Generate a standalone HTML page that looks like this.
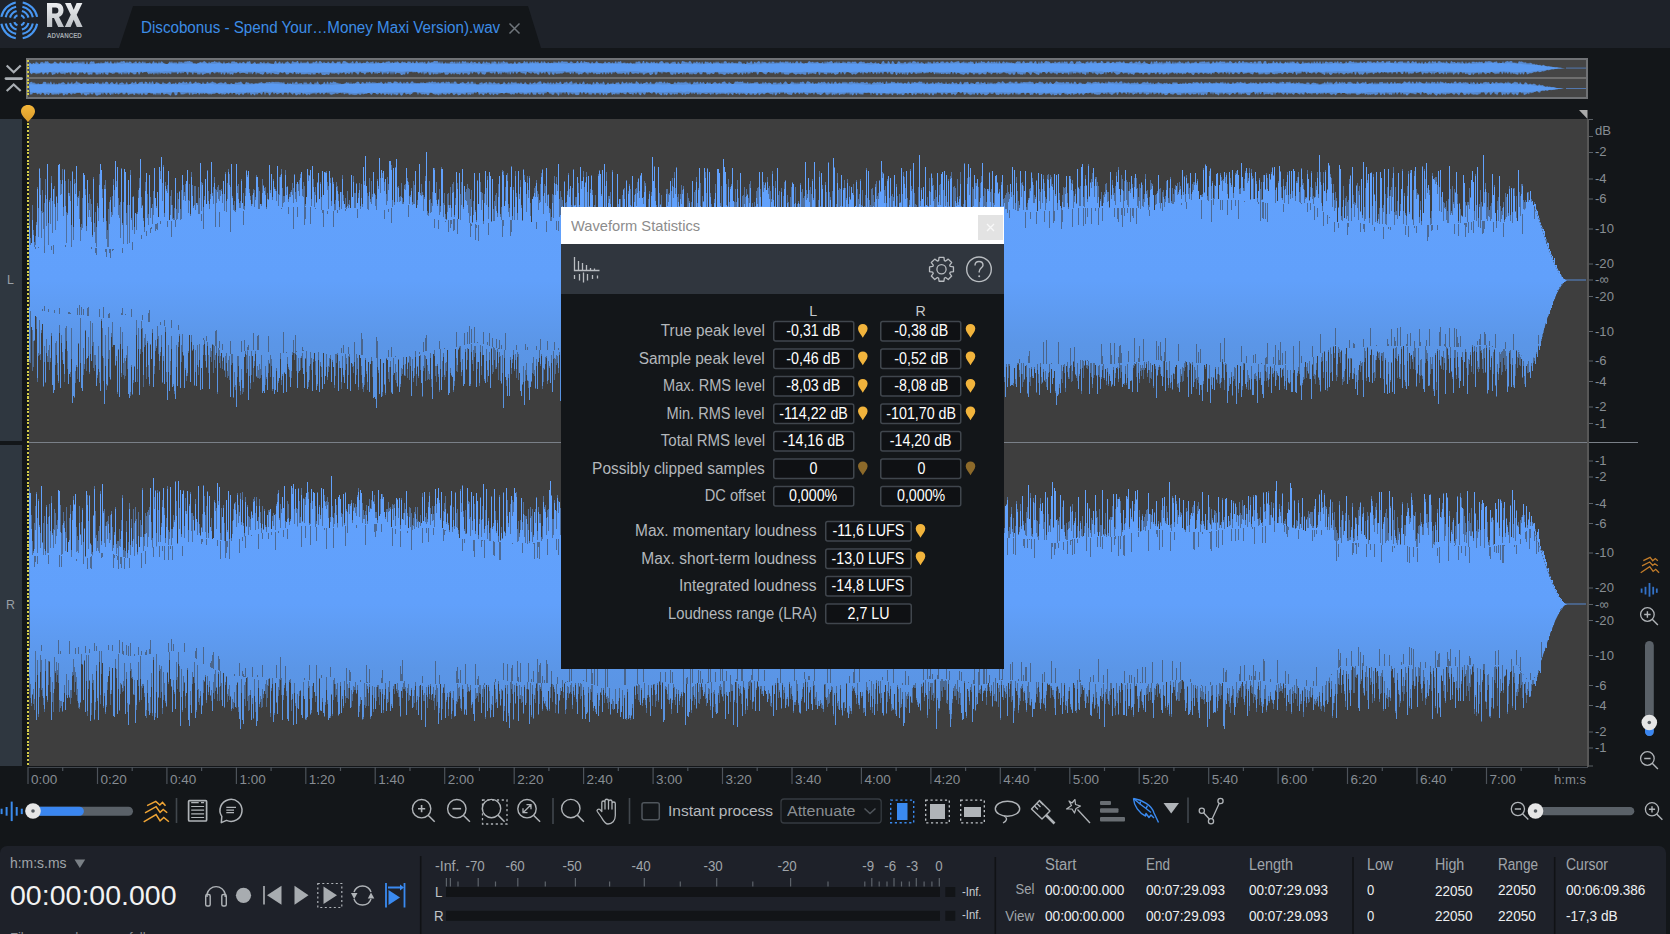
<!DOCTYPE html>
<html><head><meta charset="utf-8">
<style>
*{margin:0;padding:0;box-sizing:border-box}
html,body{width:1670px;height:934px;overflow:hidden;background:#131619;font-family:"Liberation Sans",sans-serif;position:relative}
.a{position:absolute}
.t{position:absolute;white-space:pre;line-height:1}
</style></head><body>
<!-- header -->
<div class="a" style="left:0;top:0;width:1670px;height:48px;background:#1e2229"></div>
<svg class="a" style="left:0;top:0" width="560" height="48">
<polygon points="119,48 133,6 528,6 541,48" fill="#131619"/>
<path d="M37.12 16.83A18.2 18.2 0 0 0 22.72 2.43M15.78 2.43A18.2 18.2 0 0 0 1.38 16.83M1.38 23.77A18.2 18.2 0 0 0 15.78 38.17M22.72 38.17A18.2 18.2 0 0 0 37.12 23.77M32.84 17.16A13.95 13.95 0 0 0 22.39 6.71M16.11 6.71A13.95 13.95 0 0 0 5.66 17.16M5.66 23.44A13.95 13.95 0 0 0 16.11 33.89M22.39 33.89A13.95 13.95 0 0 0 32.84 23.44M28.48 17.65A9.6 9.6 0 0 0 21.90 11.07M16.60 11.07A9.6 9.6 0 0 0 10.02 17.65M10.02 22.95A9.6 9.6 0 0 0 16.60 29.53M21.90 29.53A9.6 9.6 0 0 0 28.48 22.95M24.23 18.49A5.3 5.3 0 0 0 21.06 15.32M17.44 15.32A5.3 5.3 0 0 0 14.27 18.49M14.27 22.11A5.3 5.3 0 0 0 17.44 25.28M21.06 25.28A5.3 5.3 0 0 0 24.23 22.11" stroke="#4897f2" stroke-width="2.1" fill="none"/>
<defs><linearGradient id="rxg" x1="0" y1="0" x2="0" y2="1"><stop offset="0" stop-color="#eceef0"/><stop offset="1" stop-color="#bfc3c7"/></linearGradient></defs>
<path d="M47 3H56.5C61 3 63.5 5.8 63.5 10.2C63.5 13.6 61.8 16 59 16.9L64 27H58.2L54 18H52.2V27H47ZM52.2 7.6V13.6H55.8C57.5 13.6 58.4 12.5 58.4 10.6C58.4 8.7 57.5 7.6 55.8 7.6Z" fill="url(#rxg)"/>
<path d="M65 3H70.8L73.7 9.8L76.6 3H82.4L76.7 14.8L82.6 27H76.8L73.7 19.8L70.6 27H64.8L70.7 14.8Z" fill="url(#rxg)"/>
</svg>
<div class="t" style="left:47.3px;top:31.8px;font-size:7.5px;font-weight:700;color:#a3a9ae;transform:scaleX(0.83);transform-origin:left">ADVANCED</div>
<div class="a" style="left:508px;top:21px;width:13px;height:13px">
<svg width="13" height="13"><path d="M1.5 1.5L11.5 11.5M11.5 1.5L1.5 11.5" stroke="#6f757b" stroke-width="1.5"/></svg></div>
<!-- overview -->
<svg class="a" style="left:0;top:48px" width="26" height="56">
<path d="M6.7 17.5L13.7 24.2L20.7 17.5M6.7 43L13.7 36.5L20.7 43" stroke="#a9aeb3" stroke-width="2.2" fill="none"/>
<path d="M6 30.6H21.5" stroke="#a9aeb3" stroke-width="2.8" stroke-linecap="round"/>
</svg>
<div class="a" style="left:26px;top:58px;width:1562px;height:41px;background:#454545;border:2px solid #707275"></div>
<div style="position:absolute;left:28px;top:60px;width:1558px;height:37px;overflow:hidden">
<div class="a" style="left:-28px;top:-60px;width:1670px;height:104px"><svg class="a" style="left:0;top:0" width="1670" height="104">
<g transform="scale(1 0.1)">
<path d="M29 623l1 4 1 6 1 9 1-12 1-1 1 11 1-28 1 16 1-4 1 19 1-7 1-19 1 8 1-7 1 23 1-28 1 1 1 1 1-3 1 17 1 0 1 8 1-1 1 1 1-18 1-5 1 8 1 8 1 8 1-2 1-18 1 0 1 11 1-4 1 14 1-21 1-3 1 24 1-19 1 19 1-21 1-1 1 15 1 6 1-21 1 9 1-9 1 5 1-10 1 27 1-30 1 29 1-29 1 20 1-18 1 32 1-7 1-25 1 26 1 6 1-23 1-5 1-2 1 7 1-10 1 29 1-3 1-3 1-1 1-7 1 16 1-23 1 19 1-11 1 12 1-24 1 1 1 8 1-12 1 29 1-19 1-12 1 26 1-1 1 0 1-20 1 25 1-27 1 19 1-11 1 8 1-18 1 7 1-5 1-1 1 7 1 15 1-22 1 21 1-17 1 2 1 0 1 16 1-2 1-6 1-2 1-14 1 20 1 4 1-18 1 2 1 12 1-3 1-17 1 23 1-20 1 28 1-10 1 6 1-8 1-6 1 17 1-5 1-20 1-1 1 22 1-18 1 17 1 5 1-28 1 27 1-24 1 2 1 9 1 7 1 5 1 2 1 3 1-5 1-13 1-11 1 18 1-21 1 27 1-20 1 15 1-15 1 15 1 4 1-26 1 17 1-13 1 11 1 1 1 1 1-17 1 11 1-12 1 7 1-5 1 0 1 8 1-4 1 16 1 3 1-3 1 7 1-3 1-8 1 2 1-11 1 5 1 1 1-3 1-10 1 3 1 8 1 7 1 9 1-22 1 13 1-5 1-6 1 5 1-7 1-5 1 13 1-9 1 16 1-20 1 13 1 0 1 15 1-5 1-21 1 25 1-3 1-5 1 0 1-10 1 18 1-10 1-18 1 10 1-9 1 9 1 3 1-4 1 20 1-4 1-18 1 19 1-8 1-8 1-2 1 17 1 5 1-26 1 3 1-2 1-4 1 27 1 0 1-2 1-12 1-4 1 14 1 5 1-10 1 12 1-18 1-3 1 7 1 6 1-17 1 19 1-4 1 2 1-17 1 20 1-9 1 13 1-7 1 9 1-7 1-22 1-3 1 25 1-2 1-15 1-3 1 22 1-13 1 1 1 18 1-18 1-1 1-9 1 0 1 13 1 2 1 9 1-21 1-7 1 14 1-8 1 8 1-15 1 1 1 26 1-3 1-25 1 23 1-9 1 6 1-6 1 6 1-12 1-4 1 18 1 8 1-15 1 13 1-21 1 10 1-4 1-9 1-4 1 28 1-22 1-5 1 5 1 9 1 9 1-18 1 15 1-3 1 6 1-21 1 13 1 5 1 6 1-18 1-9 1 17 1 4 1 4 1-13 1-5 1 5 1-9 1 25 1-5 1-19 1-3 1 3 1 3 1 9 1 1 1 8 1-9 1 4 1-11 1-8 1 25 1-4 1-16 1-6 1 17 1 8 1-18 1 20 1 0 1-9 1-2 1 7 1-10 1-13 1 8 1 7 1 4 1-10 1 7 1-15 1 24 1-3 1-19 1 17 1-7 1 4 1 10 1-2 1-1 1-17 1 8 1 3 1-6 1-5 1 1 1-7 1 10 1 12 1-13 1 6 1 11 1-23 1 14 1-15 1 6 1 8 1 9 1-7 1-12 1 2 1 8 1-10 1 17 1-2 1-22 1 11 1-8 1 15 1 4 1-20 1 22 1 6 1-27 1 0 1 14 1 5 1-13 1 10 1-14 1 11 1 1 1-12 1 25 1-5 1-20 1-2 1 17 1-7 1 1 1-2 1-11 1 1 1 1 1-1 1 5 1 16 1-23 1 31 1-29 1 22 1 8 1-13 1-5 1 18 1-19 1 18 1-20 1 2 1-9 1 9 1 3 1-12 1 27 1-31 1 26 1-21 1 3 1 24 1-27 1-5 1 11 1-8 1 4 1 17 1-18 1 19 1-7 1-13 1 2 1 13 1-8 1 0 1 4 1 12 1-9 1-13 1 9 1 16 1 1 1-22 1-7 1 22 1-17 1 1 1 12 1-8 1 7 1 11 1-31 1 22 1-20 1 8 1-3 1 27 1-19 1-13 1 28 1-26 1 20 1-24 1 5 1 5 1 9 1-14 1 19 1 7 1-7 1-1 1 0 1 7 1-12 1-14 1 22 1 4 1-15 1-2 1-3 1 19 1-6 1 1 1-22 1 3 1 13 1-16 1 19 1 9 1-29 1 17 1-8 1-7 1 26 1-28 1 11 1 3 1-12 1 17 1 7 1-17 1-8 1 25 1-26 1 10 1 9 1 9 1-20 1 10 1 7 1-6 1-3 1 8 1-24 1 19 1-13 1 19 1-15 1-9 1 19 1-16 1-2 1 1 1 8 1-9 1 7 1-6 1 15 1 2 1-4 1-15 1 12 1 2 1 9 1-4 1 1 1-19 1-3 1 24 1-6 1-18 1 3 1 22 1-25 1 8 1 3 1 0 1 5 1-6 1 18 1-2 1-21 1 13 1 7 1-5 1-12 1-6 1 16 1 3 1 6 1-7 1 10 1-4 1-4 1-18 1 12 1 8 1-10 1-3 1 3 1 13 1-10 1 0 1 15 1-21 1-11 1 26 1-22 1 6 1-5 1-3 1 30 1-17 1 6 1-7 1 14 1-10 1 2 1 8 1-9 1-3 1 16 1-2 1-11 1 12 1-27 1 11 1-8 1 0 1-1 1 26 1-5 1-27 1 2 1 28 1-19 1-6 1 14 1-4 1 16 1-25 1 7 1 5 1-13 1 13 1 8 1-18 1 23 1-12 1-10 1-5 1-2 1 6 1 15 1-3 1-10 1 9 1-9 1 16 1 4 1-13 1 2 1-13 1 11 1-13 1 20 1 9 1-27 1 9 1 14 1 0 1-29 1 4 1 3 1 2 1 7 1-4 1 10 1-15 1-5 1 7 1 17 1-1 1-16 1 11 1-6 1-10 1 14 1-3 1-4 1 19 1-24 1 15 1 12 1-25 1-3 1 12 1-12 1 19 1-11 1-4 1 23 1-9 1-15 1 18 1-23 1 18 1-17 1 17 1-2 1 10 1-18 1 20 1-28 1 3 1-5 1 17 1 8 1-17 1 16 1-5 1-11 1 9 1 0 1 6 1-7 1 10 1-9 1-18 1 12 1-7 1 18 1 5 1-6 1 7 1 7 1-32 1 15 1-1 1 0 1-18 1 8 1 28 1-22 1-6 1 14 1-8 1-8 1-6 1 12 1 16 1-27 1 18 1-13 1 11 1-7 1 20 1-15 1 1 1-13 1 22 1-22 1 9 1-7 1 20 1-15 1 11 1-7 1 6 1-16 1 5 1 7 1-9 1 11 1-7 1-10 1 13 1-12 1 22 1-19 1 11 1 12 1-23 1 24 1-10 1-11 1-7 1 10 1 19 1-19 1-7 1 19 1-3 1 10 1-10 1 1 1 5 1-12 1-12 1 5 1 10 1-5 1-4 1 11 1-6 1 4 1-9 1 2 1 12 1 4 1 3 1-14 1-5 1 20 1-29 1 26 1-25 1 15 1-9 1 0 1-6 1 1 1 17 1 4 1-15 1 12 1-21 1 30 1-30 1 26 1-7 1 6 1-25 1 21 1-16 1 22 1-12 1-12 1 8 1-6 1 15 1-9 1-6 1 8 1-9 1 10 1 8 1 7 1-16 1-4 1-4 1 3 1 8 1-10 1 14 1 7 1-8 1-1 1 2 1-1 1-11 1 10 1 5 1 1 1-8 1-2 1 17 1-12 1 5 1 6 1 2 1-22 1-10 1 3 1 25 1-9 1 15 1-32 1 5 1 13 1 15 1-30 1-4 1 15 1 17 1-3 1-5 1-19 1-2 1 8 1 15 1-11 1 12 1-14 1 0 1-3 1 24 1-25 1 11 1-17 1 16 1-4 1-16 1 5 1-2 1 11 1 4 1-14 1 14 1 9 1-13 1 0 1 8 1 4 1 5 1-18 1 17 1-27 1 14 1-3 1 3 1 11 1-7 1-19 1 20 1-9 1-2 1-5 1 16 1-2 1-16 1 7 1-11 1 16 1 2 1-4 1-8 1 6 1 6 1 3 1-19 1 5 1 5 1 6 1-10 1 4 1-9 1 4 1-6 1 24 1-1 1-13 1 5 1-15 1 24 1-18 1 21 1-18 1 7 1-9 1-4 1 10 1-9 1 24 1 2 1-29 1 17 1 9 1-24 1 22 1-26 1 7 1 7 1-9 1 11 1 5 1-6 1-11 1 0 1 16 1-8 1-5 1 12 1-13 1 5 1 8 1-19 1 31 1-31 1 11 1 20 1-10 1-15 1-1 1 13 1-3 1-8 1 13 1-9 1 13 1-10 1 5 1 3 1-2 1 9 1-17 1-4 1-8 1 12 1-10 1 23 1-4 1-14 1-7 1 18 1 4 1-7 1 4 1-1 1-17 1 10 1-9 1 29 1-12 1-16 1 1 1 24 1-3 1-23 1 30 1-26 1-3 1 18 1-1 1-13 1-6 1 3 1 2 1 1 1 6 1 16 1-11 1 1 1 2 1-18 1 12 1 4 1-6 1-3 1-3 1 21 1-28 1 24 1-15 1-6 1 12 1-13 1 26 1-3 1-11 1-14 1 3 1 3 1 26 1-4 1-13 1-13 1 8 1-9 1 2 1 11 1 6 1 0 1-2 1 12 1-21 1 4 1-13 1 26 1-19 1 1 1-6 1 26 1-25 1 8 1-10 1 25 1 2 1-16 1 13 1-23 1 0 1 8 1 17 1-5 1 1 1-21 1 12 1-13 1 24 1 1 1-13 1-4 1 4 1 9 1-8 1-7 1 6 1-7 1 0 1 5 1 11 1-13 1-5 1 16 1 8 1-9 1 9 1-7 1-10 1-2 1-3 1 21 1-11 1 3 1-15 1 9 1 3 1-16 1 3 1 23 1-6 1-2 1-15 1 6 1 15 1-4 1 12 1 2 1 0 1-23 1-8 1 32 1-34 1 14 1-11 1-2 1 25 1-13 1-1 1 5 1-15 1 29 1-22 1 15 1-17 1-8 1 15 1-9 1-6 1 27 1 0 1-27 1 30 1-23 1 18 1-13 1 9 1-18 1 2 1 11 1 4 1-7 1 18 1-12 1-8 1 8 1-17 1 8 1 14 1 5 1-17 1 14 1-13 1 4 1-14 1 16 1 9 1-6 1-18 1 11 1-13 1 11 1-12 1 8 1 9 1-11 1 9 1-15 1 28 1-1 1-7 1-20 1 13 1 7 1-11 1-10 1 18 1-8 1-6 1-1 1 8 1-7 1 8 1-9 1 26 1-24 1 18 1-15 1-7 1 6 1 6 1 13 1-6 1-5 1-9 1 20 1-11 1-14 1-1 1 27 1-18 1-9 1 9 1 10 1-10 1 8 1-3 1 7 1-8 1-3 1 0 1 15 1-17 1-1 1 2 1 19 1-25 1 4 1-7 1 5 1 20 1 3 1-25 1 0 1-1 1 31 1-9 1-8 1 13 1-7 1 7 1-28 1 5 1 18 1-11 1-7 1 14 1 12 1-32 1 17 1 7 1 1 1 4 1-19 1-1 1 14 1-20 1 28 1-31 1 21 1-20 1 13 1-11 1 20 1 1 1-18 1 5 1 12 1 6 1 2 1-13 1-16 1 24 1-13 1 10 1-8 1 7 1-10 1 13 1 0 1-18 1 26 1-31 1 14 1 6 1-21 1 17 1 2 1-18 1 19 1 11 1-30 1 28 1-16 1-10 1 6 1 4 1 4 1-12 1 7 1-8 1 17 1 4 1-25 1 20 1-12 1-8 1 26 1-16 1-3 1 9 1 12 1-7 1 2 1-20 1 12 1 8 1-21 1 1 1-4 1 14 1-5 1-3 1 16 1-17 1 15 1-6 1 8 1-11 1-7 1 18 1-6 1-4 1-1 1 17 1-23 1-2 1 0 1 9 1-12 1 20 1-7 1 0 1 0 1 8 1-20 1-1 1 17 1-5 1 4 1-14 1-1 1 5 1 19 1-16 1-2 1 0 1-3 1-3 1 27 1-20 1 17 1-11 1-12 1 1 1 22 1-13 1-4 1-1 1-1 1 0 1 0 1 20 1-19 1 19 1-21 1-1 1-2 1 22 1-2 1-15 1-6 1 13 1-1 1-11 1 19 1 7 1-16 1 11 1 3 1-22 1 23 1 1 1-20 1 5 1 17 1-13 1-10 1-3 1 25 1-23 1-5 1 15 1-14 1 9 1 19 1-26 1 3 1-6 1 14 1-5 1 11 1-15 1 24 1-26 1 5 1 13 1-1 1 8 1-29 1 5 1 11 1-5 1 1 1 12 1-6 1-11 1 15 1-14 1 21 1-28 1 14 1 7 1 6 1-23 1 23 1-9 1-2 1-4 1 18 1-24 1 4 1-5 1 11 1-6 1-3 1 10 1-13 1 6 1 3 1-7 1 15 1 4 1-17 1-7 1 9 1-10 1 5 1-5 1 7 1 1 1 13 1-13 1 3 1-5 1-2 1 23 1-13 1 6 1 0 1 2 1-21 1 23 1-14 1-4 1-4 1-2 1 10 1-11 1 3 1-1 1 21 1-11 1 12 1-11 1 14 1-6 1-19 1 6 1-1 1-2 1 8 1 2 1 0 1-2 1 16 1-11 1 10 1-11 1 6 1 1 1 15 1-14 1 14 1-1 1-5 1 12 1 2 1-10 1 12 1-1 1-10 1 4 1 6 1 4 1 3 1 0 1-3 1 6 1-2 1 3 1 2 1-1 1 5 1-2 1 1 1 2 1 2 1 0 1 1 1 1 1 0 1 1 1 0 1 0 1 0 1 0 1 0 1 0 1 0 1 0 1 0 1 0 1 0 1 0 1 0 1 0 1 0 1 0 1 0 1 0 1 0 1 0 1 0 1 0 1 0-1 0-1 0-1 0-1 0-1 0-1 0-1 0-1 0-1 0-1 0-1 0-1 0-1 0-1 0-1 0-1 0-1 0-1 0-1 1-1 0-1 0-1 0-1 0-1 1-1 1-1 1-1 2-1 0-1 0-1 3-1 1-1 1-1 1-1 3-1-5-1 5-1 2-1 6-1-1-1-4-1 10-1-1-1 7-1-1-1 0-1 7-1-1-1 3-1-10-1 5-1 5-1 0-1-1-1 7-1 1-1 5-1-4-1 8-1 1-1 5-1-27-1-1-1 27-1 3-1-23-1 22-1-6-1-17-1 28-1-7-1 1-1-9-1 3-1 0-1-14-1 24-1-22-1-7-1 24-1-14-1-8-1 20-1-29-1 20-1 14-1-31-1 1-1 26-1-11-1 12-1-10-1 13-1-18-1 5-1-17-1-4-1 27-1-10-1 1-1 0-1 15-1-7-1-8-1-12-1 8-1 21-1-22-1 24-1-17-1-8-1 11-1-6-1 14-1 6-1-24-1 22-1 2-1 0-1-6-1-11-1 11-1-5-1-20-1 23-1-15-1-4-1-1-1 20-1 7-1-29-1 17-1-6-1 17-1-5-1-21-1 17-1-20-1 19-1-16-1 17-1 7-1-33-1 33-1-7-1-11-1 6-1 7-1-2-1-20-1 7-1 3-1 3-1 17-1-27-1 27-1-15-1-3-1-9-1 13-1-1-1 2-1-3-1-6-1 19-1-3-1-26-1 0-1 8-1 2-1 4-1 3-1-20-1 12-1 12-1-5-1 9-1-14-1 20-1-17-1-14-1 24-1-20-1-7-1 26-1 1-1-6-1-16-1 5-1-5-1 28-1-22-1-4-1 4-1-2-1 24-1-28-1 11-1-8-1 20-1-18-1 5-1-6-1-3-1 16-1-21-1 10-1 9-1 1-1-15-1 5-1 8-1-7-1 17-1-3-1-16-1 10-1-9-1 13-1-10-1 22-1-21-1-6-1 16-1 6-1 5-1-15-1 15-1-10-1-9-1-14-1 30-1 2-1-33-1 5-1 24-1-20-1 13-1-9-1 18-1-15-1 0-1 9-1 6-1-3-1-11-1 1-1-6-1 21-1-26-1 10-1 3-1 0-1-3-1-3-1 13-1 8-1-2-1-11-1-15-1 22-1-27-1 31-1 1-1-13-1 4-1-16-1 5-1-9-1 4-1 6-1 15-1-20-1 0-1 0-1 12-1-4-1-3-1-1-1-15-1 27-1-7-1-20-1 8-1 1-1-10-1 26-1-13-1 17-1-18-1 24-1-4-1-31-1 6-1 22-1-10-1-4-1 2-1-5-1 10-1 7-1-17-1-6-1 5-1 15-1 4-1-10-1-2-1 4-1-4-1 15-1-13-1 13-1-5-1 1-1-10-1-13-1 11-1 16-1-12-1 15-1-11-1 9-1-24-1 22-1-13-1 15-1-12-1 15-1-27-1 3-1 5-1-10-1 3-1 20-1-1-1-6-1-1-1-12-1 6-1-2-1 9-1-6-1 11-1-7-1-15-1-4-1 17-1 10-1-6-1-8-1-4-1 1-1 15-1 2-1-6-1-16-1 13-1 14-1-28-1 15-1 0-1-18-1 8-1 21-1-27-1 8-1-4-1 19-1-9-1-9-1-4-1-2-1 21-1-13-1 10-1 11-1-17-1 7-1 2-1-7-1 3-1-7-1 10-1 4-1-19-1 3-1 0-1 20-1-8-1-10-1 3-1-3-1 19-1 3-1-8-1-10-1-2-1 8-1-16-1-3-1 15-1 8-1-11-1 13-1-3-1-14-1 13-1-10-1-6-1 23-1-18-1 6-1 3-1-18-1 1-1 15-1-5-1 8-1 10-1-26-1 13-1 9-1-4-1 6-1-22-1 11-1 7-1-1-1-22-1 7-1 19-1-8-1-19-1 13-1-2-1-7-1 22-1 1-1-2-1-22-1-2-1 7-1 11-1 12-1-20-1 0-1 8-1-9-1-6-1 4-1-5-1 9-1 18-1-4-1-4-1 1-1-14-1 19-1-7-1-16-1 11-1-11-1 14-1-4-1-14-1-2-1 20-1 0-1 9-1-2-1 1-1-15-1-3-1-13-1 26-1-16-1-8-1 9-1 3-1-14-1 34-1-31-1 14-1 8-1-1-1 7-1-5-1-12-1 18-1 1-1-11-1-2-1-16-1 23-1-16-1 0-1-7-1-1-1 28-1-29-1 30-1 2-1-14-1 8-1-11-1-13-1 25-1-22-1 12-1-17-1 17-1 1-1-6-1 10-1-26-1 36-1-35-1 36-1-10-1-16-1 17-1-17-1 10-1 7-1-2-1-14-1 7-1-5-1 4-1 19-1-15-1-1-1-2-1-10-1 16-1-6-1 4-1-21-1 10-1 13-1-1-1-14-1-2-1-9-1 19-1 6-1-13-1 26-1-3-1-5-1 1-1-14-1 3-1-14-1 15-1 16-1-4-1-15-1-6-1-5-1 4-1 26-1-19-1 18-1-3-1-1-1 0-1-8-1 10-1-22-1-6-1 28-1 1-1 1-1-23-1 20-1 1-1-1-1-12-1 0-1 3-1-11-1-1-1-2-1 13-1-2-1 8-1-6-1-7-1 19-1-23-1 6-1-2-1 0-1 11-1 7-1-21-1 9-1-13-1 1-1 22-1-1-1 0-1-8-1-4-1 15-1-7-1 10-1-19-1 5-1-2-1 3-1 14-1-12-1-7-1 2-1-12-1 13-1 14-1-9-1-11-1 14-1 4-1 4-1-11-1 6-1-9-1-4-1-7-1 9-1 10-1-24-1 3-1 24-1-26-1 0-1 25-1-11-1 2-1 3-1 2-1-15-1 15-1-8-1 6-1 0-1-15-1 21-1-27-1 26-1-25-1 22-1-3-1-22-1 7-1 5-1-6-1-4-1 16-1-13-1 13-1-7-1 13-1-24-1 7-1 13-1-13-1 17-1-16-1 17-1-7-1 2-1-19-1 12-1 11-1-1-1-14-1-3-1 23-1 3-1-30-1 31-1-19-1 13-1-5-1-16-1 16-1-3-1-12-1 25-1 0-1-27-1-7-1 31-1-5-1 3-1-17-1-11-1 23-1-8-1-17-1 7-1-4-1 30-1-20-1-5-1 5-1 16-1-25-1 28-1-13-1-15-1 19-1 2-1-18-1-9-1 29-1-28-1 18-1 3-1-1-1-7-1-4-1 28-1-29-1 13-1-7-1-7-1 9-1 6-1 11-1-2-1-10-1 10-1 3-1-15-1-3-1-7-1-2-1 3-1 1-1 24-1-11-1-18-1 7-1 21-1-26-1 2-1 20-1-4-1 9-1 0-1-10-1-10-1 11-1-3-1-10-1 13-1-16-1 20-1 1-1-6-1 3-1-21-1 14-1-13-1 25-1 4-1-32-1-2-1 26-1-3-1-4-1 1-1-5-1 11-1-13-1 15-1-5-1-23-1 32-1-1-1-1-1-4-1-8-1 10-1-1-1-6-1 0-1 4-1 9-1-7-1-6-1-4-1-11-1 14-1-5-1 12-1 7-1-9-1 8-1-10-1 7-1-24-1 26-1-28-1 5-1-3-1 17-1-8-1 1-1 13-1-22-1 4-1 7-1-9-1 9-1-18-1 7-1 9-1 15-1-10-1 3-1-12-1-6-1-3-1-4-1 11-1 21-1-4-1-28-1 12-1-13-1 12-1 7-1-16-1 24-1-12-1 19-1-30-1 16-1 6-1-17-1 22-1 2-1-21-1 9-1 10-1-1-1-12-1-10-1 7-1-1-1 15-1 0-1-2-1-8-1 4-1 5-1-13-1 11-1 10-1-3-1-2-1-7-1 2-1-4-1 12-1-26-1 2-1-2-1 1-1 18-1-2-1-5-1-5-1 15-1-2-1-2-1 8-1-26-1 0-1 1-1-5-1 26-1-3-1 3-1-18-1-1-1 9-1 11-1-4-1 2-1-12-1 19-1-18-1 15-1-13-1-8-1 2-1 2-1 19-1-29-1 30-1-17-1-6-1 7-1 6-1 0-1-22-1 24-1 5-1-16-1 19-1-5-1 3-1-15-1-19-1 12-1-7-1 14-1-18-1 13-1-12-1 27-1-25-1 11-1-15-1 2-1 30-1-2-1 3-1-34-1 28-1 1-1 8-1 0-1-17-1-8-1 11-1-3-1 8-1 6-1-1-1-21-1 15-1-17-1 13-1 5-1-8-1 1-1-5-1 12-1-5-1 3-1-16-1-7-1 24-1 9-1-27-1 20-1 3-1-12-1-5-1 14-1-9-1 7-1-7-1 9-1-11-1-7-1-8-1 20-1-20-1 28-1-9-1-15-1 15-1 5-1-17-1 25-1-12-1-18-1 29-1-11-1-10-1 16-1-2-1-2-1 7-1-7-1-10-1 17-1-15-1-8-1 5-1 8-1-13-1 27-1-20-1 8-1-21-1 11-1 1-1 18-1-9-1 4-1 6-1-4-1-17-1 15-1-26-1 7-1 24-1-29-1 23-1-1-1-20-1 11-1-11-1 13-1-21-1 18-1-5-1 18-1-14-1 13-1-9-1 9-1-5-1 6-1-20-1 28-1-6-1-1-1-31-1 34-1 3-1-15-1-14-1-5-1 30-1-23-1 5-1 11-1-5-1-18-1 33-1-4-1-1-1-16-1 15-1-12-1-5-1-2-1 20-1-17-1 7-1-16-1 3-1 28-1-4-1-17-1 14-1-17-1 12-1-23-1 8-1 2-1 17-1-7-1-20-1 15-1 15-1-31-1 22-1 13-1-33-1 33-1-27-1 18-1-17-1 6-1-1-1 0-1 23-1-25-1 19-1-3-1-28-1 2-1 34-1-17-1-9-1 17-1-12-1 7-1-23-1 19-1-18-1 24-1 8-1 3-1-6-1 4-1-24-1 7-1 18-1-3-1-20-1 2-1-1-1-9-1 15-1 9-1-26-1 27-1 5-1 4-1-20-1 8-1-6-1 7-1 11-1-23-1 4-1 18-1-5-1-6-1 8-1-12-1 0-1 15-1-17-1 10-1 4-1-18-1 7-1 12-1 1-1-1-1 2-1-28-1 4-1 10-1-9-1 18-1-21-1 23-1-9-1 12-1-16-1 11-1 3-1-27-1 25-1 6-1-5-1-24-1 4-1 16-1-11-1 20-1-37-1 29-1-16-1 0-1 9-1-3-1-16-1 5-1 5-1-8-1 9-1-12-1 5-1-3-1 6-1 22-1-9-1-21-1 32-1-5-1 2-1 5-1 0-1-17-1 0-1-3-1-2-1 12-1 4-1-33-1 39-1-33-1 33-1-33-1 16-1 6-1 5-1-24-1 23-1-21-1 26-1-6-1-28-1 16-1 2-1-2-1 14-1-20-1 19-1-25-1 5-1 23-1-13-1-11-1 2-1 4-1-5-1 11-1 15-1-10-1-11-1 6-1-9-1-10-1 19-1 16-1-14-1-3-1-11-1 1-1 1-1 27-1-29-1 11-1 10-1-9-1-2-1 14-1-6-1-19-1 10-1 2-1 3-1-11-1 22-1 0-1-15-1 5-1-6-1 12-1-15-1 16-1-19-1 6-1 20-1-3-1-4-1 3-1 3-1 1-1-3-1 3-1-19-1-5-1 19-1-17-1-1-1 2-1 20-1-12-1 12-1-24-1 25-1-7-1 1-1-2-1-7-1 10-1-8-1 11-1-11-1 10-1-8-1-20-1 24-1-6-1-1-1 9-1-24-1 1-1 22-1-11-1 0-1-14-1 18-1 7-1-2-1 2-1-24-1 1-1 14-1-4-1-3-1-10-1 23-1 5-1-3-1-3-1 3-1-9-1-2-1-3-1 21-1-23-1 11-1-4-1 10-1-18-1-9-1 21-1 10-1-4-1-5-1 3-1-15-1 10-1-12-1 25-1-37-1 10-1 11-1 10-1-29-1 30-1-32-1 30-1-7-1 4-1-10-1 0-1-3-1 4-1-2-1 8-1-11-1-8-1 13-1 2-1-1-1-6-1 24-1-7-1-6-1 12-1-25-1 21-1-14-1-8-1 20-1 7-1-27-1 17-1 5-1-29-1 21-1-20-1 11-1-8-1 18-1-8-1-8-1-4-1 12-1 19-1-19-1 5-1-4-1 5-1 1-1 4-1 8-1-5-1-19-1 24-1-13-1 13-1-16-1-9-1 9-1-14-1 30-1-15-1-14-1 10-1-17-1 36-1-10-1-20-1 1-1 3-1 11-1-14-1 21-1-16-1 1-1 17-1-5-1-25-1 23-1-22-1 22-1-23-1 32-1-11-1 3-1-12-1 23-1-18-1 5-1 4-1-6-1 3-1-8-1 18-1-27-1 30-1-25-1 18-1-16-1 23-1-16-1-1-1 10-1-13-1 15-1-9-1-13-1-6-1 10-1-12-1 19-1-8-1-11-1 22-1 13-1-24-1-8-1 27-1-3-1 6-1-13-1-1-1-9-1-1-1 24-1-9-1-16-1 25-1-22-1 22-1-30-1 33-1-13-1-7-1 16-1-23-1 6-1-9-1 12-1 3-1 2-1 0-1-9-1-1-1-8-1 30-1-3-1-1-1-9-1-16-1 29-1-21-1 8-1 12-1-17-1 19-1-9-1 9-1-31-1 12-1-12-1 30-1-10-1 8-1-3-1 3-1-24-1 5-1 15-1-6-1-9-1-9-1 19-1-20-1 19-1 11-1 0-1-31-1 20-1-12-1 0-1-4-1 29-1-10-1-19-1 10-1 2-1-8-1 25-1-18-1 8-1-5-1 5-1-12-1-5-1 17-1-5-1-11-1 22-1-7-1 11-1-2-1-30-1 1-1 3-1 20-1 2-1-23-1 9-1 11-1 6-1-16-1-10-1 16-1-6-1 10-1-9-1 13-1-18-1 8-1-9-1 16-1-1-1-15Z" fill="#5a97ea" opacity="0.85"/>
<path d="M29 637l3 7 3-5 3 5 3-6 3-3 3 0 3 4 3-5 3 4 3-1 3-2 3 0 3 0 3 1 3 1 3 4 3-5 3 7 3 0 3 1 3-5 3-1 3 0 3 0 3-3 3 0 3 1 3 1 3 1 3-6 3 7 3-7 3 1 3 6 3 1 3-2 3 1 3-2 3-2 3 1 3 2 3-3 3 1 3-1 3 3 3 1 3-3 3-1 3 7 3-1 3-3 3 3 3-6 3 0 3 5 3-1 3-6 3 1 3 0 3 4 3 0 3 2 3-7 3 1 3 3 3-1 3 1 3 2 3-5 3 0 3 3 3-2 3-1 3 5 3-1 3 1 3 4 3-3 3 3 3-4 3 0 3 3 3-4 3 1 3 1 3-3 3 4 3-1 3-4 3 0 3 2 3-1 3-3 3 5 3-4 3 4 3-1 3-4 3-1 3 5 3-3 3 3 3-5 3 6 3 1 3-7 3 6 3 0 3-1 3-2 3 0 3-3 3 6 3-1 3 1 3-3 3-4 3-2 3 5 3 3 3-5 3-3 3 3 3 1 3-2 3 1 3 4 3-5 3 0 3 6 3-2 3 3 3-5 3-1 3 1 3 3 3 1 3-1 3 1 3 1 3 0 3 1 3 0 3-1 3-2 3 6 3-7 3 8 3-6 3 2 3-3 3 5 3 2 3-1 3-5 3 6 3-4 3 3 3-5 3 0 3 4 3-4 3 2 3-5 3 0 3 3 3-3 3-2 3 3 3-2 3 1 3-2 3 2 3-2 3 1 3-2 3 2 3 0 3 5 3-5 3 5 3-3 3 2 3-5 3 2 3-1 3 1 3 2 3-1 3-1 3 1 3 1 3 1 3 0 3-2 3 4 3-4 3-1 3 3 3-1 3-1 3 6 3-1 3-5 3-2 3 0 3 2 3 0 3 0 3 1 3-2 3 4 3-2 3 2 3 0 3 1 3 1 3-2 3 0 3 0 3 4 3-6 3 6 3-1 3-2 3 1 3-5 3 5 3-5 3 2 3 3 3-1 3-2 3-1 3 4 3-1 3-3 3 6 3-3 3 4 3 0 3-5 3 3 3 1 3-7 3 0 3 5 3-2 3-1 3 0 3-5 3 5 3-3 3 2 3-2 3 1 3-2 3 3 3-2 3-2 3 5 3 0 3-2 3-4 3 8 3-2 3-2 3 1 3-2 3 0 3-2 3 3 3 1 3 3 3-3 3 4 3-5 3 5 3-3 3 6 3 0 3-4 3-3 3 5 3 2 3-6 3 2 3 3 3-3 3-1 3 6 3-2 3-5 3 2 3 2 3-1 3 0 3-2 3 0 3 4 3-3 3-1 3 2 3-5 3 1 3-3 3 3 3-3 3 0 3-1 3 3 3-2 3 3 3-1 3 3 3-5 3 2 3 1 3 0 3-3 3 6 3-3 3 1 3-2 3 3 3-4 3 0 3 3 3 0 3-1 3 0 3-1 3-3 3 2 3 0 3 5 3-2 3 1 3-3 3-1 3 1 3 5 3-5 3 1 3 3 3-2 3 2 3 1 3 1 3-2 3 0 3 0 3-6 3-1 3 1 3-2 3-1 3 7 3-6 3 2 3-3 3 7 3-3 3-2 3 0 3 3 3 2 3 2 3 0 3 4 3 0 3-4 3-2 3 6 3-3 3-2 3 4 3 1 3-7 3 1 3 2 3 3 3-5 3 3 3-3 3 3 3-4 3-2 3 1 3-2 3 5 3 1 3-2 3 0 3-2 3-2 3-1 3 7 3-5 3 0 3 2 3-3 3 5 3-6 3 5 3-4 3 6 3 0 3 2 3-7 3 4 3-4 3 5 3-4 3 0 3 0 3-2 3 3 3-4 3 2 3-1 3 2 3 4 3 1 3-1 3-6 3 3 3-1 3 4 3 1 3-1 3-5 3 7 3-3 3-6 3 1 3 5 3 0 3-1 3-5 3 5 3-1 3-1 3-3 3 2 3-2 3 3 3-3 3 1 3 0 3 1 3-3 3-2 3 1 3 3 3 3 3-2 3-2 3 5 3-1 3 0 3-1 3 1 3 1 3 1 3-3 3 1 3 2 3-6 3 1 3-1 3 0 3 6 3-1 3 1 3-3 3 4 3 0 3 1 3-7 3 5 3 0 3-5 3 2 3-1 3-2 3-2 3 0 3 1 3 2 3-3 3 7 3-7 3 5 3-3 3 7 3-6 3 8 3 2 3 3 3 1 3-1 3 4 3 7 3 2 3 5 3 3 3 4 3 3 3 2 3 2 3 1 3 0 3 0 3 0 3 0 3 0 3 0 3 0 1 0-3 0-3 0-3 0-3 0-3 0-3 0-3 1-3 1-3 2-3 2-3 3-3 3-3 2-3 5-3 3-3 4-3 3-3 4-3 7-3 2-3-6-3 5-3-1-3 0-3 1-3-7-3 1-3-3-3 5-3 1-3-1-3 2-3-1-3 2-3 3-3-5-3 3-3 0-3 3-3-5-3 3-3-4-3 0-3 1-3-3-3-3-3 3-3 1-3-4-3 4-3-6-3 2-3-1-3 2-3-1-3 5-3-5-3 3-3-2-3 0-3-1-3 5-3-5-3 6-3 0-3 0-3 0-3 0-3 1-3-6-3 6-3-3-3-3-3 2-3 0-3 0-3-4-3 6-3 0-3-3-3 1-3-1-3-2-3 1-3 4-3-2-3-1-3 7-3-4-3-3-3 2-3 5-3-8-3 1-3-2-3 3-3-2-3 3-3-2-3 4-3 1-3-6-3 1-3 1-3 6-3-2-3 2-3 0-3 2-3-2-3-3-3 0-3-2-3 6-3-6-3 3-3 0-3 2-3-7-3 1-3 4-3 3-3-3-3-2-3 7-3 0-3-6-3 7-3-2-3-6-3 4-3 3-3-3-3 2-3 2-3-1-3-2-3 1-3-5-3 6-3 0-3-6-3 1-3 6-3-1-3-2-3 4-3-2-3-1-3-1-3 2-3 0-3-8-3 6-3-1-3-4-3-5-3 0-3 6-3 0-3 0-3-7-3 6-3-5-3 2-3 2-3 1-3-3-3 5-3-7-3 1-3-1-3 7-3-2-3-2-3 1-3-4-3 5-3-6-3 5-3 2-3 1-3-3-3-4-3 4-3-1-3 6-3-1-3-2-3-4-3 1-3 1-3-2-3 3-3 3-3-1-3 1-3 2-3-6-3-1-3 3-3 5-3-3-3-2-3 3-3-1-3 3-3-5-3 5-3-2-3 0-3-1-3-3-3 3-3-2-3 4-3-2-3-4-3 0-3 0-3 6-3-7-3 2-3 2-3-3-3 5-3-3-3 1-3-1-3-2-3 4-3-7-3 2-3 0-3-1-3-1-3 6-3 0-3-2-3 0-3 1-3-3-3 4-3-3-3 3-3 3-3-5-3 0-3 3-3 1-3 1-3-3-3 0-3 0-3 2-3-6-3 3-3-2-3 3-3 1-3-4-3 6-3-4-3 4-3 0-3-1-3 0-3-1-3-2-3-1-3-1-3 3-3-1-3 4-3-4-3 2-3-6-3 3-3-4-3 3-3-3-3 7-3-2-3 4-3-5-3 2-3-1-3-1-3 1-3-1-3 1-3 5-3-1-3-1-3-2-3-3-3 0-3 2-3 0-3 0-3 1-3 3-3-1-3-3-3-2-3 0-3 2-3-4-3 2-3-1-3 1-3 4-3-2-3-5-3 5-3-4-3-2-3 0-3 1-3 4-3-5-3 2-3 3-3-4-3 5-3-2-3 3-3 1-3 0-3-3-3-1-3 1-3-1-3 1-3 1-3-5-3 1-3-4-3 1-3 6-3-7-3 1-3 1-3 2-3 1-3-4-3 2-3 4-3-4-3 3-3-4-3-2-3 5-3-5-3 1-3 3-3-3-3 1-3 0-3 4-3-3-3-1-3 5-3-5-3-2-3 3-3 3-3-4-3-2-3 5-3-1-3-3-3 2-3 1-3 2-3 0-3 1-3 6-3-3-3-3-3 5-3-1-3-4-3 1-3 1-3-6-3 1-3 0-3 4-3-2-3-2-3-3-3-1-3 3-3 3-3-2-3 2-3-1-3-5-3 2-3 5-3-6-3 1-3 4-3 0-3-3-3 2-3-2-3-2-3 3-3 1-3 1-3-1-3 5-3 0-3-3-3 5-3 0-3-3-3 2-3-2-3 2-3 2-3-2-3 4-3-6-3 6-3-4-3 2-3-3-3-2-3 6-3-3-3 1-3-4-3 3-3-7-3-1-3 5-3 0-3-5-3 4-3-1-3 1-3 0-3-1-3-3-3 5-3-7-3 6-3 0-3-6-3 8-3-5-3 4-3-1-3-2-3 1-3 5-3 1-3-7-3 5-3-3-3-5-3 5-3-1-3-3-3-3-3 4-3-1-3 4-3-5-3 2-3-3-3 6-3-1-3-1-3 2-3-4-3 2-3 3-3-3-3 4-3-1-3 2-3 1-3-6-3 4-3 2-3-3-3-1-3 6-3-1-3-3-3 2-3-1-3 3-3-7-3 4-3-1-3 3-3-4-3 4-3 0-3-5-3 3-3 1-3-6-3 2-3 4-3-7-3 7-3-3-3 5-3-3-3 3-3 0-3 1-3 2Z" fill="#5b9af0"/>
</g>
<rect x="1566" y="67.75" width="20" height="0.6" fill="#5e9cf5"/>
<g transform="scale(1 0.1)">
<path d="M29 843l1-23 1 2 1-6 1 18 1-13 1 16 1-4 1 12 1-14 1 8 1 5 1-6 1 8 1-21 1-10 1 7 1-4 1 30 1-29 1 23 1-14 1-15 1 27 1 5 1-24 1 25 1-11 1 4 1 7 1-21 1 14 1-12 1 0 1-6 1 4 1 11 1 7 1 0 1-27 1 18 1 4 1-6 1-17 1 33 1-17 1 3 1-18 1-3 1 15 1-5 1 13 1 3 1 4 1-16 1-1 1 4 1-9 1 24 1-11 1 4 1-10 1 13 1-16 1 15 1 2 1-24 1 10 1 1 1-9 1 14 1 3 1-2 1 2 1-21 1 27 1-17 1-9 1 0 1 8 1 19 1-8 1-10 1-7 1 8 1 16 1-5 1-7 1-16 1 32 1-8 1-12 1 6 1-16 1 15 1 0 1 15 1-20 1-8 1 28 1 0 1-6 1-5 1-17 1 7 1 8 1-15 1-3 1 26 1-5 1-10 1-7 1 4 1-8 1 11 1 19 1-30 1 5 1-1 1 22 1-17 1-10 1 24 1-23 1 0 1 29 1-5 1-21 1 6 1 0 1 8 1 5 1 2 1-2 1-24 1 20 1-5 1 11 1-5 1-2 1-13 1-3 1 18 1 10 1-16 1 12 1-8 1-11 1 22 1-10 1-13 1 5 1 4 1-2 1-12 1 1 1 12 1-8 1-1 1 20 1-16 1-10 1 4 1 22 1-7 1-1 1-12 1-5 1 16 1-7 1 3 1 2 1 8 1 6 1-27 1 25 1-7 1 6 1-23 1 3 1 15 1-11 1 4 1-12 1 2 1 8 1 0 1 4 1 11 1-9 1-3 1-5 1 0 1 2 1 9 1-5 1-10 1 2 1 17 1-2 1 3 1 3 1-13 1 4 1 9 1 5 1-18 1-10 1 12 1-10 1 2 1-5 1-5 1 13 1 14 1 7 1-7 1-23 1 7 1 0 1 3 1 12 1-10 1 6 1-3 1 11 1-17 1 10 1-7 1 12 1-19 1 10 1-15 1 7 1 4 1 4 1 0 1-9 1-4 1 6 1-6 1 1 1 6 1-12 1 7 1-4 1 7 1-11 1 10 1-8 1 10 1-6 1 7 1-7 1 12 1-16 1 29 1 0 1-8 1-15 1 25 1-22 1 17 1-8 1-18 1 26 1-20 1 1 1-9 1 26 1-7 1 3 1-7 1 4 1 17 1-35 1 20 1-19 1 22 1-4 1 6 1-16 1-3 1 22 1-2 1 3 1-23 1 20 1-25 1 2 1 23 1 0 1 8 1-12 1 2 1-22 1 9 1 21 1-30 1 1 1 27 1-23 1-3 1 14 1-19 1 4 1 4 1-3 1 16 1-11 1 17 1-11 1 13 1-5 1 4 1-7 1 0 1-11 1-5 1 13 1-11 1 24 1-28 1 27 1-16 1 9 1-8 1-2 1-9 1 0 1 3 1 21 1-3 1-19 1 2 1 5 1 11 1-14 1-9 1 15 1-12 1-1 1 16 1-11 1 2 1 0 1 0 1 3 1 3 1-1 1-4 1 6 1-15 1 9 1 10 1 6 1-15 1-1 1 12 1-23 1 9 1-6 1 4 1 11 1 4 1-22 1 0 1 1 1 6 1 4 1 7 1-18 1 5 1 16 1 1 1-19 1 18 1-9 1-5 1-4 1 22 1-2 1-20 1-1 1-1 1 18 1-8 1 9 1-5 1 6 1-3 1 5 1-20 1 19 1-16 1 10 1-1 1 4 1-13 1 9 1-15 1 9 1 2 1-12 1 4 1 9 1-12 1 10 1 3 1-4 1 0 1 19 1-21 1 3 1-9 1 8 1 13 1-23 1 12 1-7 1 0 1 6 1 17 1-23 1 23 1-27 1 3 1-1 1 21 1-3 1 9 1-13 1-2 1-3 1-8 1 13 1 4 1-1 1-5 1-13 1 4 1 24 1-28 1 4 1-3 1 31 1-27 1 28 1-3 1-1 1-3 1-16 1 6 1-13 1 23 1-14 1 3 1-11 1 4 1 23 1-31 1 12 1-6 1 14 1-3 1-14 1 10 1 7 1 0 1-2 1-7 1 19 1 1 1-5 1-7 1-19 1 15 1 8 1 3 1-13 1-7 1 22 1-17 1-11 1 18 1-12 1 9 1-14 1 22 1-9 1 7 1-2 1-14 1 16 1 4 1-2 1-17 1 6 1 15 1 3 1 0 1-26 1 14 1 6 1-9 1 0 1-13 1 22 1-11 1-2 1-12 1 2 1-3 1 29 1-9 1-12 1 11 1-3 1 9 1-24 1 23 1-8 1-8 1 24 1-20 1 6 1 14 1-25 1 6 1 7 1-2 1-17 1 7 1 25 1 0 1-20 1-2 1-1 1-8 1 23 1-10 1-7 1-5 1-3 1 33 1-20 1 11 1-19 1 16 1 10 1-1 1-23 1 26 1-9 1-20 1-2 1 28 1-3 1-5 1-3 1 16 1-15 1 15 1 1 1-25 1-5 1 28 1-21 1-9 1 7 1 11 1 6 1-17 1 19 1-27 1 3 1 25 1 4 1-10 1-15 1 14 1 9 1-16 1 13 1-22 1 27 1 0 1-25 1 6 1-6 1 3 1 18 1-2 1-28 1 7 1 13 1-3 1-5 1-9 1 26 1-23 1 12 1-8 1-1 1 18 1-12 1 12 1-28 1 2 1 9 1 7 1 16 1-27 1 23 1-9 1-4 1 1 1-8 1-6 1 14 1 8 1-16 1-5 1 26 1-14 1 17 1-20 1-1 1-10 1 15 1-16 1 6 1-7 1 5 1 17 1-21 1 4 1 19 1-17 1 6 1 2 1-2 1 19 1-5 1 0 1-8 1-19 1 22 1-5 1-17 1 10 1-1 1 5 1-8 1 10 1-10 1 6 1-13 1 16 1-6 1 16 1-25 1 33 1-2 1-10 1-19 1 9 1-1 1-4 1-5 1 30 1-27 1 4 1 16 1-20 1 7 1 14 1 1 1-17 1-1 1 15 1-18 1 20 1 4 1-14 1-5 1-3 1 4 1 9 1 1 1-5 1-4 1 16 1-19 1-2 1-5 1-2 1 15 1 6 1 3 1-21 1 11 1 4 1 8 1-1 1-4 1-19 1 1 1-1 1 0 1 6 1-8 1 7 1-3 1-5 1 25 1-16 1 18 1-15 1-7 1 25 1-21 1 19 1-11 1 7 1-10 1-5 1 3 1-5 1 6 1 15 1-6 1-1 1 2 1-20 1 22 1-17 1 2 1 11 1-1 1-11 1 9 1 0 1 16 1-14 1-14 1 14 1-16 1 27 1-20 1 14 1-15 1-1 1 21 1-5 1-10 1-14 1 2 1 12 1 13 1-1 1-3 1-10 1-14 1 15 1-8 1 19 1-18 1 22 1-25 1 26 1-27 1 7 1-3 1-7 1 9 1 18 1-8 1-18 1-2 1 5 1 2 1 15 1-6 1-12 1 27 1-6 1-5 1 10 1-19 1-4 1 12 1-9 1-6 1 10 1-11 1 7 1 8 1 7 1-20 1 7 1 12 1 0 1-24 1 29 1-14 1-10 1-1 1 17 1 4 1-12 1 0 1 14 1-11 1-15 1 17 1-16 1 14 1-12 1 23 1-17 1-3 1 3 1-10 1 13 1 0 1-8 1 17 1-21 1 19 1-9 1 10 1-17 1 8 1-7 1 7 1 6 1-5 1-9 1 14 1 8 1-14 1 22 1-13 1-7 1-8 1 5 1 6 1-11 1 2 1 6 1-12 1 12 1 2 1-15 1 29 1 2 1-29 1 0 1 26 1-20 1 21 1-24 1-4 1 9 1-7 1 7 1 9 1-3 1-16 1 21 1-11 1 4 1-2 1 14 1-5 1-9 1 11 1-3 1-17 1 0 1 18 1 6 1-25 1 16 1-11 1 0 1 3 1 4 1-2 1-12 1 2 1 5 1-5 1 21 1-18 1 20 1-1 1-19 1 12 1 14 1-14 1 7 1-11 1-7 1 20 1-6 1-11 1 12 1-14 1 2 1 10 1-6 1-4 1 18 1-8 1 12 1-29 1 25 1-4 1-2 1-3 1 11 1-24 1 1 1 12 1 3 1-11 1 6 1 15 1-4 1-20 1-5 1 27 1 2 1-19 1-3 1-1 1-3 1-1 1 23 1 2 1-21 1 13 1-7 1 12 1 0 1-17 1-4 1-2 1 2 1 23 1-27 1 16 1-2 1-1 1-10 1 25 1 1 1-29 1 31 1-25 1 16 1-16 1 25 1-18 1 13 1-10 1 2 1-19 1 9 1-3 1 14 1-19 1-2 1 12 1 4 1 13 1-17 1 10 1-18 1 1 1-4 1 17 1-10 1 16 1-21 1 4 1-7 1 27 1-8 1 9 1-25 1 13 1-9 1 3 1-2 1 4 1-6 1 5 1-9 1 3 1 0 1 7 1-8 1 24 1-4 1-11 1 3 1 0 1-10 1-4 1 8 1-1 1 2 1 16 1-6 1-4 1-15 1 22 1-3 1-16 1 6 1 11 1 10 1-13 1-5 1-14 1 1 1 5 1 6 1-2 1 1 1 0 1-2 1-1 1 17 1-20 1 5 1-2 1 2 1 17 1-15 1 0 1 17 1-21 1-5 1 10 1 17 1 2 1-21 1 4 1-2 1 12 1 0 1-1 1 4 1-7 1-9 1-11 1 13 1-7 1 9 1 5 1-15 1 5 1-7 1 3 1 3 1 1 1-10 1 26 1-4 1-17 1 10 1 1 1 5 1-21 1 25 1-22 1-2 1 8 1 0 1 3 1-9 1 10 1-1 1-10 1 0 1 16 1-7 1-11 1 1 1-2 1 26 1-18 1 12 1-7 1 11 1-15 1 6 1 8 1-2 1-9 1 9 1-8 1 0 1 10 1-14 1 4 1 15 1-4 1 1 1-7 1-12 1 7 1-8 1 15 1-19 1 5 1 17 1-6 1-8 1 23 1-22 1 17 1-1 1-10 1 8 1-18 1 5 1 9 1 0 1 3 1 4 1-13 1 6 1 0 1-7 1 16 1-6 1-4 1 10 1-3 1-22 1 13 1-9 1 9 1-9 1 21 1-1 1-6 1-1 1 7 1-15 1 14 1-10 1-7 1 19 1-9 1-6 1 3 1 2 1 5 1-16 1 1 1 6 1-5 1 0 1-1 1 11 1 9 1-27 1 8 1 14 1 2 1-18 1 11 1-9 1 13 1-15 1-2 1 16 1 0 1 5 1-14 1 14 1-24 1 17 1-9 1 17 1-11 1-12 1 11 1-13 1 23 1-18 1 12 1 5 1-19 1 16 1 4 1 1 1-6 1-17 1 17 1 1 1-7 1-6 1-1 1 9 1-11 1-1 1 13 1-6 1 10 1-21 1 28 1-2 1 1 1-10 1 1 1-15 1 21 1-15 1 10 1-2 1-8 1 10 1 6 1-5 1-16 1 12 1 4 1-5 1-4 1 1 1 10 1-3 1-6 1-7 1 4 1 11 1-13 1-5 1 10 1-5 1 11 1 2 1-6 1 8 1-21 1 13 1-14 1 4 1 2 1 21 1-22 1 6 1-9 1 10 1-14 1 21 1-3 1 0 1-9 1 20 1-19 1 6 1 1 1-13 1 17 1-3 1 3 1-4 1 9 1-4 1 4 1-19 1 11 1-8 1 22 1-6 1-10 1-1 1-4 1 9 1-6 1 14 1-10 1 17 1-11 1 11 1-16 1 5 1-10 1-6 1 20 1-21 1-4 1 22 1-24 1 20 1-17 1 30 1-13 1-7 1-9 1-3 1 28 1-21 1-3 1 17 1-22 1 17 1-8 1-1 1 20 1-2 1-23 1 7 1-8 1 9 1-1 1 14 1-4 1 3 1 6 1-27 1 3 1 14 1 6 1-8 1-4 1-7 1 9 1-7 1-7 1 28 1-5 1-3 1-2 1 3 1-16 1 11 1 12 1-26 1 28 1-23 1 23 1-18 1-6 1 4 1-7 1 7 1 13 1-16 1 16 1-17 1 4 1 18 1-10 1-13 1 2 1 17 1-11 1-12 1 25 1-7 1-5 1 7 1-11 1 16 1-7 1-5 1-15 1 1 1 7 1 6 1-5 1-9 1 2 1 24 1-19 1-6 1 14 1 10 1-17 1-9 1 23 1-22 1 6 1 3 1 6 1 6 1 1 1 0 1-15 1-5 1 21 1-19 1 21 1-10 1-15 1 11 1-3 1-2 1 19 1-19 1-5 1 23 1-21 1-3 1 12 1-8 1 18 1-10 1-6 1 20 1-10 1 0 1 9 1-11 1-4 1 13 1-16 1-7 1 0 1 20 1-7 1-1 1-9 1 6 1 13 1-13 1 1 1 1 1-4 1 10 1-8 1 20 1 2 1-29 1 24 1-18 1-1 1 15 1 9 1-25 1 10 1 14 1-9 1-13 1 18 1-13 1-4 1-1 1-4 1 6 1-2 1 1 1 17 1 0 1-18 1-3 1 15 1-4 1-12 1 8 1 1 1 5 1-6 1 1 1-1 1 6 1 6 1-11 1-6 1 14 1-22 1 19 1-10 1 21 1-7 1-8 1-4 1-8 1 10 1-7 1 12 1 14 1-28 1 15 1 10 1 3 1-6 1-16 1 1 1 7 1 18 1-5 1-9 1 5 1 4 1-5 1-4 1 8 1 3 1 13 1 0 1-17 1 6 1 8 1-5 1 1 1 8 1 5 1 4 1-8 1 6 1 0 1-1 1 6 1 1 1-2 1 2 1 2 1 3 1 1 1 0 1 3 1-1 1 2 1 0 1 1 1 0 1 0 1 1 1 0 1 0 1 0 1 0 1 0 1 0 1 0 1 0 1 0 1 0 1 0 1 0 1 0 1 0 1 0 1 0 1 0 1 0 1 0 1 0 1 0-1 0-1 0-1 0-1 0-1 0-1 0-1 0-1 0-1 0-1 0-1 0-1 0-1 0-1 0-1 0-1 0-1 0-1 0-1 0-1 0-1 1-1 0-1 0-1 0-1 2-1 0-1 2-1 1-1 0-1 3-1-1-1 4-1 1-1 1-1 2-1 2-1-5-1 1-1 5-1 5-1-6-1 3-1 6-1-10-1 6-1-1-1 20-1-4-1 0-1-15-1 6-1 5-1 2-1 9-1-4-1 10-1-15-1 23-1-12-1 2-1 12-1-2-1 9-1-31-1 15-1-13-1-1-1 3-1 24-1 3-1-11-1-9-1 21-1-13-1 4-1-25-1 14-1 0-1 18-1-14-1-9-1 26-1-21-1 14-1 6-1-34-1 5-1-4-1 15-1 19-1-19-1 9-1-28-1 11-1 7-1 16-1-7-1-27-1 16-1 2-1 17-1-13-1-16-1 1-1 1-1-1-1 21-1-12-1 20-1-10-1 10-1-15-1 14-1-11-1 7-1-16-1 3-1 13-1-2-1-13-1 15-1 0-1 1-1-13-1-15-1-1-1 18-1 16-1-10-1-7-1-7-1 11-1 10-1-11-1-4-1-8-1 10-1-4-1 6-1-7-1 12-1 5-1-14-1 14-1-23-1 16-1 8-1-12-1-1-1 16-1 1-1-10-1-4-1-15-1 8-1 16-1-10-1 6-1 3-1-11-1-9-1 1-1 7-1-17-1 3-1 29-1-14-1-8-1 0-1-5-1 22-1-10-1 8-1-14-1 10-1-14-1 8-1-1-1 17-1 3-1-3-1-17-1 15-1-17-1-2-1 20-1-25-1 1-1 10-1 13-1-25-1 2-1 25-1-29-1 28-1-5-1 1-1 1-1-20-1 17-1-23-1 26-1 6-1-20-1 9-1 7-1-4-1-27-1 21-1 8-1 1-1 6-1-18-1 10-1-4-1 3-1 4-1-9-1 14-1-16-1 4-1 8-1-23-1 16-1-11-1 5-1 4-1 6-1-1-1 7-1-12-1-9-1 6-1-5-1 5-1-6-1 19-1-22-1 22-1-16-1 7-1-12-1-4-1 4-1 0-1 14-1-19-1 4-1 2-1 4-1 18-1-4-1-15-1 10-1 2-1 4-1-13-1-4-1-1-1-3-1 16-1-12-1-11-1 26-1-20-1 16-1-12-1 0-1 7-1 10-1-11-1-12-1 14-1-14-1 23-1-20-1 13-1-14-1 9-1 0-1-11-1-4-1 28-1-9-1 5-1-21-1 24-1-11-1 2-1-13-1-1-1 3-1 18-1-2-1-8-1-6-1 12-1-15-1 12-1 13-1-22-1-4-1 19-1 0-1-12-1-5-1-8-1 19-1-22-1 13-1-4-1 27-1-35-1 33-1-8-1 5-1-13-1 4-1 6-1-10-1 9-1-8-1 17-1-36-1 1-1 23-1-2-1-19-1 33-1-26-1 15-1 2-1-28-1 0-1 16-1-5-1 24-1-3-1 3-1-5-1-12-1-5-1 9-1-5-1 3-1 12-1-20-1 23-1-28-1 1-1 7-1 14-1-9-1-12-1 11-1 6-1 8-1 2-1-19-1 11-1-16-1 6-1 6-1 8-1-28-1 28-1-22-1 26-1 1-1-13-1 4-1-6-1-16-1 29-1-30-1 25-1-24-1 0-1-2-1 31-1-3-1-16-1 20-1-5-1 1-1 4-1-25-1 28-1-15-1-13-1 17-1-4-1 4-1-1-1-11-1 15-1 1-1-4-1-10-1-3-1 8-1 11-1-27-1 27-1-23-1 27-1-8-1 4-1-2-1-1-1-16-1 4-1 2-1 13-1-11-1 5-1-9-1-8-1 12-1 11-1-1-1 4-1-14-1-5-1 18-1-27-1 0-1 24-1-18-1-6-1 14-1-5-1 13-1-23-1 1-1 22-1-24-1 22-1-5-1 10-1-5-1-14-1 13-1-26-1 20-1-4-1 12-1-10-1-21-1 27-1-11-1 10-1 0-1 11-1-22-1 4-1-8-1 24-1-34-1 22-1 5-1-17-1-1-1-3-1 24-1-22-1-2-1 0-1 22-1 5-1-32-1 19-1-3-1 11-1 3-1 0-1-11-1 1-1-16-1 26-1-17-1 8-1 3-1-6-1-9-1 9-1 11-1 2-1-4-1 7-1-9-1 2-1-4-1-12-1 20-1-26-1 8-1-2-1 13-1-17-1 6-1 4-1 12-1 7-1-16-1-5-1 10-1 8-1-23-1 9-1 6-1-1-1 6-1-2-1-21-1 30-1-13-1-2-1 5-1 5-1-14-1 13-1-23-1 7-1-3-1 21-1 2-1-5-1-15-1 17-1 0-1 2-1 4-1-19-1 18-1-6-1-9-1-9-1 13-1-10-1 20-1-18-1-5-1 12-1 3-1 6-1-4-1 6-1-27-1 14-1 4-1-18-1 0-1 22-1-4-1 3-1 3-1-24-1 2-1-6-1 20-1 9-1-20-1-7-1 8-1-1-1 18-1-12-1 15-1-22-1 20-1-25-1-1-1 28-1-17-1-4-1 17-1-8-1 14-1-20-1 5-1 9-1-4-1-16-1 20-1-5-1-7-1 14-1-3-1 0-1 1-1-21-1-5-1 20-1-7-1 8-1-21-1 16-1 3-1 12-1-5-1 6-1-12-1-6-1 15-1-7-1-9-1-11-1 27-1-3-1-24-1 14-1 15-1-21-1 19-1-9-1 12-1-17-1 7-1-21-1 18-1 6-1 0-1-26-1 5-1 8-1-4-1-10-1 1-1 15-1 10-1 9-1-14-1-4-1 15-1-14-1-15-1 11-1-9-1 25-1-9-1-3-1-12-1 17-1 6-1-9-1-15-1 9-1-12-1 4-1 21-1-16-1 13-1 10-1-10-1-19-1 23-1 5-1-21-1 7-1-11-1 9-1 12-1-21-1 6-1 10-1-12-1 6-1-7-1 3-1 17-1-5-1-16-1 21-1 2-1-22-1-6-1 4-1 21-1-18-1 1-1-4-1 21-1-3-1 6-1-20-1 16-1-14-1 12-1 4-1-24-1 13-1-13-1 21-1 5-1-21-1 7-1-5-1 19-1-21-1 20-1-26-1 13-1-12-1 22-1 1-1-6-1-18-1 21-1 8-1-10-1-21-1 15-1-2-1-15-1 32-1-30-1-1-1-1-1 10-1-5-1 3-1-7-1 29-1-15-1 12-1-15-1 12-1-24-1 26-1 5-1-26-1 12-1 13-1 1-1-20-1 21-1-33-1 24-1-23-1 18-1-7-1 20-1-18-1 13-1-11-1 13-1 0-1-29-1 29-1-17-1 19-1-10-1 3-1 9-1-31-1 23-1-14-1 22-1-11-1 6-1-25-1 2-1 8-1 8-1 7-1 1-1-9-1 3-1-3-1-15-1-1-1 26-1-20-1 2-1-2-1 9-1-16-1 24-1 2-1-9-1 1-1-20-1 9-1 10-1-16-1 12-1 8-1-25-1 6-1 12-1 6-1-22-1 3-1 23-1 1-1-4-1 2-1-4-1-4-1-17-1 22-1-15-1-10-1 16-1-16-1 22-1 0-1-18-1 16-1 14-1-1-1-33-1 36-1-21-1 10-1-10-1 0-1-12-1 6-1 1-1 10-1 5-1-6-1-6-1 7-1 5-1 10-1-29-1 16-1 3-1 7-1-5-1-16-1 21-1-8-1 8-1-22-1 7-1 15-1-2-1-10-1-5-1 0-1 5-1-9-1 15-1 2-1-17-1 9-1 2-1-12-1-4-1 27-1-7-1-7-1-7-1 12-1 11-1-27-1 18-1-7-1 0-1-4-1 3-1-1-1 10-1-15-1 15-1-7-1 13-1-27-1 5-1 18-1-19-1 21-1-7-1-13-1 6-1 4-1 2-1-4-1-2-1-3-1-1-1 8-1 11-1-21-1 21-1-14-1-14-1 12-1 4-1-17-1 22-1-19-1 2-1 16-1-4-1-2-1 5-1 12-1-27-1 21-1 2-1-20-1 8-1-14-1 8-1 17-1-15-1 11-1-1-1-14-1 17-1-2-1 3-1-20-1 7-1 18-1-3-1-9-1 13-1-34-1 31-1 1-1-7-1-6-1-17-1 18-1 7-1-22-1-7-1 4-1 19-1-12-1 2-1-14-1 13-1-8-1 6-1 19-1-3-1-10-1-10-1 29-1-2-1-8-1-20-1 7-1 17-1-15-1-3-1 26-1-21-1 6-1-1-1-4-1-13-1 1-1 25-1-10-1 5-1-16-1 9-1-7-1-4-1 26-1-19-1 18-1-22-1 20-1-8-1 2-1 11-1-31-1 1-1 14-1-9-1 21-1 4-1-21-1 17-1 0-1-24-1 12-1 18-1-26-1 8-1-13-1 16-1 13-1-20-1 2-1-3-1 22-1-20-1 19-1-33-1 10-1 13-1-5-1-18-1 3-1 26-1-26-1-2-1 30-1-3-1 5-1-5-1 0-1-20-1 23-1-15-1 5-1-19-1 30-1-7-1-20-1-4-1 24-1-24-1 15-1-13-1 28-1-32-1 35-1 1-1-23-1 5-1-17-1 27-1-3-1 6-1-18-1 8-1-11-1-12-1 3-1 17-1-12-1 18-1 11-1-23-1 12-1 2-1-3-1-5-1-18-1 30-1-3-1 1-1-2-1-20-1 0-1 28-1-12-1-11-1 13-1 3-1-7-1 10-1-23-1 18-1-9-1 8-1-17-1 1-1 17-1-17-1 9-1 14-1-12-1 7-1-1-1-4-1-11-1 9-1-13-1 3-1-1-1 18-1-14-1 2-1-10-1 16-1-8-1 16-1 1-1-6-1-7-1 13-1 4-1-23-1 18-1 0-1-10-1-14-1 13-1 4-1-11-1 21-1 3-1-14-1-3-1 4-1 12-1-32-1 0-1 16-1-10-1 1-1 20-1-16-1 17-1-1-1-8-1 16-1-31-1 11-1 17-1-11-1 3-1-11-1 11-1 7-1-1-1 4-1-19-1 3-1 8-1 6-1-8-1-16-1 2-1 8-1 10-1-13-1-1-1 15-1-3-1-4-1 0-1-18-1 31-1-19-1 18-1-4-1-7-1 1-1 3-1-7-1 2-1-17-1 1-1-2-1 23-1 5-1-2-1-15-1 10-1-1-1-6-1 12-1-14-1-1-1-9-1 26-1-27-1 1-1-6-1 5-1-2-1 17-1-1-1 14-1-16-1 4-1-2-1 8-1-17-1-6-1 18-1 13-1-1-1-11-1-18-1 22-1 1-1 7-1-18-1 16-1-22-1 20-1 3-1-21-1 17-1-7-1-9-1 8-1 10-1-10-1-13-1 10-1 9-1-19-1 3-1 12-1-1-1-3-1-16-1 2-1 3-1 17-1 2-1-13-1-7-1-4-1 15-1-4-1 5-1-1-1 7-1-14-1 15-1 0-1-3-1-8-1 15-1-6-1 8-1-9-1 5-1-6-1 1-1 0-1 7-1-20-1 7-1-6-1 8-1 5-1-21-1 13-1-10-1 3-1-1-1 8-1 1-1-4-1-2-1 14-1-8-1 14-1-10-1 6-1-22-1 14-1-15-1 5-1 3-1 15-1-11-1-12-1 12-1 7-1-22-1 10-1-1-1 18-1-21-1 11-1-11-1 14-1-9-1 16-1-5-1-3-1 13-1-9-1-8-1-1-1 16-1-28-1 8-1 21-1-14-1 7-1 4-1 5-1-14-1-16-1 24-1-9-1-5-1-12-1-2-1 33-1-29-1 3-1-8-1 12-1 20-1-11-1-10-1-2-1 8-1 0-1 11-1-17-1-2-1 16-1-19-1-3-1 12-1 20-1-4-1-24-1 3-1-4-1 28-1-33-1 2-1 24-1-5-1-11-1-2-1 5-1 15-1-19-1 24-1-4-1-12-1 5-1 11-1-19-1-9-1 22-1-28-1 14-1-5-1 12-1 12-1-15-1-3-1 8-1 11-1-11-1-6-1 16-1-23-1-3-1 0-1 20-1-27-1 6-1 16-1 0-1-17-1 14-1 4-1 5-1-14-1 18-1-23-1 14-1-3-1-4-1-10-1 4-1 8-1 0-1-1-1 2-1 9-1-13-1 15-1-16-1 5-1-13-1 17-1-6-1-7-1 14-1-14-1 9-1 11-1-24-1 10-1 9-1-11-1 8-1 1-1 6-1-29-1 31-1-5-1-23-1 18-1-14-1 18-1-9-1 13-1-11-1 12-1-28-1 3-1-7-1 34-1-3-1 5-1-30-1-2-1 2-1 30-1 0-1-8-1 0-1-11-1 6-1-2-1 12-1-16-1-12-1 13-1 18-1-26-1 26-1-31-1 31-1-16-1 11-1-8-1-10-1 8-1-13-1 2-1 3-1 20-1-5-1 5-1-22-1 12-1 14-1-16-1-6-1 19-1-19-1 13-1-21-1 22-1 2-1-8-1-5-1 8-1-7-1 12-1-1-1-23-1 0-1 23-1-7-1 7-1-25-1 10-1 0-1 10-1 1-1-14-1 10-1 1-1-17-1 26-1-18-1 18-1-2-1-15-1-11-1 27-1-3-1-14-1-9-1 27-1-23-1 16-1 8-1-6-1 10-1-1-1 0-1-13-1-21-1 25-1-3-1 0-1-17-1 28-1-16-1 15-1 2-1-5-1-5-1-16-1 24-1-11-1-16-1 1-1 3-1-3-1 8-1 4-1 1-1-8-1 15-1-2-1-10-1-6-1 10-1 15-1-12-1 4-1 9-1-3-1-25-1 15-1-10-1 15-1 2-1-12-1 17-1-17-1 16-1-11-1 12-1-23-1-1-1 20-1 1-1-15-1 10-1 10-1-17-1-11-1 4-1 17-1-2-1-14-1 11-1-1-1-16-1 5-1-2-1-5-1 23-1-6-1 9Z" fill="#5a97ea" opacity="0.85"/>
<path d="M29 842l3 1 3 4 3-2 3-3 3-1 3 4 3 3 3-3 3 4 3-6 3 3 3 3 3-7 3 1 3 0 3 4 3-9 3 4 3-3 3 3 3-3 3 2 3-1 3 7 3-7 3 6 3-1 3-2 3 3 3 3 3 0 3-1 3-2 3-5 3 6 3-5 3-1 3-1 3 0 3 2 3 4 3-6 3-1 3 7 3 0 3-5 3 5 3-5 3 5 3-3 3-1 3 5 3-3 3-4 3 0 3 0 3 4 3-7 3 2 3 1 3-2 3 6 3-1 3 2 3-3 3 5 3 1 3-7 3 6 3 0 3-5 3 4 3 0 3-1 3-2 3-6 3 1 3 3 3-3 3 2 3-6 3 7 3-1 3 2 3-2 3 6 3-5 3 4 3 4 3-4 3-1 3 4 3-1 3-3 3 3 3-1 3 4 3-7 3 1 3 4 3 2 3-4 3-2 3-1 3-2 3-2 3 2 3 0 3-1 3-2 3 1 3 2 3-2 3 2 3-2 3-1 3-2 3 3 3 1 3-2 3-2 3-1 3 4 3-1 3 2 3 0 3-5 3 7 3-4 3-3 3 0 3 1 3 2 3-2 3 6 3-1 3-5 3 0 3 4 3-3 3 3 3 3 3-2 3 0 3-3 3 9 3-5 3 0 3 1 3 6 3-3 3-5 3 7 3-3 3 3 3 0 3-2 3-5 3 8 3-1 3-4 3-1 3-1 3 0 3 1 3 3 3 1 3 1 3-3 3-1 3-3 3 0 3 4 3 2 3-3 3 1 3 0 3-4 3 7 3-7 3 8 3-6 3 3 3-5 3 8 3-3 3 0 3 1 3-4 3 5 3-3 3 4 3-5 3-1 3-2 3 4 3 0 3-2 3-1 3 0 3-2 3 1 3 2 3-1 3-2 3 7 3-1 3-1 3-3 3 1 3 1 3 0 3-1 3-1 3 5 3-1 3 0 3 2 3-4 3-1 3 2 3 2 3-3 3-2 3 1 3-6 3 3 3-1 3 3 3-1 3-2 3 4 3-4 3 2 3-2 3 3 3 0 3-4 3 0 3 1 3-3 3 1 3 4 3 2 3 0 3 3 3-5 3 6 3 2 3-5 3 4 3-2 3-4 3-1 3 3 3 2 3-6 3-1 3 3 3-3 3 2 3-3 3 0 3 6 3-3 3 3 3-7 3 6 3-3 3-2 3 0 3 3 3 1 3 3 3-5 3 3 3-1 3 0 3 8 3-2 3 0 3-3 3 1 3-1 3-5 3-1 3-3 3 0 3 3 3-4 3 4 3-4 3 6 3 0 3-4 3-1 3 2 3 2 3 5 3-2 3-4 3 4 3-1 3 2 3-5 3 1 3 5 3-2 3 2 3-2 3 1 3-2 3 0 3 4 3-7 3 6 3 2 3-5 3 0 3 0 3-2 3 6 3-5 3 1 3-5 3 0 3 5 3-5 3 5 3-7 3 5 3-5 3 7 3-2 3 2 3-1 3 2 3 0 3-1 3-3 3 0 3 4 3 0 3 2 3-3 3 1 3 0 3 0 3 3 3-7 3 4 3-1 3-3 3 6 3-4 3-1 3-4 3 5 3-2 3-5 3 4 3 4 3 0 3 0 3-1 3-2 3 6 3 1 3-2 3 2 3-4 3 2 3 4 3-4 3 2 3-1 3-2 3 1 3-1 3-3 3 4 3-3 3-2 3 2 3-1 3 1 3-3 3 1 3-3 3-2 3 3 3-2 3 4 3-5 3 1 3 1 3-1 3 2 3 5 3-5 3 4 3-4 3 3 3-5 3 0 3 2 3 3 3-5 3 8 3-2 3 1 3-7 3 2 3 4 3-3 3 4 3-5 3 2 3 2 3-5 3 4 3 0 3 3 3-1 3 0 3 5 3 0 3-1 3 0 3 3 3-5 3 1 3 3 3-5 3 2 3-2 3-5 3 6 3-6 3 3 3-2 3-1 3 1 3-2 3 2 3 3 3-4 3 6 3 1 3-2 3-2 3-1 3 2 3-2 3 1 3-5 3 5 3-3 3-3 3 0 3 5 3-3 3 0 3-2 3 3 3 2 3-2 3 0 3 2 3 1 3-8 3 4 3-1 3 2 3 3 3-2 3-1 3 3 3 3 3-5 3 6 3 1 3-3 3-5 3 6 3-4 3-1 3-1 3 5 3-4 3-2 3 1 3 0 3-1 3 5 3 2 3-4 3 7 3-1 3 0 3 7 3 4 3-1 3 5 3 6 3 2 3 4 3 3 3 4 3 2 3 1 3 2 3 0 3 0 3 0 3 0 3 0 3 0 3 0 1 0-3 0-3 0-3 0-3 0-3 0-3 0-3 0-3 1-3 2-3 1-3 4-3 2-3 4-3 2-3 4-3 2-3 5-3 2-3 5-3 1-3-2-3 2-3-1-3-2-3 3-3-1-3 0-3-1-3 0-3-1-3-1-3 1-3 2-3-1-3 3-3-1-3 1-3 5-3-3-3 3-3 1-3-3-3-2-3 1-3 3-3-3-3 0-3 3-3 1-3 3-3-6-3 2-3 0-3-1-3-4-3 1-3-1-3 4-3 0-3-6-3 3-3-2-3 1-3 2-3 0-3-2-3 1-3 3-3 0-3-4-3 3-3-5-3 2-3 7-3-4-3 6-3-4-3 1-3 1-3-1-3 3-3-2-3-3-3 1-3-3-3-1-3 2-3 0-3 0-3 0-3 4-3 0-3 0-3-7-3 5-3-1-3 2-3-5-3 3-3-4-3-2-3 5-3-1-3-1-3-2-3 4-3-6-3 3-3-3-3 1-3-1-3 2-3 2-3-1-3 6-3-7-3 1-3 6-3-5-3-1-3 6-3-5-3 3-3-2-3-5-3 2-3 0-3-2-3 2-3 2-3-1-3 3-3-2-3 4-3 2-3-5-3 5-3-2-3-2-3 7-3-1-3-6-3 2-3-5-3 2-3-2-3-4-3 0-3 5-3 0-3-6-3 6-3-1-3 2-3 1-3-6-3 5-3 1-3-3-3-2-3 3-3 1-3-2-3 5-3-1-3 0-3 5-3-2-3 3-3-7-3 7-3-2-3 1-3-5-3 2-3-2-3 6-3-6-3-1-3 7-3-5-3 2-3 0-3-1-3-3-3 3-3 0-3-3-3 4-3-2-3 0-3-4-3 4-3-3-3-3-3 5-3-3-3 0-3-2-3 4-3-1-3 1-3 0-3 1-3-3-3 2-3-4-3 1-3-1-3 0-3 1-3 3-3 1-3-4-3 1-3 1-3 2-3-1-3 1-3-5-3 4-3 0-3-2-3 0-3 7-3-1-3 2-3-4-3 6-3-1-3-6-3 1-3 4-3 0-3-3-3 2-3-5-3 3-3 1-3-2-3-2-3 3-3-2-3-3-3 4-3-4-3 1-3 2-3-1-3 3-3-3-3-4-3 6-3-3-3 3-3-4-3 1-3-1-3 3-3-2-3-2-3 2-3 2-3-3-3 2-3-1-3 1-3-6-3 0-3 4-3 1-3-2-3 5-3-2-3 2-3-4-3 7-3 1-3-2-3-1-3-2-3-2-3-1-3 2-3-1-3-2-3 6-3-4-3 2-3-2-3 0-3-2-3-2-3 0-3 5-3-7-3 4-3 2-3-5-3-3-3 8-3-7-3 5-3-2-3 0-3-2-3 4-3 3-3-1-3 1-3-1-3-1-3-3-3 0-3-1-3-1-3 0-3 4-3-1-3 3-3-2-3 2-3 0-3 1-3-5-3 9-3-5-3 3-3-5-3 4-3 1-3-3-3 3-3-7-3 5-3-3-3 4-3-6-3 0-3 1-3 1-3 0-3-4-3 6-3 0-3-4-3-3-3 4-3-2-3 4-3 0-3-2-3 2-3 5-3-6-3 1-3 2-3 1-3 1-3 0-3 5-3-1-3-7-3 0-3-1-3-3-3 6-3-5-3 4-3-6-3 1-3 1-3 1-3 3-3 4-3-3-3-2-3 1-3 1-3 0-3-1-3 3-3 1-3 0-3-1-3-2-3-1-3-5-3 1-3-1-3 0-3 5-3 0-3-2-3 4-3-4-3 1-3 2-3 1-3-3-3 2-3 2-3-4-3 6-3-6-3 7-3 0-3-5-3 1-3 3-3 0-3-1-3-2-3-6-3 1-3 2-3-2-3-4-3 1-3 2-3 2-3 3-3-2-3-2-3 4-3-2-3 1-3 4-3-6-3 2-3 3-3-4-3 2-3 1-3-3-3 0-3-6-3 0-3 4-3-5-3 0-3 1-3 5-3-3-3 5-3-5-3 5-3 1-3-3-3 4-3 2-3-1-3 0-3-4-3 6-3-1-3-2-3-1-3 5-3-3-3-3-3 0-3 3-3-6-3 3-3-1-3-2-3-1-3 0-3-1-3 1-3 3-3-1-3 4-3-2-3 4-3 0-3 2-3-3-3-2-3 1-3 2-3-1-3 1-3 0-3-4-3 1-3-1-3-2-3 3-3-2-3 2-3 0-3 0-3-6-3 3-3 4-3-4-3-2-3 0-3 2-3 5-3-1-3-1-3-1-3 3-3-3-3 5-3-7-3 6-3-4-3 4-3-8-3 8-3-5-3 4-3-2-3 1-3-6Z" fill="#5b9af0"/>
</g>
<rect x="1566" y="88.2" width="20" height="0.6" fill="#5e9cf5"/>
</svg></div>
</div>
<div class="a" style="left:28px;top:77px;width:1558px;height:2px;background:#6e6e6e"></div>
<div class="a" style="left:27px;top:60px;width:2px;height:37px;background:repeating-linear-gradient(#d4cc46 0 2px,transparent 2px 3.7px)"></div>
<!-- left strips -->
<div class="a" style="left:0;top:119px;width:22px;height:322px;background:#2f3740"></div>
<div class="a" style="left:0;top:445px;width:22px;height:321px;background:#2f3740"></div>
<!-- waveform bg -->
<div class="a" style="left:29px;top:119px;width:1559px;height:647px;background:#3e3e3e"></div>
<svg class="a" style="left:0;top:0" width="1670" height="934">
<defs>
<linearGradient id="gL" gradientUnits="userSpaceOnUse" x1="0" y1="120" x2="0" y2="440"><stop offset="0" stop-color="#62a2fd"/><stop offset="0.5" stop-color="#61a0fb"/><stop offset="0.7" stop-color="#5b96e7"/><stop offset="1" stop-color="#5790dc"/></linearGradient>
<linearGradient id="gR" gradientUnits="userSpaceOnUse" x1="0" y1="444" x2="0" y2="764"><stop offset="0" stop-color="#62a2fd"/><stop offset="0.5" stop-color="#61a0fb"/><stop offset="0.7" stop-color="#5b96e7"/><stop offset="1" stop-color="#5790dc"/></linearGradient>
</defs>
<g id="wgL">
<path d="M29 247 30 247 31 247 32 247 33 247 34 247 35 247 36 247 37 247 38 247 39 247 40 246 41 246 42 246 43 246 44 246 45 246 46 246 47 246 48 246 49 246 50 246 51 246 52 246 53 245 54 245 55 245 56 245 57 245 58 245 59 245 60 245 61 245 62 245 63 245 64 245 65 245 66 245 67 245 68 245 69 245 70 245 71 245 72 245 73 245 74 245 75 245 76 245 77 245 78 245 79 245 80 245 81 245 82 245 83 245 84 245 85 246 86 246 87 246 88 246 89 246 90 247 91 247 92 247 93 247 94 248 95 248 96 248 97 248 98 248 99 249 100 249 101 249 102 249 103 249 104 249 105 249 106 249 107 249 108 249 109 249 110 249 111 249 112 249 113 249 114 249 115 249 116 249 117 249 118 250 119 250 120 250 121 249 122 248 123 248 124 247 125 247 126 246 127 245 128 245 129 244 130 243 131 243 132 242 133 241 134 241 135 240 136 239 137 238 138 237 139 237 140 236 141 235 142 234 143 233 144 232 145 232 146 231 147 230 148 229 149 228 150 228 151 227 152 226 153 226 154 225 155 224 156 224 157 223 158 222 159 222 160 221 161 221 162 221 163 221 164 221 165 221 166 221 167 221 168 221 169 221 170 221 171 221 172 220 173 220 174 220 175 220 176 220 177 220 178 220 179 220 180 220 181 220 182 219 183 219 184 219 185 219 186 218 187 218 188 218 189 217 190 217 191 217 192 216 193 216 194 216 195 215 196 215 197 215 198 214 199 214 200 214 201 214 202 213 203 213 204 213 205 213 206 213 207 213 208 213 209 213 210 213 211 213 212 213 213 213 214 212 215 212 216 212 217 212 218 212 219 212 220 212 221 212 222 212 223 212 224 212 225 212 226 212 227 212 228 212 229 212 230 211 231 211 232 211 233 211 234 211 235 211 236 211 237 211 238 211 239 211 240 211 241 211 242 211 243 211 244 211 245 210 246 210 247 210 248 210 249 210 250 210 251 210 252 210 253 210 254 210 255 210 256 210 257 210 258 209 259 209 260 209 261 209 262 209 263 209 264 209 265 209 266 209 267 209 268 209 269 209 270 208 271 208 272 208 273 208 274 208 275 208 276 208 277 208 278 208 279 208 280 208 281 208 282 208 283 207 284 207 285 207 286 207 287 207 288 207 289 207 290 207 291 207 292 207 293 207 294 207 295 207 296 207 297 207 298 207 299 207 300 207 301 207 302 207 303 207 304 207 305 207 306 207 307 207 308 207 309 207 310 207 311 207 312 208 313 208 314 208 315 208 316 209 317 209 318 209 319 209 320 210 321 210 322 210 323 210 324 210 325 211 326 211 327 211 328 211 329 211 330 211 331 211 332 211 333 211 334 211 335 210 336 210 337 210 338 210 339 210 340 210 341 210 342 210 343 209 344 209 345 209 346 209 347 209 348 209 349 209 350 209 351 209 352 209 353 208 354 208 355 208 356 209 357 209 358 209 359 209 360 209 361 209 362 209 363 209 364 209 365 209 366 210 367 210 368 210 369 210 370 210 371 210 372 210 373 210 374 210 375 211 376 211 377 211 378 211 379 211 380 211 381 211 382 210 383 210 384 210 385 210 386 210 387 209 388 209 389 209 390 208 391 208 392 208 393 207 394 207 395 207 396 206 397 206 398 206 399 205 400 205 401 205 402 205 403 205 404 205 405 205 406 205 407 205 408 205 409 205 410 206 411 206 412 206 413 207 414 207 415 208 416 208 417 208 418 209 419 209 420 210 421 210 422 211 423 212 424 213 425 214 426 215 427 215 428 216 429 217 430 217 431 218 432 218 433 218 434 219 435 219 436 219 437 220 438 220 439 220 440 220 441 220 442 221 443 221 444 221 445 221 446 221 447 221 448 220 449 220 450 220 451 220 452 219 453 219 454 219 455 219 456 219 457 219 458 220 459 220 460 220 461 220 462 221 463 221 464 221 465 222 466 222 467 222 468 223 469 223 470 223 471 224 472 224 473 224 474 224 475 224 476 225 477 225 478 225 479 225 480 225 481 225 482 225 483 224 484 224 485 224 486 224 487 223 488 223 489 223 490 223 491 222 492 222 493 222 494 221 495 221 496 221 497 221 498 220 499 220 500 220 501 220 502 220 503 220 504 219 505 219 506 219 507 220 508 220 509 220 510 220 511 220 512 220 513 220 514 220 515 220 516 221 517 221 518 221 519 221 520 221 521 221 522 221 523 222 524 222 525 222 526 222 527 222 528 222 529 222 530 222 531 222 532 222 533 222 534 222 535 222 536 222 537 222 538 222 539 221 540 221 541 221 542 221 543 221 544 221 545 221 546 221 547 221 548 221 549 221 550 221 551 221 552 221 553 221 554 221 555 221 556 221 557 221 558 221 559 220 560 220 561 220 562 220 563 220 564 219 565 219 566 219 567 219 568 219 569 218 570 218 571 218 572 218 573 218 574 217 575 217 576 217 577 217 578 217 579 217 580 217 581 217 582 217 583 217 584 218 585 218 586 218 587 218 588 219 589 219 590 219 591 220 592 220 593 221 594 221 595 221 596 222 597 222 598 222 599 222 600 223 601 223 602 223 603 223 604 223 605 223 606 223 607 223 608 223 609 223 610 223 611 223 612 223 613 223 614 223 615 223 616 223 617 223 618 223 619 223 620 223 621 222 622 222 623 222 624 222 625 222 626 222 627 222 628 222 629 222 630 222 631 222 632 222 633 222 634 221 635 221 636 221 637 220 638 220 639 220 640 219 641 219 642 218 643 218 644 218 645 217 646 217 647 216 648 216 649 216 650 216 651 215 652 215 653 215 654 215 655 215 656 215 657 215 658 215 659 215 660 215 661 215 662 216 663 216 664 216 665 216 666 216 667 216 668 217 669 217 670 217 671 217 672 217 673 217 674 218 675 218 676 218 677 218 678 218 679 218 680 218 681 218 682 218 683 218 684 218 685 218 686 218 687 218 688 219 689 219 690 219 691 219 692 219 693 220 694 220 695 220 696 220 697 220 698 220 699 220 700 221 701 221 702 221 703 221 704 221 705 221 706 221 707 220 708 220 709 220 710 220 711 219 712 219 713 218 714 218 715 218 716 217 717 217 718 216 719 216 720 215 721 215 722 215 723 214 724 214 725 214 726 213 727 213 728 213 729 213 730 213 731 213 732 213 733 213 734 213 735 213 736 213 737 213 738 213 739 213 740 213 741 213 742 213 743 213 744 213 745 213 746 213 747 213 748 213 749 213 750 213 751 213 752 213 753 213 754 213 755 213 756 213 757 213 758 213 759 214 760 214 761 214 762 214 763 215 764 215 765 215 766 216 767 216 768 217 769 217 770 217 771 218 772 218 773 218 774 219 775 219 776 219 777 219 778 219 779 219 780 219 781 219 782 219 783 219 784 219 785 219 786 219 787 218 788 218 789 218 790 218 791 218 792 218 793 217 794 217 795 217 796 217 797 217 798 217 799 217 800 216 801 216 802 216 803 216 804 216 805 216 806 216 807 216 808 216 809 216 810 216 811 217 812 217 813 217 814 217 815 217 816 217 817 217 818 217 819 217 820 218 821 218 822 218 823 218 824 218 825 218 826 218 827 218 828 218 829 218 830 218 831 218 832 218 833 218 834 218 835 218 836 218 837 218 838 217 839 217 840 217 841 217 842 217 843 217 844 217 845 217 846 217 847 217 848 217 849 216 850 216 851 216 852 216 853 216 854 216 855 216 856 216 857 216 858 216 859 216 860 216 861 216 862 215 863 215 864 215 865 215 866 215 867 215 868 214 869 214 870 214 871 214 872 214 873 214 874 214 875 214 876 213 877 213 878 213 879 213 880 213 881 213 882 213 883 213 884 214 885 214 886 214 887 214 888 214 889 214 890 215 891 215 892 215 893 215 894 215 895 216 896 216 897 216 898 216 899 216 900 216 901 216 902 216 903 216 904 216 905 216 906 216 907 216 908 216 909 216 910 216 911 216 912 215 913 215 914 215 915 215 916 214 917 214 918 214 919 213 920 213 921 213 922 213 923 213 924 212 925 212 926 212 927 212 928 212 929 212 930 212 931 212 932 212 933 212 934 212 935 212 936 213 937 213 938 213 939 213 940 214 941 214 942 214 943 215 944 215 945 215 946 215 947 216 948 216 949 216 950 216 951 216 952 216 953 216 954 216 955 216 956 216 957 216 958 216 959 216 960 216 961 216 962 216 963 216 964 216 965 216 966 216 967 216 968 216 969 216 970 216 971 215 972 215 973 215 974 215 975 215 976 215 977 215 978 215 979 215 980 215 981 215 982 215 983 215 984 214 985 214 986 214 987 214 988 213 989 213 990 213 991 212 992 212 993 212 994 211 995 211 996 211 997 211 998 210 999 210 1000 210 1001 210 1002 210 1003 210 1004 209 1005 209 1006 209 1007 209 1008 210 1009 210 1010 210 1011 210 1012 210 1013 210 1014 210 1015 210 1016 211 1017 211 1018 211 1019 211 1020 211 1021 211 1022 211 1023 212 1024 212 1025 212 1026 212 1027 212 1028 212 1029 212 1030 212 1031 212 1032 212 1033 212 1034 212 1035 212 1036 212 1037 212 1038 211 1039 211 1040 211 1041 211 1042 211 1043 211 1044 211 1045 211 1046 211 1047 211 1048 211 1049 211 1050 211 1051 211 1052 211 1053 211 1054 211 1055 211 1056 211 1057 211 1058 210 1059 210 1060 210 1061 210 1062 210 1063 210 1064 210 1065 210 1066 210 1067 209 1068 209 1069 209 1070 209 1071 209 1072 209 1073 209 1074 209 1075 209 1076 209 1077 208 1078 208 1079 208 1080 208 1081 208 1082 208 1083 208 1084 208 1085 208 1086 208 1087 208 1088 208 1089 208 1090 208 1091 208 1092 208 1093 208 1094 208 1095 208 1096 208 1097 208 1098 208 1099 208 1100 208 1101 208 1102 208 1103 208 1104 208 1105 208 1106 208 1107 208 1108 208 1109 208 1110 208 1111 208 1112 208 1113 208 1114 208 1115 208 1116 208 1117 208 1118 208 1119 208 1120 208 1121 208 1122 208 1123 208 1124 208 1125 208 1126 208 1127 208 1128 208 1129 208 1130 208 1131 208 1132 208 1133 208 1134 208 1135 208 1136 208 1137 208 1138 208 1139 209 1140 209 1141 209 1142 209 1143 209 1144 209 1145 209 1146 209 1147 210 1148 210 1149 210 1150 210 1151 210 1152 210 1153 210 1154 210 1155 210 1156 210 1157 209 1158 209 1159 209 1160 209 1161 208 1162 208 1163 208 1164 207 1165 207 1166 207 1167 206 1168 206 1169 206 1170 205 1171 205 1172 204 1173 204 1174 204 1175 204 1176 203 1177 203 1178 203 1179 203 1180 203 1181 203 1182 203 1183 203 1184 203 1185 203 1186 202 1187 202 1188 202 1189 202 1190 202 1191 202 1192 202 1193 201 1194 201 1195 201 1196 201 1197 201 1198 201 1199 201 1200 200 1201 200 1202 200 1203 200 1204 200 1205 200 1206 200 1207 200 1208 200 1209 200 1210 200 1211 200 1212 200 1213 200 1214 200 1215 200 1216 200 1217 200 1218 200 1219 200 1220 200 1221 200 1222 200 1223 200 1224 200 1225 200 1226 200 1227 200 1228 200 1229 200 1230 200 1231 200 1232 200 1233 200 1234 200 1235 200 1236 200 1237 200 1238 200 1239 200 1240 200 1241 201 1242 201 1243 201 1244 201 1245 201 1246 201 1247 201 1248 201 1249 202 1250 202 1251 202 1252 202 1253 202 1254 202 1255 202 1256 202 1257 202 1258 202 1259 202 1260 202 1261 202 1262 202 1263 202 1264 202 1265 203 1266 203 1267 203 1268 203 1269 203 1270 203 1271 203 1272 203 1273 203 1274 204 1275 204 1276 204 1277 204 1278 204 1279 204 1280 204 1281 204 1282 204 1283 204 1284 204 1285 204 1286 204 1287 204 1288 204 1289 204 1290 203 1291 203 1292 203 1293 203 1294 203 1295 203 1296 203 1297 203 1298 203 1299 203 1300 203 1301 203 1302 203 1303 203 1304 203 1305 203 1306 203 1307 203 1308 203 1309 203 1310 203 1311 203 1312 204 1313 205 1314 206 1315 206 1316 207 1317 208 1318 209 1319 209 1320 210 1321 211 1322 212 1323 212 1324 213 1325 214 1326 215 1327 215 1328 216 1329 217 1330 218 1331 219 1332 220 1333 221 1334 222 1335 222 1336 223 1337 223 1338 223 1339 223 1340 223 1341 223 1342 223 1343 223 1344 223 1345 223 1346 223 1347 223 1348 223 1349 223 1350 223 1351 223 1352 223 1353 223 1354 223 1355 223 1356 223 1357 223 1358 223 1359 223 1360 223 1361 223 1362 224 1363 224 1364 224 1365 224 1366 225 1367 225 1368 225 1369 226 1370 226 1371 226 1372 226 1373 226 1374 227 1375 227 1376 227 1377 227 1378 227 1379 227 1380 227 1381 227 1382 227 1383 227 1384 227 1385 227 1386 227 1387 227 1388 227 1389 227 1390 227 1391 227 1392 227 1393 227 1394 226 1395 226 1396 226 1397 226 1398 226 1399 226 1400 226 1401 226 1402 226 1403 226 1404 226 1405 226 1406 226 1407 226 1408 226 1409 226 1410 226 1411 226 1412 226 1413 226 1414 226 1415 226 1416 226 1417 226 1418 226 1419 225 1420 225 1421 225 1422 225 1423 225 1424 225 1425 225 1426 225 1427 225 1428 225 1429 225 1430 225 1431 225 1432 225 1433 225 1434 225 1435 225 1436 225 1437 225 1438 225 1439 225 1440 225 1441 225 1442 224 1443 224 1444 224 1445 224 1446 224 1447 224 1448 224 1449 224 1450 224 1451 224 1452 224 1453 224 1454 224 1455 224 1456 224 1457 224 1458 224 1459 224 1460 224 1461 223 1462 223 1463 223 1464 223 1465 223 1466 223 1467 222 1468 222 1469 222 1470 222 1471 222 1472 222 1473 221 1474 221 1475 221 1476 221 1477 221 1478 221 1479 221 1480 221 1481 221 1482 221 1483 221 1484 221 1485 221 1486 221 1487 221 1488 221 1489 221 1490 222 1491 222 1492 222 1493 222 1494 222 1495 222 1496 222 1497 222 1498 222 1499 222 1500 223 1501 223 1502 223 1503 223 1504 223 1505 223 1506 223 1507 223 1508 223 1509 223 1510 223 1511 223 1512 223 1513 223 1514 224 1515 224 1516 224 1517 224 1518 222 1519 220 1520 218 1521 216 1522 214 1523 212 1524 211 1525 209 1526 208 1527 207 1528 206 1529 206 1530 205 1531 205 1532 205 1533 206 1534 206 1535 209 1536 212 1537 214 1538 217 1539 220 1540 223 1541 226 1542 229 1543 232 1544 235 1545 238 1546 241 1547 244 1548 247 1549 250 1550 253 1551 255 1552 258 1553 260 1554 263 1555 265 1556 267 1557 269 1558 271 1559 273 1560 274 1561 275 1562 277 1563 278 1564 279 1565 279 1566 280 1567 280 1568 280 1569 280 1570 280 1571 280 1572 280 1573 280 1574 280 1575 280 1576 280 1577 280 1578 280 1579 280 1580 280 1581 280 1582 280 1583 280 1584 280 1585 280 1586 280 1587 280 1586 280 1585 280 1584 280 1583 280 1582 280 1581 280 1580 280 1579 280 1578 280 1577 280 1576 280 1575 280 1574 280 1573 280 1572 280 1571 280 1570 280 1569 280 1568 280 1567 280 1566 281 1565 282 1564 282 1563 283 1562 285 1561 286 1560 288 1559 289 1558 291 1557 293 1556 295 1555 298 1554 300 1553 302 1552 305 1551 308 1550 311 1549 313 1548 316 1547 319 1546 322 1545 326 1544 329 1543 332 1542 335 1541 338 1540 341 1539 344 1538 347 1537 350 1536 353 1535 355 1534 357 1533 358 1532 359 1531 359 1530 360 1529 360 1528 360 1527 360 1526 360 1525 359 1524 359 1523 358 1522 357 1521 355 1520 354 1519 352 1518 350 1517 350 1516 350 1515 350 1514 350 1513 350 1512 350 1511 350 1510 349 1509 349 1508 349 1507 349 1506 349 1505 349 1504 349 1503 349 1502 349 1501 349 1500 349 1499 349 1498 348 1497 348 1496 348 1495 348 1494 347 1493 347 1492 347 1491 346 1490 346 1489 346 1488 346 1487 345 1486 345 1485 345 1484 345 1483 345 1482 345 1481 345 1480 345 1479 345 1478 345 1477 345 1476 345 1475 345 1474 345 1473 345 1472 345 1471 345 1470 345 1469 346 1468 346 1467 346 1466 346 1465 346 1464 346 1463 346 1462 346 1461 347 1460 347 1459 347 1458 347 1457 347 1456 347 1455 347 1454 347 1453 347 1452 347 1451 347 1450 347 1449 347 1448 347 1447 347 1446 347 1445 346 1444 346 1443 346 1442 346 1441 346 1440 346 1439 346 1438 346 1437 346 1436 346 1435 346 1434 346 1433 346 1432 346 1431 346 1430 346 1429 346 1428 346 1427 346 1426 346 1425 346 1424 346 1423 346 1422 346 1421 346 1420 346 1419 346 1418 346 1417 346 1416 346 1415 346 1414 346 1413 346 1412 346 1411 346 1410 346 1409 346 1408 346 1407 346 1406 346 1405 346 1404 346 1403 346 1402 346 1401 346 1400 346 1399 346 1398 346 1397 346 1396 346 1395 346 1394 346 1393 346 1392 346 1391 346 1390 346 1389 346 1388 346 1387 346 1386 346 1385 346 1384 346 1383 346 1382 346 1381 346 1380 346 1379 346 1378 346 1377 346 1376 346 1375 346 1374 346 1373 346 1372 346 1371 346 1370 347 1369 347 1368 347 1367 347 1366 347 1365 347 1364 347 1363 347 1362 348 1361 348 1360 348 1359 348 1358 348 1357 348 1356 348 1355 348 1354 348 1353 348 1352 348 1351 348 1350 348 1349 348 1348 347 1347 347 1346 347 1345 347 1344 347 1343 347 1342 346 1341 346 1340 346 1339 346 1338 346 1337 346 1336 345 1335 346 1334 346 1333 347 1332 347 1331 347 1330 348 1329 348 1328 349 1327 349 1326 350 1325 350 1324 351 1323 351 1322 352 1321 353 1320 353 1319 354 1318 354 1317 355 1316 355 1315 356 1314 357 1313 357 1312 358 1311 358 1310 359 1309 359 1308 360 1307 360 1306 361 1305 361 1304 362 1303 362 1302 363 1301 363 1300 363 1299 363 1298 363 1297 364 1296 364 1295 364 1294 364 1293 364 1292 364 1291 364 1290 364 1289 364 1288 364 1287 364 1286 364 1285 365 1284 365 1283 365 1282 365 1281 365 1280 365 1279 365 1278 365 1277 365 1276 365 1275 365 1274 364 1273 364 1272 364 1271 364 1270 364 1269 364 1268 364 1267 364 1266 364 1265 364 1264 364 1263 364 1262 364 1261 364 1260 364 1259 363 1258 363 1257 363 1256 363 1255 363 1254 363 1253 363 1252 363 1251 363 1250 363 1249 363 1248 363 1247 363 1246 363 1245 363 1244 363 1243 363 1242 362 1241 362 1240 362 1239 362 1238 362 1237 362 1236 362 1235 362 1234 362 1233 362 1232 362 1231 362 1230 362 1229 362 1228 362 1227 362 1226 362 1225 362 1224 362 1223 362 1222 362 1221 362 1220 362 1219 362 1218 362 1217 363 1216 363 1215 363 1214 363 1213 363 1212 363 1211 363 1210 363 1209 363 1208 363 1207 364 1206 364 1205 364 1204 364 1203 363 1202 363 1201 363 1200 363 1199 363 1198 363 1197 363 1196 363 1195 363 1194 362 1193 362 1192 362 1191 362 1190 362 1189 362 1188 361 1187 361 1186 361 1185 361 1184 361 1183 361 1182 361 1181 361 1180 361 1179 361 1178 361 1177 361 1176 361 1175 361 1174 361 1173 361 1172 361 1171 361 1170 361 1169 361 1168 361 1167 361 1166 361 1165 361 1164 361 1163 361 1162 361 1161 360 1160 360 1159 360 1158 360 1157 360 1156 360 1155 360 1154 360 1153 360 1152 360 1151 361 1150 361 1149 361 1148 361 1147 361 1146 361 1145 361 1144 361 1143 361 1142 361 1141 362 1140 362 1139 362 1138 362 1137 362 1136 362 1135 362 1134 362 1133 362 1132 362 1131 362 1130 362 1129 362 1128 362 1127 362 1126 362 1125 363 1124 363 1123 363 1122 363 1121 363 1120 363 1119 363 1118 363 1117 363 1116 363 1115 364 1114 364 1113 364 1112 364 1111 364 1110 364 1109 364 1108 364 1107 364 1106 364 1105 364 1104 364 1103 364 1102 364 1101 364 1100 364 1099 363 1098 363 1097 363 1096 363 1095 362 1094 362 1093 362 1092 362 1091 361 1090 361 1089 361 1088 361 1087 360 1086 360 1085 360 1084 360 1083 360 1082 360 1081 360 1080 360 1079 360 1078 360 1077 360 1076 360 1075 360 1074 360 1073 360 1072 361 1071 361 1070 361 1069 362 1068 362 1067 362 1066 362 1065 363 1064 363 1063 363 1062 363 1061 364 1060 364 1059 364 1058 364 1057 364 1056 364 1055 364 1054 364 1053 364 1052 364 1051 364 1050 364 1049 364 1048 364 1047 364 1046 364 1045 364 1044 364 1043 364 1042 363 1041 363 1040 363 1039 363 1038 363 1037 363 1036 363 1035 363 1034 363 1033 363 1032 363 1031 363 1030 363 1029 363 1028 363 1027 363 1026 363 1025 363 1024 363 1023 363 1022 363 1021 363 1020 363 1019 363 1018 363 1017 363 1016 363 1015 363 1014 363 1013 363 1012 363 1011 363 1010 363 1009 363 1008 364 1007 364 1006 364 1005 364 1004 364 1003 364 1002 364 1001 364 1000 364 999 364 998 364 997 364 996 364 995 364 994 364 993 364 992 364 991 364 990 365 989 365 988 365 987 365 986 365 985 365 984 365 983 365 982 365 981 365 980 365 979 365 978 365 977 365 976 365 975 365 974 365 973 365 972 364 971 364 970 364 969 364 968 364 967 364 966 364 965 364 964 364 963 363 962 363 961 363 960 363 959 363 958 363 957 363 956 363 955 363 954 363 953 363 952 363 951 363 950 363 949 363 948 363 947 363 946 363 945 363 944 363 943 363 942 362 941 362 940 362 939 362 938 362 937 362 936 362 935 362 934 362 933 362 932 362 931 362 930 362 929 362 928 362 927 362 926 362 925 361 924 361 923 361 922 361 921 360 920 360 919 360 918 359 917 359 916 358 915 358 914 358 913 357 912 357 911 357 910 357 909 356 908 356 907 356 906 356 905 356 904 356 903 356 902 356 901 356 900 356 899 356 898 356 897 356 896 356 895 356 894 356 893 356 892 356 891 356 890 356 889 356 888 356 887 356 886 357 885 357 884 357 883 357 882 357 881 357 880 357 879 357 878 357 877 357 876 357 875 357 874 357 873 357 872 357 871 357 870 357 869 357 868 357 867 357 866 357 865 357 864 357 863 357 862 357 861 357 860 357 859 357 858 357 857 357 856 357 855 357 854 357 853 357 852 357 851 357 850 356 849 356 848 356 847 356 846 356 845 356 844 356 843 356 842 356 841 356 840 356 839 356 838 356 837 356 836 356 835 356 834 356 833 356 832 355 831 355 830 355 829 355 828 355 827 355 826 355 825 355 824 355 823 355 822 355 821 355 820 355 819 355 818 355 817 355 816 355 815 355 814 355 813 355 812 355 811 355 810 355 809 355 808 355 807 355 806 355 805 355 804 355 803 355 802 355 801 355 800 355 799 355 798 355 797 355 796 355 795 355 794 355 793 355 792 355 791 355 790 355 789 355 788 355 787 355 786 355 785 355 784 355 783 355 782 355 781 355 780 355 779 355 778 355 777 355 776 355 775 355 774 355 773 355 772 356 771 356 770 356 769 356 768 356 767 356 766 356 765 356 764 356 763 356 762 356 761 356 760 356 759 356 758 356 757 356 756 356 755 356 754 356 753 356 752 356 751 356 750 356 749 356 748 356 747 355 746 355 745 355 744 355 743 355 742 355 741 354 740 354 739 354 738 354 737 354 736 354 735 354 734 353 733 353 732 353 731 353 730 353 729 353 728 353 727 353 726 353 725 353 724 353 723 354 722 354 721 354 720 354 719 354 718 354 717 354 716 354 715 355 714 355 713 355 712 355 711 355 710 355 709 355 708 355 707 355 706 355 705 355 704 355 703 355 702 355 701 355 700 355 699 354 698 354 697 354 696 354 695 353 694 353 693 353 692 352 691 352 690 352 689 351 688 351 687 351 686 351 685 350 684 350 683 350 682 350 681 350 680 350 679 350 678 350 677 350 676 350 675 350 674 350 673 350 672 351 671 351 670 351 669 351 668 351 667 352 666 352 665 352 664 352 663 353 662 353 661 353 660 353 659 353 658 353 657 353 656 353 655 353 654 353 653 353 652 353 651 353 650 353 649 353 648 353 647 353 646 353 645 353 644 353 643 354 642 354 641 354 640 354 639 354 638 354 637 354 636 354 635 354 634 354 633 354 632 354 631 354 630 354 629 354 628 354 627 354 626 354 625 353 624 353 623 353 622 353 621 353 620 353 619 353 618 353 617 352 616 352 615 352 614 352 613 352 612 352 611 352 610 352 609 352 608 352 607 351 606 351 605 351 604 351 603 351 602 351 601 351 600 351 599 351 598 351 597 351 596 351 595 351 594 351 593 351 592 351 591 351 590 351 589 351 588 351 587 351 586 351 585 351 584 351 583 351 582 351 581 351 580 351 579 351 578 351 577 351 576 351 575 351 574 351 573 351 572 351 571 351 570 351 569 351 568 351 567 351 566 351 565 351 564 351 563 351 562 351 561 350 560 350 559 350 558 350 557 350 556 350 555 350 554 350 553 350 552 350 551 350 550 350 549 350 548 350 547 350 546 350 545 350 544 350 543 350 542 350 541 350 540 350 539 350 538 350 537 350 536 350 535 350 534 350 533 350 532 350 531 350 530 350 529 350 528 350 527 350 526 350 525 350 524 350 523 350 522 350 521 350 520 350 519 350 518 350 517 350 516 350 515 350 514 350 513 350 512 350 511 350 510 350 509 350 508 350 507 350 506 350 505 350 504 350 503 350 502 349 501 349 500 349 499 349 498 348 497 348 496 348 495 347 494 347 493 347 492 346 491 346 490 346 489 345 488 345 487 345 486 344 485 344 484 344 483 344 482 344 481 343 480 343 479 343 478 343 477 343 476 343 475 343 474 343 473 343 472 343 471 343 470 344 469 344 468 344 467 345 466 345 465 345 464 345 463 346 462 346 461 346 460 346 459 347 458 347 457 347 456 347 455 347 454 348 453 348 452 348 451 348 450 348 449 348 448 348 447 349 446 349 445 349 444 349 443 349 442 349 441 349 440 349 439 349 438 349 437 349 436 349 435 350 434 350 433 350 432 350 431 350 430 350 429 351 428 351 427 351 426 351 425 352 424 352 423 353 422 353 421 354 420 354 419 354 418 354 417 355 416 355 415 355 414 355 413 356 412 356 411 356 410 356 409 356 408 356 407 356 406 357 405 357 404 357 403 357 402 357 401 357 400 357 399 357 398 357 397 357 396 357 395 357 394 357 393 357 392 357 391 357 390 357 389 357 388 358 387 358 386 358 385 358 384 358 383 358 382 358 381 358 380 358 379 358 378 358 377 358 376 358 375 357 374 357 373 357 372 357 371 357 370 356 369 356 368 356 367 356 366 356 365 355 364 355 363 355 362 355 361 355 360 355 359 354 358 354 357 354 356 354 355 354 354 354 353 354 352 354 351 354 350 354 349 354 348 354 347 354 346 354 345 353 344 353 343 353 342 353 341 353 340 353 339 353 338 353 337 353 336 353 335 353 334 353 333 353 332 353 331 352 330 352 329 352 328 352 327 352 326 352 325 352 324 352 323 352 322 352 321 352 320 352 319 352 318 352 317 352 316 352 315 352 314 352 313 352 312 352 311 351 310 351 309 351 308 351 307 351 306 351 305 351 304 351 303 351 302 351 301 351 300 351 299 352 298 352 297 352 296 352 295 352 294 352 293 352 292 352 291 352 290 353 289 353 288 353 287 353 286 353 285 353 284 353 283 353 282 353 281 353 280 353 279 353 278 353 277 353 276 353 275 353 274 353 273 353 272 352 271 352 270 352 269 352 268 352 267 351 266 351 265 351 264 351 263 350 262 350 261 350 260 350 259 350 258 350 257 350 256 350 255 350 254 350 253 350 252 350 251 350 250 350 249 350 248 350 247 351 246 351 245 351 244 351 243 352 242 352 241 352 240 352 239 353 238 353 237 353 236 353 235 353 234 354 233 354 232 354 231 354 230 354 229 353 228 353 227 352 226 352 225 351 224 351 223 350 222 350 221 349 220 348 219 348 218 347 217 347 216 346 215 345 214 345 213 344 212 344 211 343 210 343 209 342 208 342 207 341 206 341 205 340 204 340 203 340 202 339 201 339 200 338 199 338 198 338 197 337 196 337 195 336 194 336 193 336 192 335 191 335 190 334 189 334 188 334 187 333 186 333 185 332 184 332 183 332 182 331 181 331 180 330 179 330 178 330 177 329 176 329 175 329 174 328 173 328 172 328 171 327 170 327 169 327 168 327 167 326 166 326 165 326 164 326 163 325 162 325 161 325 160 325 159 324 158 324 157 324 156 324 155 323 154 323 153 323 152 323 151 322 150 322 149 322 148 321 147 321 146 321 145 320 144 320 143 320 142 320 141 319 140 319 139 319 138 318 137 318 136 318 135 317 134 317 133 317 132 317 131 316 130 316 129 316 128 316 127 315 126 315 125 315 124 315 123 315 122 315 121 315 120 315 119 316 118 316 117 316 116 316 115 317 114 317 113 317 112 317 111 317 110 318 109 318 108 318 107 318 106 318 105 318 104 318 103 318 102 318 101 317 100 317 99 317 98 317 97 317 96 317 95 317 94 316 93 316 92 316 91 316 90 316 89 316 88 316 87 316 86 315 85 315 84 315 83 315 82 315 81 315 80 315 79 315 78 315 77 315 76 315 75 314 74 314 73 314 72 314 71 314 70 314 69 314 68 314 67 314 66 314 65 314 64 314 63 314 62 314 61 314 60 314 59 313 58 313 57 313 56 313 55 313 54 313 53 313 52 313 51 313 50 312 49 312 48 312 47 312 46 312 45 311 44 311 43 311 42 311 41 310 40 310 39 310 38 309 37 309 36 309 35 309 34 309 33 308 32 308 31 308 30 308Z" fill="url(#gL)"/>
<path d="M29.5 226v22m0 59v53m1-115v3m0 59v4m1-68v5m0 59v20m1-107v28m0 59v23m1-95v13m0 60v33m1-94v1m0 60v32m1-95v3m0 60v8m1-91v23m0 60v9m1-128v59m0 60v70m1-141v11m0 61v44m1-184v79m0 61v11m1-125v52m0 62v45m1-116v9m0 63v20m1-117v34m0 63v14m1-95v18m0 63v76m1-140v1m0 63v36m1-151v52m0 64v71m1-156v21m0 64v28m1-175v83m0 64v45m1-111v2m0 64v39m1-148v45m0 64v34m1-121v23m0 65v46m1-175v64m0 65v21m1-100v14m0 65v73m1-196v57m0 66v81m1-189v42m0 66v78m1-160v16m0 66v31m1-146v49m0 66v29m1-120v25m0 66v51m1-198v81m0 66v69m1-217v82m0 67v12m1-130v51m0 67v75m1-194v52m0 67v22m1-155v66m0 67v39m1-136v30m0 67v51m1-194v76m0 67v61m1-168v40m0 67v15m1-85v3m0 67v13m1-111v31m0 67v38m1-158v53m0 67v71m1-188v50m0 67v61m1-173v45m0 67v59m1-127v1m0 67v15m1-156v74m0 67v90m1-163v6m0 67v83m1-212v62m0 67v84m1-203v52m0 68v57m1-205v80m0 68v51m1-159v40m0 68v53m1-169v48m0 68v29m1-124v27m0 68v68m1-141v5m0 68v4m1-88v16m0 68v74m1-160v18m0 68v77m1-218v73m0 68v34m1-173v71m0 68v50m1-169v52m0 67v16m1-99v16m0 68v44m1-179v67m0 68v43m1-141v30m0 68v22m1-127v37m0 68v57m1-155v31m0 67v6m1-99v26m0 67v46m1-124v11m0 67v8m1-144v69m0 67v27m1-110v17m0 67v39m1-112v6m0 67v39m1-108v2m0 67v70m1-180v43m0 67v59m1-154v28m0 67v30m1-161v65m0 66v56m1-208v86m0 66v75m1-221v80m0 67v2m1-121v52m0 67v11m1-106v28m0 67v41m1-169v61m0 67v87m1-215v61m0 67v18m1-96v11m0 67v67m1-137v3m0 67v68m1-138v3m0 67v10m1-103v26m0 67v33m1-150v50m0 66v63m1-162v33m0 66v17m1-118v35m0 66v6m1-137v65m0 66v29m1-138v43m0 66v29m1-184v89m0 65v50m1-178v63m0 65v41m1-189v83m0 65v77m1-177v36m0 64v34m1-131v33m0 63v83m1-159v13m0 63v13m1-158v81m0 64v59m1-148v24m0 65v18m1-88v5m0 65v49m1-194v79m0 66v44m1-186v76m0 66v47m1-136v22m0 67v41m1-111v2m0 69v31m1-166v66m0 69v79m1-151v2m0 70v83m1-223v69m0 71v77m1-172v24m0 72v49m1-135v13m0 73v78m1-197v45m0 74v64m1-146v8m0 74v50m1-153v28m0 76v65m1-152v10m0 77v3m1-106v25m0 78v52m1-171v40m0 80v10m1-140v50m0 80v77m1-236v78m0 81v31m1-141v28m0 83v2m1-115v29m0 84v9m1-107v13m0 85v56m1-143v1m0 86v19m1-147v42m0 87v14m1-161v59m0 88v47m1-149v13m0 89v21m1-116v5m0 91v44m1-190v54m0 92v63m1-166v11m0 92v23m1-136v20m0 94v37m1-135v3m0 95v7m1-114v12m0 95v65m1-219v58m0 96v44m1-168v27m0 98v17m1-132v17m0 98v23m1-154v32m0 99v3m1-109v6m0 100v13m1-169v56m0 101v37m1-182v43m0 102v28m1-195v65m0 102v11m1-134v21m0 102v58m1-215v55m0 103v31m1-139v5m0 103v59m1-198v36m0 103v2m1-136v31m0 103v47m1-179v29m0 104v74m1-229v51m0 104v19m1-125v2m0 104v65m1-176v7m0 104v35m1-156v17m0 105v9m1-117v2m0 106v60m1-167v1m0 106v57m1-164v1m0 107v63m1-213v43m0 107v71m1-179v1m0 107v17m1-126v2m0 108v57m1-173v8m0 108v13m1-150v29m0 108v5m1-114v1m0 109v58m1-169v2m0 109v15m1-170v45m0 111v3m1-134v20m0 111v24m1-159v24m0 111v57m1-187v19m0 112v36m1-187v38m0 113v44m1-206v49m0 114v40m1-160v6m0 114v18m1-150v17m0 115v2m1-119v2m0 116v48m1-205v41m0 116v1m1-139v21m0 118v15m1-142v9m0 118v10m1-140v12m0 118v50m1-175v6m0 120v14m1-147v13m0 120v50m1-181v11m0 121v8m1-131v1m0 122v30m1-153v1m0 122v7m1-181v52m0 123v52m1-179v4m0 123v30m1-183v29m0 125v50m1-176v1m0 125v6m1-145v14m0 125v1m1-161v35m0 126v15m1-151v10m0 126v27m1-196v43m0 127v1m1-141v13m0 127v14m1-146v5m0 128v47m1-190v15m0 128v6m1-186v52m0 129v8m1-155v18m0 129v1m1-140v10m0 130v1m1-162v30m0 131v2m1-134v1m0 132v10m1-152v10m0 133v1m1-155v21m0 133v46m1-193v14m0 134v1m1-147v12m0 134v3m1-154v17m0 135v8m1-165v22m0 136v4m1-150v10m0 136v12m1-180v32m0 137v7m1-146v2m0 137v20m1-196v39m0 138v5m1-144v1m0 138v2m1-154v14m0 139v19m1-199v41m0 139v8m1-175v28m0 140v3m1-145v1m0 141v44m1-233v48m0 141v1m1-156v14m0 141v1m1-144v2m0 141v44m1-186v1m0 140v20m1-161v1m0 140v33m1-221v48m0 140v55m1-214v19m0 140v4m1-157v13m0 140v4m1-148v4m0 139v31m1-174v4m0 139v40m1-210v31m0 139v18m1-166v9m0 139v37m1-179v3m0 138v38m1-178v2m0 138v7m1-161v15m0 139v1m1-180v40m0 139v5m1-178v34m0 138v1m1-179v40m0 138v51m1-207v18m0 138v7m1-156v11m0 138v34m1-177v5m0 138v2m1-147v7m0 138v7m1-163v18m0 138v19m1-161v4m0 138v12m1-161v11m0 138v2m1-174v34m0 138v27m1-199v34m0 138v17m1-157v1m0 139v21m1-161v1m0 139v15m1-160v6m0 139v20m1-163v4m0 139v6m1-162v17m0 139v44m1-207v24m0 140v41m1-200v19m0 140v43m1-198v15m0 140v16m1-157v1m0 140v27m1-178v11m0 141v39m1-190v10m0 141v9m1-195v45m0 141v12m1-170v16m0 142v4m1-181v35m0 142v8m1-159v9m0 143v37m1-208v28m0 143v25m1-188v20m0 143v42m1-203v18m0 143v38m1-189v8m0 143v16m1-202v43m0 143v40m1-186v3m0 143v29m1-186v14m0 143v26m1-201v32m0 143v1m1-179v35m0 143v28m1-173v2m0 143v22m1-171v5m0 144v41m1-191v6m0 144v20m1-197v33m0 144v22m1-179v13m0 144v40m1-205v21m0 144v5m1-155v6m0 144v15m1-170v11m0 144v18m1-173v11m0 143v36m1-195v16m0 143v20m1-176v13m0 143v1m1-149v5m0 143v1m1-177v33m0 143v2m1-154v9m0 143v1m1-150v6m0 143v4m1-173v26m0 143v37m1-197v17m0 143v7m1-162v12m0 142v21m1-193v30m0 142v8m1-186v36m0 142v6m1-160v12m0 142v3m1-156v11m0 142v24m1-167v1m0 142v38m1-182v2m0 142v8m1-161v11m0 142v1m1-182v39m0 142v39m1-208v27m0 142v32m1-206v32m0 142v16m1-196v38m0 142v2m1-146v2m0 143v7m1-192v43m0 142v40m1-204v22m0 142v8m1-152v2m0 142v2m1-158v14m0 142v10m1-158v7m0 141v39m1-207v27m0 141v33m1-211v37m0 141v1m1-153v11m0 141v41m1-208v27m0 140v11m1-152v1m0 140v16m1-196v40m0 140v38m1-194v16m0 140v2m1-181v39m0 140v33m1-211v39m0 139v25m1-203v39m0 139v3m1-164v22m0 139v26m1-168v3m0 139v15m1-195v41m0 139v7m1-175v29m0 139v4m1-149v6m0 140v30m1-204v34m0 140v8m1-176v28m0 140v15m1-156v1m0 140v33m1-175v1m0 141v2m1-167v24m0 141v2m1-163v20m0 141v1m1-152v10m0 141v39m1-181v1m0 141v9m1-169v19m0 141v16m1-159v2m0 141v30m1-203v32m0 141v4m1-155v9m0 142v23m1-171v6m0 142v31m1-175v2m0 143v1m1-145v1m0 143v5m1-152v4m0 143v36m1-181v2m0 143v3m1-151v5m0 143v1m1-146v2m0 143v38m1-216v35m0 143v10m1-166v13m0 143v11m1-182v27m0 144v13m1-158v1m0 144v1m1-146v1m0 144v31m1-200v26m0 143v1m1-151v7m0 143v5m1-160v12m0 143v34m1-197v20m0 144v1m1-146v1m0 144v4m1-160v12m0 144v12m1-159v3m0 144v29m1-216v43m0 144v33m1-202v25m0 144v23m1-221v54m0 145v3m1-172v25m0 144v16m1-162v2m0 144v27m1-172v1m0 144v7m1-170v19m0 144v37m1-190v9m0 145v8m1-160v7m0 145v1m1-160v14m0 145v5m1-189v39m0 145v42m1-204v17m0 145v41m1-191v6m0 145v42m1-189v2m0 145v51m1-227v31m0 145v1m1-169v23m0 145v13m1-212v54m0 145v37m1-201v19m0 145v2m1-189v42m0 145v40m1-219v33m0 146v35m1-221v40m0 146v6m1-172v20m0 146v27m1-205v32m0 146v36m1-188v6m0 146v1m1-157v9m0 147v3m1-170v20m0 146v16m1-211v49m0 146v11m1-206v48m0 147v5m1-191v39m0 147v36m1-185v2m0 147v38m1-226v40m0 148v2m1-153v3m0 148v17m1-205v40m0 148v8m1-205v48m0 149v16m1-170v5m0 149v30m1-198v19m0 149v3m1-157v4m0 150v36m1-191v5m0 150v28m1-187v9m0 150v12m1-164v2m0 150v13m1-165v2m0 150v1m1-168v17m0 150v19m1-185v16m0 150v8m1-196v38m0 149v2m1-176v25m0 149v14m1-184v21m0 149v7m1-158v2m0 149v1m1-159v10m0 148v2m1-166v16m0 148v41m1-191v2m0 148v4m1-155v4m0 146v24m1-174v4m0 146v14m1-197v38m0 145v1m1-147v1m0 145v20m1-169v4m0 144v13m1-174v18m0 143v23m1-212v46m0 143v3m1-161v16m0 142v2m1-159v15m0 141v31m1-188v17m0 140v44m1-185v2m0 138v15m1-167v15m0 137v4m1-174v34m0 135v6m1-204v64m0 134v9m1-144v1m0 134v15m1-149v1m0 133v21m1-171v18m0 131v25m1-161v5m0 131v4m1-141v7m0 130v30m1-173v13m0 130v50m1-231v51m0 130v5m1-184v50m0 129v1m1-157v27m0 128v18m1-166v20m0 128v18m1-160v15m0 127v16m1-164v21m0 127v26m1-159v6m0 127v42m1-178v9m0 127v1m1-180v52m0 127v42m1-221v53m0 126v13m1-144v5m0 126v5m1-148v17m0 126v27m1-156v3m0 126v15m1-143v2m0 126v14m1-150v10m0 125v3m1-145v16m0 126v48m1-187v13m0 126v46m1-188v16m0 126v21m1-151v4m0 126v28m1-182v27m0 127v30m1-185v28m0 127v43m1-173v3m0 126v35m1-176v15m0 126v3m1-177v48m0 126v12m1-169v31m0 126v19m1-146v2m0 125v3m1-176v48m0 124v1m1-126v1m0 124v1m1-141v16m0 124v27m1-203v53m0 123v14m1-150v13m0 122v42m1-200v36m0 122v40m1-184v23m0 121v5m1-148v22m0 121v25m1-164v18m0 120v5m1-135v11m0 119v6m1-126v1m0 119v43m1-170v8m0 118v42m1-177v18m0 117v2m1-121v2m0 117v18m1-145v10m0 117v8m1-177v52m0 117v4m1-134v13m0 117v4m1-124v4m0 116v45m1-206v45m0 116v20m1-158v22m0 116v20m1-189v53m0 116v41m1-191v34m0 116v3m1-135v16m0 117v23m1-166v26m0 117v3m1-122v1m0 118v12m1-152v22m0 118v36m1-208v54m0 118v40m1-178v20m0 119v5m1-169v44m0 120v26m1-151v5m0 120v32m1-204v52m0 121v7m1-176v48m0 121v43m1-166v1m0 122v3m1-169v44m0 123v19m1-144v2m0 123v1m1-126v1m0 124v2m1-142v16m0 125v3m1-139v11m0 125v20m1-150v5m0 125v2m1-152v24m0 127v15m1-187v45m0 127v4m1-135v4m0 127v8m1-136v1m0 127v35m1-211v49m0 128v6m1-180v46m0 128v59m1-202v14m0 129v1m1-149v19m0 129v28m1-202v45m0 129v31m1-199v40m0 128v47m1-184v9m0 128v25m1-157v4m0 128v47m1-209v34m0 128v8m1-190v54m0 128v19m1-148v1m0 128v10m1-169v31m0 128v1m1-130v1m0 128v20m1-193v45m0 128v5m1-157v25m0 127v20m1-149v2m0 127v3m1-181v51m0 127v5m1-155v23m0 127v24m1-186v35m0 127v42m1-183v14m0 127v47m1-175v1m0 127v35m1-214v53m0 126v17m1-186v43m0 126v56m1-223v41m0 126v21m1-158v11m0 126v14m1-180v40m0 126v31m1-182v25m0 126v32m1-203v45m0 126v51m1-184v7m0 126v38m1-165v1m0 126v32m1-182v24m0 126v14m1-166v26m0 126v8m1-164v30m0 126v21m1-173v26m0 126v39m1-205v40m0 126v10m1-162v26m0 126v40m1-179v13m0 126v13m1-159v19m0 127v1m1-148v20m0 127v15m1-187v45m0 127v5m1-184v52m0 127v37m1-172v8m0 127v19m1-175v29m0 127v20m1-166v19m0 127v8m1-189v54m0 127v7m1-150v16m0 127v32m1-186v27m0 127v12m1-148v9m0 127v17m1-145v1m0 127v34m1-162v1m0 127v6m1-152v19m0 127v43m1-174v4m0 127v2m1-168v39m0 127v9m1-163v27m0 127v10m1-175v38m0 127v6m1-164v31m0 127v7m1-192v58m0 127v19m1-151v4m0 128v3m1-137v6m0 128v52m1-185v5m0 129v44m1-188v15m0 129v26m1-162v7m0 129v9m1-177v38m0 130v9m1-152v13m0 130v1m1-137v6m0 130v39m1-194v25m0 130v18m1-193v45m0 130v8m1-161v22m0 131v1m1-165v33m0 131v25m1-157v1m0 131v38m1-170v1m0 131v13m1-193v49m0 131v25m1-169v12m0 132v1m1-146v13m0 132v15m1-153v6m0 132v43m1-216v41m0 132v6m1-163v25m0 132v6m1-143v5m0 132v13m1-196v51m0 132v37m1-198v29m0 132v2m1-171v37m0 132v20m1-193v41m0 132v33m1-174v10m0 131v13m1-180v36m0 131v30m1-203v42m0 131v3m1-138v4m0 131v1m1-175v44m0 130v35m1-171v6m0 130v37m1-194v27m0 130v22m1-196v45m0 129v13m1-168v26m0 129v37m1-172v7m0 128v1m1-141v12m0 128v33m1-176v15m0 128v37m1-167v3m0 127v33m1-166v6m0 127v25m1-199v47m0 127v12m1-191v52m0 127v48m1-224v50m0 126v8m1-162v28m0 126v2m1-182v54m0 126v2m1-135v7m0 126v2m1-188v60m0 126v49m1-179v4m0 126v1m1-170v43m0 126v39m1-182v17m0 127v6m1-154v21m0 127v11m1-163v25m0 127v24m1-171v20m0 127v14m1-144v3m0 127v11m1-190v52m0 127v5m1-138v6m0 127v4m1-132v1m0 127v7m1-135v1m0 127v47m1-177v3m0 127v2m1-179v50m0 128v33m1-164v3m0 128v3m1-156v25m0 128v30m1-161v3m0 128v44m1-174v1m0 129v3m1-137v5m0 129v23m1-185v33m0 129v2m1-155v24m0 129v2m1-136v5m0 130v27m1-199v42m0 130v12m1-150v8m0 130v19m1-178v29m0 130v40m1-207v37m0 130v36m1-184v18m0 130v10m1-146v6m0 130v35m1-212v47m0 130v22m1-158v6m0 130v1m1-152v20m0 131v5m1-164v28m0 131v37m1-184v16m0 131v5m1-165v28m0 132v13m1-187v42m0 132v30m1-185v23m0 132v20m1-197v44m0 133v3m1-183v47m0 133v39m1-194v21m0 134v20m1-169v15m0 133v6m1-166v27m0 133v2m1-168v32m0 134v35m1-174v5m0 134v27m1-163v1m0 135v3m1-147v9m0 135v15m1-173v23m0 135v20m1-157v2m0 135v2m1-158v20m0 136v26m1-221v59m0 136v21m1-192v35m0 136v36m1-221v49m0 136v17m1-168v15m0 136v4m1-141v1m0 136v7m1-145v2m0 136v3m1-188v49m0 136v1m1-143v6m0 136v6m1-153v11m0 136v18m1-156v2m0 136v37m1-174v2m0 135v12m1-149v2m0 134v14m1-151v3m0 134v11m1-150v5m0 134v16m1-173v23m0 134v1m1-146v11m0 133v9m1-157v16m0 132v40m1-195v23m0 132v19m1-188v37m0 132v30m1-165v3m0 132v1m1-165v32m0 131v47m1-198v20m0 131v54m1-225v41m0 130v10m1-165v25m0 130v2m1-183v51m0 130v19m1-151v2m0 130v50m1-197v17m0 130v31m1-163v2m0 130v3m1-153v20m0 130v41m1-186v15m0 130v2m1-157v25m0 130v43m1-203v30m0 130v2m1-133v1m0 130v38m1-175v7m0 131v6m1-140v3m0 131v1m1-133v1m0 131v3m1-145v12m0 130v4m1-151v17m0 131v26m1-160v3m0 131v17m1-156v8m0 131v5m1-175v39m0 132v20m1-157v6m0 131v37m1-174v6m0 131v15m1-148v2m0 132v37m1-208v39m0 132v1m1-134v1m0 132v30m1-193v31m0 132v34m1-219v53m0 133v30m1-178v16m0 132v4m1-150v14m0 132v33m1-173v8m0 132v27m1-179v20m0 132v22m1-208v54m0 132v9m1-185v44m0 132v1m1-136v3m0 132v30m1-215v52m0 133v1m1-138v4m0 133v2m1-184v49m0 133v9m1-166v24m0 133v24m1-163v5m0 134v24m1-163v5m0 134v33m1-176v8m0 135v3m1-154v16m0 135v25m1-186v26m0 134v2m1-138v1m0 135v37m1-221v49m0 135v16m1-200v48m0 136v34m1-214v44m0 136v16m1-163v10m0 137v5m1-143v1m0 137v4m1-148v7m0 137v43m1-237v56m0 137v2m1-187v48m0 137v7m1-187v43m0 137v44m1-191v9m0 138v43m1-182v1m0 138v9m1-174v27m0 138v11m1-151v2m0 138v11m1-174v25m0 138v12m1-178v28m0 138v7m1-191v46m0 138v33m1-184v13m0 138v3m1-148v7m0 139v13m1-154v2m0 139v2m1-143v2m0 139v8m1-172v25m0 139v48m1-191v4m0 139v29m1-170v2m0 139v3m1-183v41m0 139v2m1-144v3m0 140v6m1-147v1m0 140v39m1-180v1m0 140v9m1-159v10m0 140v39m1-181v2m0 140v43m1-201v18m0 140v3m1-162v19m0 141v26m1-168v1m0 141v3m1-155v11m0 141v43m1-210v26m0 141v4m1-147v2m0 141v1m1-144v2m0 141v38m1-184v5m0 141v10m1-156v5m0 141v10m1-158v7m0 141v29m1-186v16m0 141v4m1-155v10m0 141v2m1-145v2m0 141v29m1-212v43m0 140v33m1-191v18m0 140v10m1-151v1m0 140v3m1-186v43m0 140v43m1-206v24m0 139v2m1-169v28m0 139v10m1-182v33m0 139v22m1-187v27m0 138v17m1-190v35m0 138v13m1-174v24m0 137v18m1-174v19m0 137v6m1-144v1m0 137v6m1-159v17m0 136v30m1-211v45m0 135v10m1-164v19m0 135v44m1-189v11m0 134v12m1-178v32m0 134v20m1-159v5m0 134v10m1-196v52m0 134v5m1-147v8m0 134v15m1-154v5m0 134v17m1-159v8m0 134v44m1-206v28m0 134v10m1-155v11m0 134v38m1-179v7m0 134v8m1-173v31m0 134v32m1-205v39m0 134v5m1-149v10m0 134v4m1-155v16m0 135v10m1-147v2m0 135v1m1-137v1m0 135v33m1-170v2m0 135v4m1-148v9m0 135v5m1-176v36m0 135v16m1-186v34m0 136v8m1-146v2m0 136v6m1-157v15m0 136v7m1-145v2m0 136v5m1-149v8m0 136v42m1-193v15m0 136v35m1-175v4m0 136v8m1-177v32m0 137v40m1-181v4m0 137v51m1-193v5m0 137v25m1-164v2m0 137v15m1-154v2m0 137v7m1-199v55m0 137v4m1-158v17m0 137v27m1-183v19m0 137v1m1-177v39m0 137v24m1-176v15m0 137v18m1-164v9m0 137v23m1-162v3m0 136v14m1-187v37m0 136v17m1-171v18m0 136v11m1-203v56m0 136v2m1-139v1m0 136v26m1-163v1m0 136v23m1-162v3m0 136v1m1-142v5m0 136v32m1-209v41m0 136v1m1-138v2m0 135v39m1-220v46m0 135v2m1-167v30m0 135v45m1-184v4m0 135v21m1-157v1m0 135v8m1-177v34m0 135v22m1-158v1m0 135v15m1-157v7m0 135v11m1-202v56m0 135v21m1-157v1m0 135v4m1-158v19m0 135v3m1-141v3m0 135v31m1-177v11m0 136v24m1-221v61m0 136v32m1-219v51m0 136v7m1-145v2m0 136v1m1-146v9m0 136v34m1-206v36m0 136v17m1-158v4m0 137v3m1-141v1m0 137v23m1-172v12m0 137v3m1-183v43m0 137v35m1-176v4m0 137v1m1-166v28m0 137v31m1-198v30m0 137v34m1-182v11m0 137v18m1-173v18m0 137v36m1-208v35m0 137v47m1-186v2m0 137v10m1-168v20m0 138v15m1-170v17m0 139v9m1-178v30m0 139v1m1-164v24m0 139v7m1-168v22m0 139v30m1-170v1m0 139v1m1-151v11m0 139v3m1-177v35m0 139v1m1-143v3m0 139v10m1-156v7m0 139v2m1-154v13m0 139v20m1-195v36m0 139v1m1-142v2m0 139v4m1-154v10m0 140v35m1-178v3m0 140v29m1-172v3m0 140v39m1-186v7m0 140v14m1-200v46m0 140v3m1-147v4m0 140v35m1-220v44m0 141v36m1-183v6m0 141v1m1-150v8m0 141v47m1-189v1m0 141v40m1-188v7m0 141v11m1-161v9m0 141v20m1-168v7m0 141v17m1-186v28m0 141v3m1-160v15m0 142v22m1-165v1m0 142v1m1-158v15m0 142v12m1-187v33m0 142v17m1-181v22m0 142v4m1-199v53m0 142v20m1-198v36m0 142v12m1-194v40m0 142v12m1-165v12m0 141v43m1-203v19m0 141v39m1-181v1m0 140v17m1-191v34m0 140v52m1-231v39m0 140v41m1-182v1m0 140v45m1-222v38m0 139v9m1-149v1m0 139v32m1-174v3m0 139v38m1-192v15m0 139v12m1-192v41m0 139v12m1-151v1m0 138v31m1-199v30m0 138v36m1-182v8m0 138v28m1-168v2m0 138v13m1-165v14m0 138v24m1-176v14m0 138v41m1-228v49m0 138v29m1-168v1m0 138v5m1-184v41m0 138v1m1-172v33m0 138v24m1-180v18m0 138v15m1-199v46m0 138v1m1-143v4m0 138v42m1-184v4m0 138v23m1-173v12m0 139v24m1-209v46m0 139v4m1-169v26m0 139v31m1-172v1m0 140v29m1-222v53m0 141v10m1-153v2m0 141v29m1-179v9m0 141v7m1-155v6m0 143v25m1-175v7m0 143v6m1-152v3m0 144v26m1-230v59m0 145v12m1-165v8m0 145v1m1-170v24m0 146v26m1-187v15m0 146v31m1-204v27m0 146v5m1-157v5m0 147v2m1-195v46m0 148v32m1-188v8m0 148v6m1-161v7m0 148v2m1-154v4m0 148v2m1-172v22m0 148v13m1-169v8m0 148v10m1-197v39m0 148v29m1-204v27m0 148v10m1-170v12m0 148v2m1-154v4m0 148v21m1-170v1m0 148v2m1-151v2m0 147v8m1-196v41m0 147v4m1-160v9m0 147v26m1-192v19m0 147v17m1-173v10m0 146v38m1-225v41m0 146v3m1-192v43m0 147v32m1-180v2m0 146v1m1-192v45m0 146v27m1-183v10m0 146v2m1-189v41m0 146v2m1-157v10m0 145v17m1-198v36m0 145v5m1-153v3m0 145v11m1-194v38m0 145v23m1-207v39m0 145v1m1-149v3m0 145v19m1-171v7m0 145v18m1-164v1m0 145v27m1-188v16m0 145v2m1-158v11m0 145v24m1-189v20m0 145v26m1-183v12m0 145v22m1-185v18m0 145v28m1-206v33m0 145v6m1-160v9m0 145v2m1-148v1m0 145v10m1-165v10m0 146v18m1-217v53m0 146v4m1-156v6m0 146v2m1-149v1m0 146v5m1-184v33m0 146v29m1-228v53m0 146v14m1-182v22m0 146v31m1-226v49m0 146v32m1-180v1m0 147v3m1-154v4m0 148v3m1-161v10m0 148v27m1-216v41m0 148v2m1-167v17m0 148v4m1-182v30m0 148v12m1-197v37m0 148v15m1-170v7m0 148v1m1-150v1m0 148v23m1-189v18m0 148v4m1-186v34m0 148v30m1-231v53m0 148v5m1-159v6m0 148v3m1-161v9m0 149v32m1-182v1m0 149v9m1-160v2m0 149v16m1-191v26m0 149v34m1-207v23m0 150v26m1-217v41m0 150v11m1-173v12m0 149v2m1-155v3m0 150v2m1-194v42m0 150v30m1-182v2m0 150v25m1-183v7m0 151v4m1-191v36m0 151v8m1-196v37m0 151v25m1-205v29m0 151v3m1-172v17m0 152v3m1-174v19m0 152v2m1-155v1m0 152v1m1-179v26m0 152v22m1-210v36m0 152v3m1-160v5m0 152v1m1-161v7m0 153v14m1-168v1m0 153v34m1-188v1m0 153v1m1-155v1m0 153v24m1-185v9m0 151v2m1-165v12m0 151v2m1-180v27m0 151v24m1-189v14m0 151v23m1-218v44m0 151v23m1-176v2m0 151v21m1-213v41m0 151v6m1-158v1m0 151v17m1-196v29m0 150v25m1-176v1m0 150v1m1-152v1m0 150v1m1-155v4m0 150v8m1-199v41m0 150v31m1-196v15m0 150v1m1-178v27m0 150v12m1-164v3m0 149v1m1-172v22m0 149v17m1-208v42m0 149v4m1-156v3m0 149v3m1-155v3m0 149v31m1-193v13m0 149v35m1-199v15m0 149v6m1-177v22m0 149v15m1-204v40m0 149v5m1-185v31m0 149v14m1-173v10m0 149v16m1-175v10m0 149v5m1-168v14m0 149v11m1-192v32m0 149v30m1-181v2m0 149v2m1-191v39m0 150v12m1-173v11m0 150v33m1-186v3m0 150v1m1-189v38m0 150v15m1-174v9m0 151v19m1-203v33m0 151v6m1-178v21m0 151v17m1-170v2m0 151v8m1-168v9m0 151v16m1-200v33m0 151v27m1-210v32m0 151v10m1-172v11m0 151v1m1-185v33m0 151v30m1-207v26m0 151v6m1-182v25m0 151v21m1-173v1m0 151v15m1-204v38m0 151v8m1-175v16m0 151v28m1-216v37m0 151v42m1-195v2m0 151v33m1-222v37m0 152v31m1-194v11m0 152v21m1-178v5m0 152v30m1-183v1m0 151v3m1-163v9m0 151v9m1-164v4m0 151v3m1-158v4m0 151v2m1-170v17m0 150v27m1-212v35m0 150v5m1-163v7m0 151v1m1-153v1m0 151v16m1-201v34m0 150v8m1-189v31m0 150v1m1-171v20m0 150v5m1-181v26m0 149v12m1-163v2m0 149v2m1-159v8m0 149v1m1-166v16m0 149v15m1-170v6m0 149v17m1-207v40m0 150v4m1-175v21m0 150v30m1-183v3m0 150v15m1-168v3m0 150v1m1-193v42m0 150v32m1-227v45m0 150v1m1-154v3m0 150v2m1-154v2m0 150v6m1-186v30m0 150v1m1-174v23m0 150v6m1-163v7m0 151v5m1-199v43m0 151v1m1-164v12m0 151v34m1-211v26m0 151v3m1-175v21m0 152v2m1-181v27m0 152v23m1-216v41m0 152v2m1-166v12m0 152v2m1-184v30m0 153v3m1-179v23m0 153v13m1-172v6m0 153v32m1-197v12m0 153v4m1-158v1m0 154v2m1-164v8m0 154v26m1-183v3m0 154v14m1-171v3m0 154v3m1-163v6m0 154v1m1-167v12m0 154v15m1-184v15m0 154v6m1-179v19m0 154v18m1-179v7m0 154v5m1-167v8m0 154v21m1-176v1m0 154v11m1-202v37m0 154v18m1-182v10m0 154v23m1-201v24m0 154v21m1-189v14m0 154v4m1-166v8m0 154v23m1-181v4m0 153v11m1-197v33m0 153v6m1-186v27m0 153v5m1-197v39m0 153v17m1-190v20m0 153v1m1-161v7m0 153v3m1-176v20m0 153v3m1-175v19m0 153v25m1-179v1m0 153v22m1-183v8m0 153v21m1-213v39m0 152v5m1-166v9m0 152v22m1-178v4m0 152v3m1-157v2m0 152v28m1-198v18m0 152v28m1-196v16m0 152v20m1-205v33m0 152v19m1-192v21m0 152v31m1-193v10m0 152v4m1-178v22m0 152v2m1-189v35m0 152v3m1-175v20m0 152v1m1-156v3m0 152v31m1-184v1m0 152v2m1-162v9m0 151v18m1-170v1m0 151v4m1-182v27m0 150v8m1-162v4m0 150v5m1-158v3m0 150v8m1-166v8m0 150v2m1-183v31m0 150v8m1-174v16m0 150v2m1-164v13m0 149v13m1-163v1m0 149v1m1-154v4m0 149v10m1-180v21m0 149v3m1-174v22m0 148v13m1-186v25m0 148v6m1-170v16m0 148v27m1-176v1m0 148v5m1-159v6m0 148v7m1-162v7m0 148v39m1-205v17m0 149v16m1-200v35m0 149v8m1-164v7m0 149v6m1-156v1m0 149v8m1-164v6m0 151v16m1-168v1m0 151v26m1-189v12m0 151v1m1-154v1m0 152v1m1-159v6m0 152v31m1-201v18m0 152v2m1-182v27m0 153v10m1-167v4m0 153v25m1-182v4m0 153v1m1-182v27m0 154v23m1-180v3m0 154v15m1-171v1m0 155v29m1-185v1m0 155v13m1-171v3m0 155v14m1-184v15m0 155v7m1-181v18m0 156v5m1-170v9m0 156v24m1-190v10m0 156v23m1-193v14m0 156v32m1-203v15m0 156v9m1-170v5m0 156v14m1-204v34m0 156v7m1-172v9m0 156v8m1-191v27m0 156v3m1-161v2m0 156v1m1-183v25m0 157v2m1-178v19m0 157v5m1-171v9m0 158v36m1-198v4m0 158v1m1-189v30m0 158v2m1-163v3m0 158v33m1-202v11m0 158v1m1-172v12m0 159v26m1-202v17m0 160v5m1-194v29m0 160v8m1-185v17m0 160v16m1-197v21m0 160v3m1-174v11m0 160v15m1-178v3m0 160v33m1-200v6m0 161v23m1-188v4m0 161v23m1-188v4m0 161v39m1-231v31m0 162v18m1-188v8m0 162v2m1-200v36m0 162v4m1-201v35m0 162v1m1-164v1m0 161v30m1-192v1m0 161v16m1-202v25m0 161v3m1-196v32m0 161v41m1-204v2m0 161v15m1-194v18m0 161v27m1-189v1m0 161v15m1-178v2m0 161v28m1-204v15m0 161v5m1-193v27m0 161v17m1-206v28m0 160v13m1-175v2m0 160v6m1-182v16m0 160v14m1-200v26m0 160v22m1-202v20m0 160v17m1-187v10m0 160v1m1-181v20m0 160v3m1-192v29m0 160v19m1-197v18m0 160v2m1-188v26m0 160v3m1-170v7m0 160v42m1-204v2m0 160v30m1-219v29m0 160v17m1-195v18m0 160v23m1-197v14m0 160v11m1-202v31m0 160v34m1-197v3m0 160v15m1-189v14m0 160v6m1-192v26m0 160v7m1-194v27m0 160v43m1-234v31m0 160v4m1-190v26m0 160v28m1-195v7m0 160v22m1-189v7m0 160v5m1-203v39m0 159v36m1-220v25m0 160v24m1-195v11m0 160v1m1-172v11m0 160v1m1-190v29m0 160v22m1-216v34m0 160v25m1-204v19m0 160v8m1-189v21m0 160v13m1-202v30m0 159v16m1-178v3m0 159v27m1-216v30m0 159v4m1-187v24m0 159v33m1-196v4m0 159v33m1-196v4m0 159v12m1-202v31m0 159v11m1-189v19m0 159v14m1-174v1m0 159v41m1-212v12m0 159v2m1-184v23m0 160v15m1-176v1m0 160v9m1-172v3m0 160v22m1-185v3m0 160v31m1-212v21m0 160v35m1-223v28m0 160v2m1-175v14m0 159v1m1-189v29m0 159v9m1-183v15m0 159v4m1-176v13m0 159v17m1-206v30m0 159v11m1-194v24m0 159v3m1-192v30m0 159v30m1-225v36m0 159v5m1-192v28m0 159v10m1-206v38m0 159v1m1-162v2m0 159v22m1-198v17m0 159v7m1-170v4m0 159v9m1-190v22m0 159v12m1-210v39m0 159v26m1-218v33m0 159v4m1-170v7m0 159v13m1-177v5m0 159v5m1-183v19m0 159v4m1-165v2m0 159v22m1-197v16m0 158v2m1-170v10m0 158v27m1-215v30m0 158v7m1-166v1m0 158v19m1-211v34m0 158v20m1-184v5m0 159v7m1-199v33m0 159v29m1-194v6m0 159v29m1-223v35m0 159v1m1-193v33m0 159v7m1-169v3m0 159v29m1-209v21m0 159v30m1-210v21m0 158v11m1-196v27m0 158v5m1-165v2m0 158v1m1-160v1m0 158v23m1-216v35m0 158v38m1-215v19m0 157v22m1-194v15m0 157v16m1-174v1m0 156v7m1-168v5m0 156v2m1-164v6m0 155v8m1-193v30m0 155v4m1-184v25m0 154v15m1-172v3m0 154v3m1-164v7m0 153v22m1-206v31m0 153v42m1-200v6m0 151v8m1-160v2m0 150v1m1-159v9m0 148v19m1-177v10m0 147v21m1-185v18m0 146v9m1-185v31m0 144v3m1-158v12m0 143v24m1-222v55m0 142v28m1-198v29m0 141v39m1-188v9m0 139v6m1-146v2m0 137v3m1-170v30m0 137v22m1-181v23m0 135v2m1-179v43m0 134v41m1-189v15m0 132v13m1-171v26m0 132v40m1-225v54m0 130v3m1-184v52m0 129v40m1-210v42m0 127v1m1-163v36m0 126v8m1-147v14m0 125v35m1-188v29m0 123v1m1-135v12m0 122v8m1-145v15m0 121v2m1-145v23m0 121v30m1-153v2m0 121v19m1-156v16m0 121v2m1-182v59m0 121v4m1-180v55m0 121v7m1-132v4m0 121v5m1-129v3m0 122v33m1-179v24m0 122v31m1-159v6m0 122v25m1-165v18m0 122v8m1-135v5m0 122v2m1-132v8m0 122v38m1-163v3m0 123v11m1-174v40m0 123v30m1-201v48m0 123v11m1-137v3m0 123v11m1-191v57m0 123v32m1-175v20m0 123v26m1-156v7m0 123v21m1-163v19m0 123v42m1-203v38m0 123v28m1-167v16m0 123v48m1-175v4m0 123v23m1-175v29m0 123v18m1-153v12m0 123v14m1-182v45m0 123v16m1-145v7m0 121v16m1-200v63m0 121v51m1-176v4m0 121v2m1-129v6m0 121v5m1-184v59m0 120v32m1-195v43m0 120v1m1-173v52m0 120v31m1-154v4m0 119v36m1-209v54m0 118v10m1-182v54m0 118v4m1-124v2m0 118v38m1-206v50m0 118v10m1-160v33m0 117v27m1-150v6m0 117v15m1-188v56m0 117v11m1-133v5m0 117v6m1-132v9m0 117v8m1-129v4m0 117v7m1-180v56m0 117v33m1-200v50m0 117v8m1-129v4m0 117v8m1-141v16m0 117v7m1-183v59m0 117v48m1-169v4m0 117v13m1-133v3m0 117v39m1-186v30m0 117v49m1-225v59m0 117v17m1-148v14m0 117v48m1-197v32m0 117v35m1-169v17m0 117v17m1-165v31m0 117v47m1-219v55m0 117v3m1-123v2m0 118v49m1-179v12m0 118v3m1-133v12m0 118v2m1-128v8m0 118v16m1-188v54m0 118v9m1-138v11m0 118v32m1-166v16m0 118v19m1-175v38m0 118v2m1-176v56m0 118v43m1-164v3m0 118v1m1-150v31m0 118v20m1-150v12m0 118v37m1-157v2m0 118v44m1-193v31m0 118v2m1-173v53m0 118v41m1-172v13m0 118v8m1-180v54m0 118v11m1-186v57m0 118v10m1-135v7m0 118v14m1-134v2m0 118v6m1-175v51m0 118v1m1-179v60m0 118v3m1-149v28m0 118v41m1-191v32m0 118v28m1-178v32m0 118v3m1-125v3m0 119v30m1-165v16m0 119v15m1-135v1m0 119v14m1-192v59m0 119v31m1-163v13m0 119v44m1-218v55m0 119v47m1-193v27m0 119v1m1-183v63m0 119v5m1-157v33m0 119v8m1-168v41m0 119v41m1-191v31m0 119v40m1-160v1m0 119v12m1-133v2m0 119v19m1-188v50m0 119v12m1-178v47m0 119v44m1-209v46m0 119v51m1-212v42m0 119v8m1-171v44m0 119v37m1-188v32m0 119v4m1-178v55m0 119v59m1-193v15m0 119v5m1-180v56m0 119v20m1-153v14m0 119v11m1-164v33m0 120v12m1-136v4m0 120v6m1-143v17m0 120v13m1-149v16m0 121v48m1-174v5m0 121v1m1-124v2m0 121v2m1-125v2m0 121v9m1-189v59m0 121v27m1-158v10m0 121v1m1-134v12m0 121v25m1-156v10m0 121v31m1-173v21m0 121v47m1-185v17m0 121v4m1-157v32m0 121v4m1-178v53m0 121v29m1-171v21m0 121v6m1-129v2m0 121v21m1-163v21m0 121v42m1-165v2m0 121v35m1-165v8m0 121v12m1-140v7m0 121v7m1-177v49m0 121v41m1-203v41m0 121v17m1-145v7m0 121v4m1-143v18m0 121v7m1-130v1m0 122v49m1-189v18m0 122v14m1-150v14m0 121v16m1-162v25m0 121v8m1-172v43m0 121v22m1-195v52m0 121v1m1-163v40m0 122v8m1-132v2m0 122v2m1-170v46m0 122v43m1-166v1m0 122v3m1-180v55m0 122v17m1-140v1m0 122v23m1-160v15m0 122v2m1-125v1m0 122v2m1-126v2m0 122v6m1-143v15m0 122v15m1-204v67m0 122v5m1-146v19m0 122v4m1-159v33m0 122v28m1-153v3m0 122v1m1-124v1m0 123v48m1-177v6m0 123v45m1-173v5m0 123v2m1-126v2m0 122v22m1-148v4m0 123v10m1-182v49m0 123v45m1-196v28m0 123v6m1-165v36m0 124v2m1-136v10m0 124v38m1-163v1m0 124v49m1-186v13m0 124v17m1-143v2m0 125v26m1-198v47m0 125v4m1-130v2m0 124v6m1-135v5m0 124v4m1-137v9m0 124v3m1-144v17m0 124v1m1-127v2m0 124v1m1-130v5m0 124v3m1-134v7m0 124v8m1-162v30m0 124v44m1-176v8m0 124v38m1-197v35m0 124v3m1-130v3m0 125v1m1-162v36m0 125v38m1-164v1m0 125v9m1-169v35m0 125v36m1-189v29m0 124v39m1-176v13m0 124v15m1-146v7m0 124v1m1-129v4m0 124v8m1-187v53m0 128v1m1-145v14m0 132v1m1-138v3m0 135v3m1-163v23m0 139v3m1-173v29m0 142v20m1-168v4m0 145v3m1-151v2m0 146v18m1-167v1m0 149v28m1-185v7m0 150v7m1-173v15m0 151v5m1-162v5m0 152v2m1-161v7m0 152v13m1-181v15m0 152v20m1-176v4m0 152v5m1-162v5m0 151v14m1-166v2m0 149v1m1-153v3m0 147v4m1-154v6m0 142v12m1-154v3m0 136v3m1-141v4m0 131v11m1-141v2m0 125v2m1-125v1m0 119v10m1-127v1m0 113v9m1-120v1m0 107v5m1-110v1m0 101v3m1-105v4m0 95v2m1-99v5m0 89v1m1-89v2m0 82v2m1-82v1m0 76v6m1-81v2m0 70v2m1-74v5m0 64v2m1-65v2m0 59v4m1-63v3m0 53v3m1-55v1m0 48v4m1-52v3m0 42v4m1-45v1m0 38v2m1-43v6m0 33v2m1-34v1m0 28v2m1-31v3m0 24v1m1-24v1m0 20v2m1-21v1m0 16v1m1-18v3m0 13v1m1-14v1m0 10v1m1-11v1m0 8v1m1-8v1m0 4v1m1-2v2" stroke="url(#gL)" stroke-width="1" fill="none"/>
<path d="M29.5 212v14m0 134v2m1-124v7m0 66v52m2-158v15m0 110v41m1-141v5m0 106v26m1-125v5m0 93v1m1-105v9m1-23v3m0 92v12m1-142v2m0 189v4m1-174v29m0 116v3m1-188v1m0 151v35m1-177v17m0 159v6m1-149v27m0 92v3m1-143v23m1-1v17m0 157v1m1-184v43m0 100v16m1-183v16m0 187v1m1-184v27m0 113v14m1 3v6m1-139v22m0 105v12m1-162v2m0 143v25m1-172v26m0 134v4m1-186v7m0 150v3m1-135v32m2-47v18m1 3v23m0 113v22m1-169v1m0 144v14m1-152v18m0 142v12m1 6v2m1-58v8m1-153v15m1-11v10m0 141v8m1-174v11m0 172v8m1-153v9m1-47v1m0 204v8m1-201v25m0 122v21m1-137v31m0 83v15m1-128v2m0 136v18m1-190v14m1 0v3m1-15v20m0 171v5m1-152v20m0 83v31m1-188v1m1 55v13m1-61v5m0 213v1m1-215v11m0 177v12m1-18v2m1-170v9m0 161v12m1-183v2m0 145v1m1-153v28m1 8v14m0 77v45m1-139v6m1-32v30m1 120v27m1-11v5m1-180v6m0 135v1m1-105v5m0 128v12m2-168v14m0 120v19m1-162v16m0 162v2m1-175v18m0 104v33m1-150v18m1 13v2m0 86v23m1-169v2m0 163v26m1-145v9m0 123v16m1-159v31m0 112v10m1-138v20m1-44v3m0 169v3m1-170v13m0 125v23m1-195v11m0 187v11m2-64v2m1-132v9m0 130v28m1-138v4m0 136v23m1-196v4m1-9v9m0 146v31m1-145v18m0 145v6m1-160v17m0 138v1m1-177v38m0 80v32m1-157v22m0 126v27m1-180v3m0 179v1m1-168v5m0 116v4m1-141v19m0 107v25m1-168v6m1 5v17m1 158v1m1-185v6m0 169v5m1 31v2m1-196v17m0 134v1m1-145v13m1-16v36m0 89v17m1-176v1m0 204v4m1-154v2m0 107v17m1-147v42m0 119v12m1-17v21m1-18v15m1-163v12m0 130v3m1-153v39m0 102v23m2-164v38m1-73v5m0 217v4m1-178v2m0 145v2m1-170v33m0 164v1m1-199v1m0 183v3m1-156v7m0 132v1m2-153v16m0 90v15m1-123v2m0 155v13m1-192v8m0 130v21m1-171v10m1 161v5m1-157v11m0 113v8m1-124v1m0 122v24m1-134v3m0 154v12m1-160v5m0 106v9m1-165v9m0 143v11m1 22v12m1-185v24m0 123v2m1-129v11m0 140v12m1 7v2m1-189v21m0 126v1m2-141v20m0 105v4m1-142v24m1 151v8m1-34v11m1-145v2m0 138v2m1-22v13m1-3v18m1 7v9m1-199v8m0 173v4m1-21v12m1-164v18m0 181v1m1-218v2m0 189v5m1-148v4m1-35v4m0 141v5m1-143v2m0 181v10m1-197v8m1 152v27m2-176v19m0 146v14m1-185v15m0 131v13m1-144v14m1-1v2m0 164v2m1-178v12m0 171v3m2-185v11m0 125v22m1-174v26m1-20v14m0 129v5m1-156v1m0 142v2m1-127v11m1-30v29m0 126v17m1-28v18m1-167v15m0 155v1m1-164v4m1-12v17m0 167v2m1 6v5m1-8v3m1-176v13m0 138v2m1-169v17m1 13v2m1-44v5m0 158v7m1-157v11m0 154v1m1-145v2m0 137v4m1-163v19m0 180v1m1-200v24m0 140v22m2-169v2m0 140v20m1-178v27m0 153v8m1-177v16m0 130v16m2-178v29m1-28v2m1 22v6m0 132v10m1-159v4m0 140v4m1 11v6m1 6v1m1-198v1m0 171v4m1-155v10m0 154v18m1-169v5m1-15v5m0 149v9m1-6v11m1-169v3m0 148v1m1-158v17m0 141v28m1-196v6m0 163v14m1-171v23m0 143v13m1-178v13m0 144v6m1-166v5m0 200v2m1-209v14m0 149v8m1-166v11m0 149v13m1-173v6m0 160v12m1-179v2m1 3v9m0 158v8m1-12v1m1-164v17m0 159v1m1-199v2m0 182v21m1-176v11m0 141v10m1-180v16m0 172v7m1-209v3m0 188v16m1-202v11m0 171v24m1-193v24m1 143v11m1-169v2m0 156v9m1-158v5m0 187v1m1-197v10m0 161v15m1-177v1m0 174v5m2-204v7m0 163v21m1-193v15m0 157v10m1-163v5m0 174v4m1-185v7m0 183v4m1-216v2m0 188v11m1 8v6m1-201v16m0 179v4m1-186v4m1-22v8m0 155v3m1-184v1m0 184v18m1-198v2m0 173v19m2-180v4m0 163v20m1-180v4m0 183v6m1-185v2m0 145v24m1-180v9m1-15v4m0 175v14m1-192v17m0 154v5m1-169v3m0 151v3m1-179v2m0 199v1m1-11v12m1-191v22m0 161v8m1-187v18m0 155v15m1-10v9m1-174v2m0 149v20m1-196v14m1-8v1m1 2v3m1-4v8m0 171v19m1-178v2m0 168v2m1-186v6m1 0v1m0 160v13m1-10v1m1-174v3m0 162v22m1-18v7m1-169v3m0 189v2m1-212v2m0 196v12m1-202v2m1 0v2m1 0v10m0 167v3m2-177v12m0 175v2m1-206v18m1-20v2m0 176v6m1-190v5m0 206v5m1-197v19m0 167v2m1-180v7m1-7v6m0 170v1m1-203v5m1 12v8m1-9v1m0 170v7m1-165v3m0 165v2m1-175v3m0 173v7m1-185v5m1-7v2m0 179v7m1-195v12m0 157v3m1-167v15m0 149v1m1-179v1m0 178v7m1-168v7m0 153v2m1-170v18m0 153v16m2-187v7m0 167v15m1-193v16m1-22v4m0 180v12m1-14v2m1-169v7m0 157v15m1-186v15m1-11v21m1-3v2m0 152v1m1-8v21m2-197v6m0 201v5m1-212v1m0 190v14m1-28v12m1-165v7m0 152v12m2-191v8m0 172v3m1-170v15m1-20v8m0 166v14m1-173v1m1-21v1m0 201v2m1-34v8m2-178v2m0 178v4m1-169v13m0 157v10m4-205v1m1-2v2m0 181v13m1-185v8m0 187v3m1-194v23m0 157v6m1-14v9m1-189v5m0 172v4m1-158v5m1-29v1m0 182v2m1-180v2m1 20v7m0 174v3m1-188v10m0 144v22m1-194v5m0 167v9m1-177v5m0 162v2m1-161v7m1 6v3m0 151v7m2-176v17m0 173v7m1-214v4m0 177v12m1-173v6m0 174v2m2-179v10m0 146v16m1-163v2m0 149v6m1-173v15m1-2v4m0 148v19m1-175v5m0 149v3m3 7v3m1-191v6m0 184v7m1-180v15m0 146v8m1-169v15m1-25v1m0 170v21m1-17v11m1-176v5m0 189v3m1-207v7m1 16v3m1-25v14m0 168v9m1-171v3m0 176v6m1-2v5m1-211v4m0 192v8m1-27v2m1 11v3m1-181v16m0 173v8m1-194v14m1-32v14m1 7v3m1-21v23m0 153v4m1-167v3m0 164v16m2-184v1m1 1v11m1-7v11m1-31v2m0 177v9m1-181v3m0 181v3m2-195v15m2-20v5m0 214v4m2-214v9m0 193v1m1 8v2m1-201v11m0 153v1m1-182v24m1-17v6m0 182v7m1-12v15m1-21v6m1-202v5m0 222v1m1-193v7m1 151v17m1-173v3m1-38v1m0 196v16m1-8v11m1-196v15m0 184v1m1-201v2m0 171v1m1-163v5m1-6v5m0 183v3m1-204v14m0 171v8m1-178v6m0 165v5m1-172v2m0 153v8m1-180v4m0 186v1m1-192v6m0 174v12m2-198v3m0 188v9m1-196v3m0 177v1m1-167v8m0 152v24m1-185v2m0 160v9m1-178v3m1 11v3m0 154v12m1-190v23m0 174v4m1-197v19m0 164v8m1-21v2m1 17v12m1-186v5m0 161v1m1 9v2m2-185v2m0 160v15m1-186v12m1-4v3m0 201v1m1-202v16m0 155v5m1-174v2m0 156v13m1-192v5m0 175v25m2-170v4m0 150v15m1-167v3m0 155v8m1-198v19m0 174v6m1-181v14m0 140v5m1-155v9m0 167v8m1-195v14m2-38v2m0 180v6m1 10v10m1-194v18m0 166v16m1-178v2m0 158v2m1-167v1m0 174v3m1-188v26m0 175v2m1-186v6m0 137v20m1-202v2m1 192v16m1-174v14m0 136v4m1-164v12m0 170v5m1-166v5m0 144v14m1-158v1m0 142v9m1-177v18m1-19v12m1 0v3m1-21v18m0 163v5m1-165v9m0 158v1m1-192v9m1-11v10m0 198v2m1-177v2m0 164v5m1-188v7m1 153v13m1-188v6m0 176v7m1-23v1m1-4v2m1-154v26m0 126v16m1-180v23m0 167v4m1-17v11m1-163v2m2-17v8m0 149v3m1-163v12m0 168v1m1-186v21m0 143v12m1-172v25m1-24v34m1-24v17m0 168v2m1-196v17m0 137v8m1-130v1m0 137v4m1-163v14m0 135v21m1-25v11m1-147v2m0 134v7m1-133v2m1-42v1m0 181v7m2 14v3m1-204v10m0 153v7m1-160v18m0 156v9m1-182v7m0 146v9m1-134v3m1-30v9m0 176v2m2-193v17m0 144v12m1-185v4m0 190v12m1-175v12m1 133v8m2-139v1m0 126v1m1 16v9m1-165v12m0 126v25m1-171v20m0 127v12m1-165v11m0 144v19m1-176v18m0 156v2m1-156v4m0 132v3m1-168v13m0 166v17m1-28v5m1-143v3m0 139v25m1-174v13m0 163v1m1-214v2m0 183v18m1-202v4m1 175v8m1-171v14m1 179v6m1-213v8m1 23v8m0 162v4m1-170v9m1 140v3m1-194v1m0 201v6m1-158v4m0 139v4m1-176v3m0 160v5m1-148v13m0 149v2m1-200v5m0 178v6m1-167v4m0 172v9m1-165v7m0 132v5m1-3v26m1-186v5m1-19v7m1 18v3m1 12v1m0 163v1m1-216v1m0 196v16m1-207v5m1 190v11m1-187v18m0 151v12m1-199v7m0 197v1m1-191v8m0 183v7m1-212v2m1 25v13m1 165v1m1-19v10m1-177v1m0 160v17m1-186v5m0 177v6m1-190v11m0 191v1m1-209v3m0 176v7m1-175v6m1-3v16m1-10v3m0 147v8m1-174v18m0 162v2m1-193v4m0 177v2m1-187v1m0 216v3m1-193v18m0 154v14m1-198v9m0 176v1m1-184v17m0 154v7m1-8v2m1-163v11m0 175v3m1-190v1m0 166v19m1-172v5m0 153v2m1-159v12m1-4v4m0 134v8m1-169v9m1-8v23m0 133v8m1-183v7m0 175v22m1-196v11m0 164v15m1-197v7m0 171v10m1-180v6m0 165v7m1 5v5m1-174v18m0 135v3m1-164v24m1-18v19m1-16v6m0 170v4m1-170v4m0 145v10m1-188v1m0 177v19m1-175v4m0 144v13m1-162v12m1-23v4m0 173v10m1-205v2m0 183v17m1-186v8m0 154v14m2-160v13m1-30v30m0 145v1m1-195v1m0 205v2m1-172v1m0 145v21m1-175v8m0 160v9m1-177v15m1 144v3m1-176v10m0 163v7m1-158v8m0 150v3m2-185v8m0 163v8m1 10v5m1-204v6m1 10v22m0 154v5m1-186v1m0 197v1m1-209v5m0 176v13m1-174v23m0 136v4m2-149v8m1-25v4m0 179v7m1-204v1m0 187v6m1-179v5m1 19v1m0 136v2m1-148v5m0 173v2m1-190v12m1 8v5m1-5v2m0 158v1m1-202v2m0 186v8m1-200v1m1 187v8m1-172v2m0 156v11m1-11v2m1-142v5m0 135v2m2-168v34m0 131v15m1-194v9m1 176v20m1-181v7m0 159v19m1-185v3m0 176v1m1-184v12m0 161v9m1-157v4m0 141v8m1-200v2m0 184v3m1-144v3m0 137v23m1-158v3m0 135v23m1-171v13m1-7v5m0 132v19m1 13v3m1-184v17m0 134v14m1 13v4m1-187v22m0 175v1m2-202v23m0 157v1m1-187v1m0 164v1m1-167v11m0 155v14m1-158v8m1-38v1m0 184v4m1-161v7m0 157v14m1-195v3m1-10v2m1 3v16m0 158v6m1-163v11m0 171v1m1-14v5m1-172v9m0 137v13m1-172v7m1-13v5m1-6v18m0 152v16m1-192v11m0 173v5m1-193v1m0 204v1m1-193v7m0 175v8m1-206v1m0 180v8m2 9v2m1-178v7m0 154v6m1-183v11m1-9v3m0 201v4m1-179v1m0 166v3m1-175v9m0 139v4m1-160v9m0 159v14m1-190v3m0 178v6m1-171v8m0 139v22m1-184v4m0 182v5m1-10v7m2-214v1m0 202v3m1-184v13m1 4v10m0 144v7m1-154v2m0 141v3m1-5v23m1-183v17m0 148v1m1-155v1m0 165v9m1-184v19m1-1v2m0 149v2m1-155v4m1-5v4m0 148v2m1-157v5m0 155v6m1-184v5m0 158v14m1-177v17m0 153v12m1-177v8m1-9v2m0 174v8m1 3v6m1-195v24m0 136v2m1-175v8m1 1v11m1-26v6m0 181v23m1-194v6m0 157v2m1-186v1m0 200v7m1-178v20m1-23v8m0 178v6m1-180v11m1-23v5m0 191v1m1-206v19m0 147v10m1-171v4m0 198v2m1-208v3m0 162v6m1-141v2m0 169v3m1-34v23m1-167v4m0 135v5m1-163v25m1-20v10m0 146v18m1-171v2m0 174v3m1-170v7m0 151v1m1-167v10m0 144v15m1 1v7m2-187v23m0 152v5m1-182v29m1-42v5m0 172v14m1-165v17m1-32v2m1 194v1m1-202v23m0 152v4m2-166v18m1-13v1m0 174v1m2-205v6m0 177v10m1-172v26m0 165v2m1-218v1m0 186v7m1-154v9m0 139v16m1-9v7m1-177v4m0 181v6m1-180v11m0 163v1m1-171v7m1-5v1m0 146v16m1-174v4m0 176v5m1-200v9m0 162v8m1-153v7m1 152v2m1 16v1m1-19v9m1-175v3m0 152v13m1-185v29m0 142v2m1-151v1m1 145v4m1 1v22m2-197v21m1 1v7m0 148v9m1-191v8m0 176v7m1-168v10m0 151v13m1-189v2m0 175v4m1-184v2m0 173v4m1 22v1m1-31v21m1-174v5m0 159v8m1-185v23m0 143v15m1-168v10m0 149v9m1-190v9m1 9v12m0 172v6m1-32v11m1-12v5m1-152v3m0 149v1m1-165v17m1-18v18m0 150v4m1-180v17m1-7v15m1-23v7m0 161v11m1-174v1m0 186v3m1-186v15m0 145v2m1-176v19m1-22v7m0 171v9m1-12v4m1-157v9m1 153v17m1-180v7m0 156v5m1-164v1m0 177v6m1-199v7m0 161v3m1-174v16m0 153v12m1-182v25m0 172v1m2-196v8m0 168v8m1-167v8m0 144v5m2-181v10m0 165v16m1-188v3m0 177v7m1-190v1m0 194v1m1-6v1m1-196v5m0 186v7m1-187v6m0 179v4m1-191v13m0 162v2m1-172v26m1-18v3m0 183v3m1-217v3m0 190v9m1-187v14m1 6v3m0 157v4m1-189v7m0 186v3m1-169v7m0 149v13m1-18v4m1-168v17m0 157v12m1-190v24m0 156v8m1-172v5m1-24v4m0 172v1m1-157v1m1-13v17m0 149v5m1-185v7m1-9v1m0 178v1m1-153v3m0 148v9m1-172v8m0 161v11m1-173v15m0 138v12m1-151v2m0 169v1m1-191v20m0 141v2m1-173v23m0 149v2m1-179v1m0 187v14m1-22v2m1-160v12m1-29v16m0 158v12m1-158v1m0 143v2m1-157v6m1-9v2m0 186v4m1-189v10m0 148v6m1-185v2m0 209v3m1-205v21m1-24v23m0 167v5m1-186v17m0 154v11m1-184v19m0 146v4m2-175v10m1-6v4m0 157v19m1 4v12m1-200v12m0 170v9m1-194v21m0 169v11m1-194v21m0 153v5m1-194v2m0 190v3m1-176v2m1 156v17m1-184v28m1-1v1m0 160v7m1-177v8m0 140v3m1-158v13m0 173v1m1-216v6m0 178v4m1-153v11m1 139v14m1-185v4m2 24v5m0 144v2m1-182v3m0 191v7m1-191v26m0 151v3m1-161v1m0 153v13m1-216v1m0 212v3m1-186v26m0 140v15m1-176v3m0 157v1m1-143v1m0 169v3m1-197v17m0 171v4m2-216v1m0 194v10m1-159v4m0 139v7m1-159v6m1-37v10m0 189v9m1-191v24m0 144v7m1-177v29m0 161v3m1-192v17m2 0v8m0 142v20m1-188v2m0 196v2m1-208v8m1 0v19m1-9v2m1-21v4m1 21v12m0 149v12m1-191v11m0 173v9m1-180v1m0 165v15m1-23v3m1 3v4m1-183v11m1 14v7m0 141v8m1-6v2m1-181v2m0 175v17m1-185v25m1-15v11m0 148v12m1-176v10m0 172v1m1-198v2m0 176v13m1-165v10m0 145v14m1-184v16m2 0v7m1-18v14m0 161v16m1-218v2m0 189v7m1-168v14m1 180v2m1-194v9m0 148v24m1-176v2m1-18v25m1-26v20m0 159v17m1-189v11m0 170v1m1-175v6m0 165v2m1-191v3m0 172v19m1-197v18m0 179v2m1-184v17m0 144v1m1-165v6m0 169v1m1-189v1m1 10v1m0 168v6m1 10v5m1-209v6m0 190v8m1-203v1m0 194v2m1-180v13m1-17v10m1 7v11m0 158v9m1-202v2m2 17v16m1 150v1m1-169v19m0 172v5m1-198v19m1-16v4m0 166v11m1-11v6m1-167v10m1-32v3m1 9v13m0 174v4m1-175v3m0 153v8m1-182v9m0 176v1m1-178v1m1 181v3m1-193v22m0 144v9m1-197v4m0 180v19m1-198v7m0 195v2m1-193v11m0 171v3m1-17v2m1-160v15m1-3v3m0 165v1m1-179v5m0 175v2m1-213v2m0 189v15m1-189v5m1-2v26m1 152v2m1-176v21m1-10v3m0 157v9m1-168v4m1 155v6m1-183v25m1 159v10m1-180v5m0 154v14m1-186v2m2 175v11m1-170v2m0 154v19m2-14v18m1-188v9m0 157v17m1-174v3m0 154v16m1-201v13m0 183v4m1-186v13m0 166v1m1-199v1m1 4v8m1-1v16m0 162v7m1-171v10m0 173v9m1-201v22m0 151v8m1-174v15m0 157v8m1-12v2m1-165v3m1-20v10m0 183v8m1-202v21m1 159v7m2-181v24m0 149v21m2-188v10m0 158v15m1-15v1m1-163v5m1-28v2m0 186v4m1-165v8m0 159v1m1-198v3m0 206v1m1-214v6m0 185v12m1-164v3m0 167v3m1-197v23m0 170v1m1-195v30m1-28v13m0 163v14m1-175v3m1-27v18m0 191v1m1-187v3m1-9v3m1-27v12m0 184v3m1-165v2m0 156v5m1-157v4m0 156v10m1-178v3m0 174v2m1-220v1m0 203v2m1-169v11m0 154v17m1-14v13m1-203v6m0 208v1m1-16v4m1-204v18m2 19v1m0 151v13m1-192v25m0 155v2m1-180v17m1 160v4m1-187v16m0 169v2m1-187v3m1 193v6m1-198v22m0 156v5m1-168v13m0 172v2m1-206v15m1-22v6m2 14v14m0 157v8m1-187v18m1-17v25m0 159v5m1-176v11m0 167v9m1 9v1m1-210v2m0 199v1m1-219v1m0 202v4m1-187v10m0 163v9m1-185v21m2-7v8m1-18v12m0 162v4m1 0v12m2-201v1m0 183v2m1-175v1m0 172v2m1-179v3m0 173v11m1-170v4m0 154v4m1-186v3m1 181v2m1-169v7m0 158v1m1-167v5m0 174v5m1-187v14m1-16v16m0 155v3m1-182v24m1-17v10m0 162v14m1-184v5m0 165v2m2-174v5m2-2v14m0 174v3m2-183v7m0 169v5m1-207v6m1 8v20m0 152v2m1-164v10m0 152v1m1-159v3m0 162v7m2-194v14m0 166v11m1-192v3m0 189v13m1-201v24m0 153v19m1-3v1m2-173v3m0 155v12m1-174v7m0 183v1m1-196v2m1-11v9m0 170v14m1-194v3m0 186v9m1-214v1m0 194v2m1-191v4m0 194v2m1-193v18m1-8v8m0 164v2m1-172v2m1-19v1m0 211v1m1-29v6m1 4v9m1-194v12m1-9v17m0 154v4m1 10v7m1-195v14m0 179v1m1-208v4m0 190v3m1-189v8m0 189v1m1-184v13m0 161v11m1-183v4m0 176v8m1-212v4m1-5v6m0 193v4m1-189v13m0 163v8m1-197v4m1-2v9m1-2v3m1 3v21m2-17v2m0 195v2m2-190v7m1 184v1m1-202v7m0 184v4m2-180v2m0 155v14m1-184v7m0 169v12m1-196v20m0 158v2m1-179v19m0 157v9m1-186v7m0 194v4m2-199v10m0 159v10m1-165v2m0 168v2m1-11v11m1-203v3m0 182v5m1-183v7m0 175v17m1-202v4m0 187v10m1-190v17m0 153v1m1-166v6m0 158v7m1-178v5m0 180v1m1-172v1m0 172v2m1-15v18m1-194v1m1 1v17m0 168v2m1-190v20m0 154v9m1 22v3m1-34v8m1-171v9m0 155v17m1-192v21m0 158v1m1-191v4m0 181v1m1-176v1m0 179v3m1-169v3m0 163v4m1-205v2m0 195v5m1-170v1m1-15v1m0 180v10m1-194v9m0 175v14m1-204v9m0 202v4m1-25v15m1-192v11m0 166v12m1-198v2m1-2v9m0 189v1m1-194v21m1-17v11m0 169v9m1-168v1m0 157v12m1-178v2m1-9v14m0 171v2m1-13v4m1-175v8m0 161v14m1-186v5m0 181v2m1-196v10m1-11v7m0 191v4m1-193v10m0 166v4m1-180v9m0 183v2m1-179v1m0 166v2m2-181v4m0 187v1m1-207v5m0 199v1m1-197v7m0 172v3m1-177v8m1-15v19m0 168v5m1-206v4m1 191v2m1-202v3m0 209v3m1-19v5m1-173v7m0 163v13m1-203v14m0 176v7m1-193v11m1 1v17m1-27v20m0 182v2m1-19v8m1-194v20m0 183v2m1-203v23m0 159v14m1-187v16m1-25v9m1-2v4m1 187v1m1-197v4m1 9v2m0 166v3m1-190v9m0 176v3m2-188v11m0 173v15m1-189v18m1-9v11m0 155v10m1-189v17m0 178v4m1-195v21m0 156v6m1-189v1m0 185v8m1-191v21m0 159v5m1-171v8m0 161v11m1-185v8m0 160v8m1-196v5m1 12v3m0 168v2m1-174v8m0 175v4m1-172v5m0 151v9m1-173v10m0 163v13m1-203v10m0 173v15m1-195v6m0 183v7m1-195v2m1 200v2m2-193v10m0 161v3m1-175v10m1-13v2m0 182v1m1-9v3m1-181v14m0 162v2m1-179v21m0 158v7m2-182v16m1-18v7m0 164v16m1-178v8m1-11v6m1-21v9m0 172v8m1 0v8m1-180v5m0 182v3m1-200v15m0 158v17m1-201v2m0 204v5m1-187v2m0 172v7m1-194v16m0 185v1m1-196v10m0 169v1m1-185v13m0 172v5m1-194v5m2-7v12m0 189v3m1-195v2m0 189v5m1-206v8m1-4v3m0 180v13m1-187v4m0 175v2m1-9v15m1-190v3m0 173v13m1-205v1m0 186v8m1-177v8m0 159v6m1-192v3m1 5v1m0 181v12m1-194v11m1-6v11m0 163v8m1-7v1m1-170v6m1-16v8m0 170v3m1-183v8m1-8v3m0 182v15m1-12v9m1-196v2m0 193v11m1-210v2m0 184v15m1-3v6m3-188v2m0 188v5m1-196v3m1-29v2m0 211v3m1-192v1m1-29v1m0 202v2m2-173v4m1-13v13m0 178v1m1-208v5m0 189v14m1-211v1m1 17v13m0 178v8m1-204v2m1 15v2m0 177v1m1-193v14m1 168v2m1 10v1m1-6v9m1-16v7m1 1v9m1-211v2m0 208v5m1-211v4m0 197v4m1-202v11m1-12v2m0 183v14m1 2v10m1-213v6m0 180v2m1-192v2m0 189v8m1-188v10m1 4v1m1 179v8m1-208v5m1 2v2m0 185v5m1 18v1m1-203v5m0 178v5m1-14v12m1-206v2m0 193v18m1-215v3m2 215v4m1-204v5m1-6v6m2 192v4m1-202v3m0 172v7m1-191v12m0 172v1m1-193v2m1 214v2m1-216v10m0 187v12m1-204v3m0 194v15m1-222v5m0 205v2m1-181v1m0 189v1m1-221v4m0 193v13m1-203v3m1-1v21m1 175v5m1-6v6m1-198v3m0 192v5m1-183v4m1 162v8m1-194v2m0 198v2m1-191v13m0 170v6m1-196v18m1-1v1m1-25v7m1 183v16m1-192v1m0 174v7m1-198v2m0 197v9m1-203v11m0 178v11m1 2v7m1-13v5m1-200v1m0 186v1m1-195v2m1-7v1m0 200v6m1-199v1m0 197v4m1-12v6m1-181v13m1-16v1m0 183v9m1-7v2m1-194v2m2-12v1m1 15v11m0 179v1m1-180v2m0 169v1m1-191v7m0 182v8m1-186v13m0 183v3m1-203v3m0 176v16m1-199v13m1-23v3m0 195v8m1-183v9m0 178v1m1 0v1m1-190v5m0 171v12m2-191v7m1 166v9m2-177v5m1-20v2m1-6v6m0 190v3m1-204v5m0 190v4m1-179v10m0 161v11m1-187v16m0 182v1m1-218v1m1 10v6m0 198v2m1-202v6m0 188v3m1-190v13m0 164v12m1-182v2m1-2v1m0 169v11m1-208v4m0 189v8m1 2v1m1-174v1m0 160v18m1-192v10m1-26v2m1 15v11m0 165v1m1-169v8m0 153v19m1-179v1m0 176v5m1-197v15m0 178v9m1-198v4m0 173v7m1-198v6m1 16v4m0 179v1m1 2v5m1-213v10m0 209v1m1-207v18m0 154v5m1-156v5m0 142v8m1-189v11m0 189v6m1-27v1m1-182v2m1 21v8m0 160v11m1-183v1m0 198v3m1-41v2m1-187v1m1 8v3m0 170v26m1-195v6m0 170v18m1-179v14m1-23v9m1 7v11m0 142v5m1-166v16m1-10v3m0 174v6m1-17v13m1-170v1m0 139v6m1-4v8m1-5v11m1-147v4m0 130v1m1-144v14m0 158v6m1-199v14m0 177v5m1-11v10m1-183v8m0 148v15m1-173v23m1-17v14m1-16v21m0 137v1m1-180v5m0 193v3m1-205v1m0 182v15m1-165v13m0 137v1m2-164v9m0 169v6m1-177v15m0 151v6m1-171v2m1-20v1m0 189v7m1-199v25m1-17v29m0 150v10m1-194v9m1 16v1m0 149v11m1-9v3m1-151v3m0 144v18m2-173v14m0 127v14m1-174v31m0 132v7m1 20v3m1-201v3m0 164v1m2-130v5m2-51v1m0 176v1m1-144v19m1-51v3m0 178v18m1-179v1m0 177v9m1-180v21m0 138v18m1-22v4m1-139v2m0 128v1m1-138v5m0 134v5m1-150v16m0 128v8m2-7v3m1-148v16m0 129v8m1-156v7m0 140v27m2-185v30m0 134v2m1-146v11m0 159v1m1-198v11m1 164v12m1-178v18m1-24v6m0 184v2m1-195v24m0 151v1m1-185v19m1-30v6m0 175v1m1-137v13m1-38v28m0 133v10m1-147v4m0 132v12m1-158v18m0 142v17m1-24v2m1 21v2m1-175v7m0 153v15m1-32v2m1-180v2m1 40v13m1-31v3m0 169v15m1-167v2m0 167v4m1-170v9m1-39v10m0 151v14m1-190v3m1 38v2m1-44v3m0 183v13m2-150v1m0 139v3m1-172v35m0 126v18m1-198v5m0 170v11m1-9v22m1-181v10m0 187v1m1-194v2m0 178v1m1-180v1m0 153v17m1-148v6m0 152v8m1-182v9m0 150v16m1-155v4m0 134v16m1-209v1m0 209v3m2-210v2m1 8v20m0 147v17m1-13v9m1-171v5m0 160v8m2-171v5m0 190v1m1-168v7m0 132v17m1-163v13m0 140v5m1-196v3m0 181v12m1 20v2m1-213v2m1-3v7m0 169v2m1-178v5m0 200v8m1-205v9m0 155v2m2-164v24m0 139v10m1 5v1m1-169v15m0 144v13m2-167v19m0 130v19m1-167v5m0 150v5m1-156v2m1-8v19m0 127v23m1-159v12m0 125v1m1-150v24m0 132v4m2-170v26m0 132v11m1-147v2m0 158v1m1-186v29m0 162v2m1-177v2m1-15v19m0 142v8m1-166v1m0 157v18m1 7v4m1-185v10m0 148v5m1-136v2m0 144v11m1-175v1m1 5v14m1-8v1m1 0v1m0 135v8m3-158v15m0 132v3m1-147v1m0 146v16m1-166v20m1-20v3m0 154v16m1-187v21m0 151v4m1-167v1m0 154v3m1 11v6m1-27v2m1 5v22m1-163v9m0 126v5m1-177v2m1 29v16m0 126v5m1 9v8m1-151v3m0 146v5m1-168v3m0 139v23m1-179v31m0 125v5m1-149v18m0 130v3m1-147v1m0 152v10m1-20v24m1-181v11m0 145v10m1-175v6m0 183v1m1-181v27m0 126v3m1-141v14m0 172v1m1-201v23m1-6v7m0 130v3m1-144v15m0 146v3m1-167v16m0 137v2m2-6v22m1-189v2m0 162v1m1 35v1m1-165v1m0 174v1m1-196v9m0 154v8m1-175v24m0 153v6m1-28v16m1-162v16m0 132v8m1-151v8m0 133v23m1-167v7m0 136v21m1-170v5m0 142v9m1-138v2m0 127v16m1-172v26m0 132v20m1-174v20m0 139v13m2-156v3m0 170v1m1-201v3m0 162v2m1-138v6m0 129v14m2-152v11m0 135v7m1-177v1m0 196v2m1-199v8m1 15v1m0 152v12m1-180v22m0 132v1m1 6v11m1-16v6m1-166v15m0 147v11m1-169v20m0 141v9m1-182v10m1-10v2m0 191v1m1-178v9m0 152v5m1-164v8m0 166v8m1-184v9m2-17v1m0 171v9m1-181v10m0 159v12m3-174v3m0 161v3m2-9v6m1-161v2m0 154v3m2-152v1m0 142v2m2-139v1m0 129v1m1-128v2m1 2v1m1 2v1m0 113v2m1-114v2m0 105v3m1-7v3m1-7v2m2-89v2m1 1v1m1 71v2m3-62v1m5 38v1m1-26v1m1 1v1" stroke="url(#gL)" stroke-opacity="0.5" stroke-width="1" fill="none"/>
<path d="M35.5 247v2m3-2v1m4 61v2m2-65v7m0 53v5m4-2v3m3-66v4m2-5v9m1 56v3m5-5v6m6-69v2m3 65v2m1-2v2m1-1v1m1-69v2m6 61v7m2-10v10m2-8v8m2-6v6m4-7v8m1-9v9m3-69v2m4-1v5m1-5v7m3 54v8m4-10v11m2-69v3m1-3v8m2 57v4m1-69v4m0 60v5m1-69v9m2-9v2m1-2v1m8 63v2m1-67v5m0 55v7m3-1v1m6-6v8m1-75v8m9-15v4m1 76v5m4-89v5m2 77v9m1-12v12m1-94v5m1-6v2m4-5v7m1-7v5m1-6v7m3-9v3m0 98v3m4-5v6m3-105v6m4-6v16m0 83v8m4-108v7m3 98v5m23-116v7m2-8v16m0 109v2m3-4v5m9-129v15m0 104v15m1-16v17m3-135v15m0 114v7m3-4v6m8-139v21m0 109v13m5-143v1m6 129v11m2-141v14m1 115v11m3-4v3m1-5v5m5-17v17m4-14v14m1-15v15m10-14v16m13-144v1m2 123v21m3-1v1m2-146v7m5-7v22m0 111v12m2-17v17m1-1v1m1-145v10m5 130v4m1-1v1m1-144v18m1-18v12m5-12v17m5-16v1m7 1v3m1-3v17m4-16v3m6-3v16m4-17v3m4 135v5m2-8v8m2-144v2m3 136v7m6-12v12m3-145v9m4 115v22m1-16v16m14-18v21m1-17v17m7-148v9m4-10v3m0 138v7m3-149v15m0 124v10m4-1v1m13-152v12m7 134v4m4-3v2m4-12v10m2-14v13m1-16v16m8-132v9m4-8v9m1 112v8m5-1v1m1-128v1m3-2v12m2-12v8m1-8v4m2-5v12m1-12v11m2 102v15m1-128v15m7 99v12m3-13v12m2-18v18m1-121v14m1-13v2m0 103v14m3-16v16m1-119v16m1-15v3m1 114v1m1-118v16m5 91v12m4-2v3m1-122v12m1 98v13m3-8v9m4-8v9m2 0v1m1-9v9m2-4v4m1-129v17m1-17v6m2 107v17m5-130v16m1-16v12m5 113v5m9-6v6m2-3v3m9-128v7m0 117v4m4-11v11m6-129v11m1 109v9m7-8v8m2-129v9m2-9v10m0 117v2m5-130v9m2-10v7m5-8v16m2 109v8m1-12v12m1-14v14m3-3v3m6-11v11m1-133v8m2-8v18m10 111v4m3-6v6m2-128v7m3-7v6m1 121v1m3-7v8m2-9v9m1-129v3m2 117v9m4-129v5m3 103v22m4-14v14m1-18v19m6-132v1m2-1v1m3 113v18m3-134v8m6 123v2m3-5v5m5-138v11m7-11v18m14 116v1m1-14v14m1-132v3m6-3v5m1-5v17m1 106v9m2-8v9m1-133v15m2-14v2m2 123v8m1-11v12m5-1v2m1-134v15m17-17v1m2 127v8m3-139v4m0 127v8m2-139v19m1 102v17m1-139v2m1-2v19m3 116v4m6-140v7m6 124v10m1-141v8m0 127v7m1-142v14m0 108v20m10-19v20m6-143v2m6 126v15m2-17v17m3-139v3m2-2v17m0 111v10m3-137v3m0 113v20m1-136v8m4 119v9m1-136v10m1-10v7m0 116v13m7-137v8m5-9v14m1 108v16m9-11v11m1-139v5m1 120v14m4-5v5m5-9v9m8-17v17m7-4v4m1-21v21m1-137v11m5 123v4m1-21v21m1-10v10m6-139v11m1-11v4m4-5v14m1-14v6m1 131v4m2-141v15m3 114v12m1-141v4m1 125v12m3-8v8m1-142v9m1 121v12m1-4v4m1-11v11m4-10v10m2-11v11m1-143v12m6-13v7m2-7v3m1 139v2m2-20v20m2-6v6m2-4v3m1-142v5m1 129v8m1-141v16m5 123v2m9-18v18m1-7v7m1-140v6m1 132v2m2-140v13m4-14v15m3 126v3m1-145v15m0 122v8m1-12v13m1-147v11m0 118v18m3-21v22m3-149v14m1-14v10m5 131v9m9-2v2m2-148v17m1-16v9m1 131v8m1-148v19m2 106v23m1-4v4m2-147v6m5-6v1m6 143v3m3-147v6m1-6v3m2 133v12m2-148v2m2-3v17m1-17v19m1 126v5m2-23v23m3-150v1m0 146v3m4-14v14m2-24v24m1-17v17m1-11v11m3-152v18m2-19v2m1-2v12m0 134v6m2-11v11m2-153v8m5 133v12m6-155v4m2-3v8m10 141v4m6-151v16m3 128v7m1-12v12m1-151v7m6-7v12m7 118v22m1-153v11m2 118v24m3-153v17m2 135v1m2-153v12m1-12v10m4 121v22m3-154v19m1-19v12m8 126v13m2-152v18m2 120v13m4-152v17m5-17v18m2-18v16m2-16v9m0 143v1m4-153v16m4-16v3m3-3v17m3 119v20m1-156v13m0 135v8m8-21v21m1-9v9m3-156v9m0 126v21m3-156v11m1-11v14m0 135v6m1-17v17m1-18v18m1-155v7m0 138v10m1-155v19m2-19v8m3-8v5m1 138v11m2-154v14m2-14v8m1-8v10m1 120v24m2-154v16m2 134v4m1-16v16m4-23v22m6-151v6m7 125v19m2-14v14m2-18v18m1-4v5m1-153v3m2 141v9m1-23v23m13-17v17m3-158v2m5-3v7m10 135v19m2-11v11m2-14v14m1-163v19m7-19v1m3-1v22m2-22v5m7-5v10m0 133v19m2-162v10m0 149v3m2-24v24m3-162v15m4-15v10m4-10v6m3-6v19m3 127v16m3-161v1m2 154v7m7-8v8m2-9v9m3-161v2m2-2v19m1 142v1m1-162v16m1-16v17m2-16v16m0 139v6m1-7v7m1-161v19m0 121v21m6-7v7m2-19v20m3-15v15m1-5v5m1-23v23m2-12v12m1-161v8m2 139v13m8-18v18m6-23v22m2-160v1m0 152v7m6-160v9m3-9v7m2 136v11m2-151v14m3-12v9m3 117v19m3-141v14m4-11v9m2-7v1m5 4v10m1 96v17m3-122v5m9-5v12m1-12v4m1 113v8m4-5v5m1-4v4m6-125v9m3-8v5m0 110v8m1-123v8m6 96v18m4-119v4m2 114v1m7-119v12m4 100v7m1-119v2m0 115v2m2-119v3m1 99v17m3-9v9m1-5v5m2-18v18m3-19v19m5-120v9m1 109v2m1-12v12m1-120v11m2 96v13m4-120v2m0 113v5m2-120v7m3 96v17m1-4v4m6-6v6m1-121v16m1-16v12m1 92v17m2-121v6m1-6v5m5-5v5m2 102v14m1-19v19m4-2v2m1-12v13m4-19v19m5-123v10m0 94v19m2-18v18m1-10v10m1-123v12m0 107v4m2-11v11m4-124v2m1-2v14m1-14v4m2-5v11m3-11v8m2-9v12m4 108v4m1-124v6m1 112v6m1-124v7m0 106v11m2-124v13m1-13v12m1-12v8m0 103v13m1-11v11m4-4v5m3 0v1m1-125v10m2 102v14m1-126v6m7-5v14m2 105v7m8-15v16m9-136v20m12-28v13m4 116v9m8-103v3m11 46v1m2-4v1m2-13v1m0 8v1" stroke="#3e3e3e" stroke-opacity="0.55" stroke-width="1" fill="none"/>
<rect x="1566" y="279.5" width="20" height="1" fill="#5e9cf5" opacity="0.8"/>
</g>
<g id="wgR">
<path d="M29 556 30 556 31 556 32 556 33 556 34 556 35 556 36 556 37 556 38 556 39 556 40 556 41 556 42 555 43 555 44 555 45 555 46 555 47 555 48 555 49 555 50 555 51 555 52 555 53 555 54 555 55 555 56 555 57 555 58 555 59 555 60 555 61 556 62 556 63 556 64 556 65 557 66 557 67 557 68 558 69 558 70 558 71 558 72 559 73 559 74 559 75 559 76 559 77 559 78 560 79 560 80 559 81 559 82 559 83 559 84 559 85 558 86 558 87 558 88 557 89 557 90 557 91 556 92 556 93 555 94 555 95 555 96 554 97 554 98 554 99 553 100 553 101 553 102 553 103 553 104 552 105 552 106 553 107 553 108 553 109 553 110 553 111 554 112 554 113 554 114 555 115 555 116 555 117 556 118 556 119 556 120 557 121 557 122 557 123 558 124 558 125 558 126 558 127 558 128 558 129 558 130 558 131 557 132 557 133 557 134 556 135 556 136 555 137 555 138 554 139 554 140 553 141 553 142 552 143 552 144 551 145 551 146 550 147 550 148 549 149 549 150 548 151 548 152 548 153 547 154 547 155 547 156 547 157 546 158 546 159 546 160 546 161 546 162 546 163 546 164 546 165 546 166 546 167 546 168 546 169 546 170 546 171 546 172 546 173 546 174 546 175 546 176 546 177 547 178 546 179 546 180 546 181 546 182 546 183 546 184 545 185 545 186 545 187 544 188 544 189 544 190 543 191 543 192 542 193 542 194 541 195 541 196 541 197 540 198 540 199 540 200 539 201 539 202 539 203 539 204 539 205 539 206 539 207 539 208 539 209 539 210 539 211 539 212 539 213 539 214 539 215 540 216 540 217 540 218 540 219 540 220 541 221 541 222 541 223 541 224 541 225 541 226 541 227 541 228 541 229 541 230 541 231 541 232 541 233 540 234 540 235 540 236 540 237 539 238 539 239 539 240 538 241 538 242 537 243 537 244 537 245 536 246 536 247 536 248 535 249 535 250 535 251 535 252 534 253 534 254 534 255 534 256 534 257 534 258 534 259 534 260 534 261 533 262 533 263 533 264 533 265 533 266 533 267 533 268 533 269 533 270 533 271 532 272 532 273 532 274 532 275 532 276 532 277 531 278 531 279 531 280 531 281 530 282 530 283 530 284 530 285 529 286 529 287 529 288 529 289 529 290 528 291 528 292 528 293 528 294 527 295 527 296 527 297 527 298 526 299 526 300 526 301 526 302 526 303 526 304 526 305 526 306 526 307 526 308 526 309 526 310 526 311 526 312 526 313 527 314 527 315 527 316 527 317 527 318 527 319 528 320 528 321 528 322 528 323 528 324 528 325 528 326 528 327 528 328 528 329 528 330 528 331 528 332 528 333 528 334 528 335 528 336 528 337 528 338 527 339 527 340 527 341 527 342 527 343 526 344 526 345 526 346 526 347 526 348 526 349 525 350 525 351 525 352 525 353 525 354 525 355 525 356 525 357 525 358 525 359 525 360 525 361 525 362 525 363 525 364 525 365 525 366 525 367 525 368 524 369 524 370 524 371 524 372 524 373 524 374 524 375 524 376 524 377 524 378 524 379 524 380 524 381 524 382 524 383 525 384 525 385 525 386 525 387 526 388 526 389 527 390 527 391 527 392 528 393 528 394 529 395 529 396 529 397 530 398 530 399 530 400 531 401 531 402 531 403 531 404 531 405 531 406 531 407 531 408 531 409 531 410 531 411 530 412 530 413 530 414 530 415 530 416 530 417 529 418 529 419 529 420 529 421 529 422 528 423 528 424 528 425 528 426 528 427 528 428 528 429 528 430 528 431 528 432 528 433 528 434 527 435 527 436 527 437 527 438 527 439 528 440 528 441 529 442 529 443 529 444 530 445 530 446 531 447 531 448 532 449 532 450 532 451 533 452 534 453 534 454 535 455 535 456 536 457 537 458 537 459 538 460 539 461 539 462 539 463 539 464 539 465 539 466 539 467 539 468 539 469 539 470 540 471 540 472 540 473 540 474 540 475 540 476 540 477 540 478 540 479 540 480 540 481 540 482 540 483 540 484 540 485 540 486 541 487 541 488 541 489 541 490 541 491 541 492 541 493 541 494 542 495 542 496 542 497 542 498 542 499 542 500 542 501 542 502 542 503 542 504 542 505 542 506 542 507 542 508 543 509 543 510 543 511 543 512 543 513 543 514 543 515 543 516 543 517 543 518 543 519 543 520 543 521 543 522 543 523 543 524 543 525 543 526 544 527 544 528 544 529 544 530 544 531 543 532 543 533 543 534 543 535 543 536 543 537 542 538 542 539 542 540 541 541 541 542 541 543 541 544 540 545 540 546 540 547 539 548 539 549 539 550 539 551 539 552 538 553 538 554 538 555 538 556 539 557 539 558 539 559 539 560 539 561 540 562 540 563 540 564 541 565 541 566 542 567 542 568 542 569 543 570 543 571 544 572 544 573 544 574 545 575 545 576 545 577 545 578 545 579 545 580 545 581 545 582 545 583 545 584 545 585 545 586 544 587 544 588 544 589 543 590 543 591 543 592 542 593 542 594 542 595 542 596 541 597 541 598 541 599 540 600 540 601 540 602 540 603 540 604 540 605 540 606 540 607 540 608 540 609 540 610 540 611 540 612 540 613 540 614 540 615 540 616 540 617 540 618 540 619 539 620 539 621 539 622 539 623 539 624 539 625 539 626 539 627 539 628 539 629 539 630 539 631 539 632 539 633 540 634 540 635 540 636 540 637 541 638 541 639 541 640 542 641 542 642 542 643 542 644 543 645 543 646 543 647 544 648 544 649 544 650 544 651 545 652 545 653 545 654 545 655 545 656 545 657 545 658 545 659 545 660 545 661 544 662 544 663 544 664 544 665 544 666 544 667 544 668 544 669 544 670 544 671 544 672 544 673 544 674 544 675 543 676 543 677 543 678 543 679 543 680 543 681 543 682 543 683 543 684 543 685 543 686 543 687 543 688 543 689 543 690 543 691 543 692 543 693 543 694 543 695 544 696 544 697 544 698 544 699 544 700 544 701 544 702 544 703 544 704 544 705 544 706 544 707 543 708 543 709 543 710 543 711 543 712 543 713 543 714 543 715 543 716 543 717 543 718 542 719 542 720 542 721 542 722 542 723 542 724 542 725 542 726 542 727 542 728 542 729 542 730 542 731 542 732 542 733 542 734 542 735 542 736 542 737 542 738 542 739 542 740 542 741 542 742 542 743 542 744 543 745 543 746 543 747 543 748 543 749 543 750 543 751 543 752 543 753 543 754 543 755 543 756 543 757 543 758 543 759 543 760 542 761 542 762 542 763 542 764 542 765 541 766 541 767 541 768 541 769 540 770 540 771 540 772 540 773 539 774 539 775 539 776 539 777 539 778 539 779 539 780 539 781 539 782 539 783 539 784 539 785 539 786 539 787 539 788 539 789 539 790 539 791 539 792 539 793 539 794 539 795 539 796 539 797 539 798 539 799 539 800 539 801 539 802 539 803 539 804 539 805 539 806 539 807 539 808 539 809 539 810 539 811 540 812 540 813 540 814 540 815 541 816 541 817 541 818 541 819 542 820 542 821 542 822 543 823 543 824 543 825 543 826 543 827 543 828 543 829 543 830 543 831 543 832 543 833 543 834 543 835 543 836 543 837 542 838 542 839 542 840 542 841 541 842 541 843 541 844 540 845 540 846 540 847 540 848 540 849 539 850 539 851 539 852 539 853 539 854 539 855 539 856 539 857 539 858 539 859 540 860 540 861 540 862 540 863 541 864 541 865 542 866 542 867 542 868 543 869 543 870 543 871 544 872 544 873 544 874 545 875 545 876 545 877 545 878 545 879 545 880 545 881 545 882 545 883 545 884 545 885 545 886 545 887 545 888 545 889 545 890 545 891 545 892 545 893 545 894 545 895 545 896 545 897 545 898 545 899 545 900 545 901 545 902 545 903 545 904 545 905 545 906 545 907 545 908 545 909 545 910 545 911 544 912 544 913 544 914 544 915 543 916 543 917 543 918 543 919 542 920 542 921 542 922 542 923 541 924 541 925 541 926 541 927 541 928 541 929 541 930 541 931 541 932 541 933 541 934 541 935 541 936 540 937 540 938 540 939 540 940 540 941 540 942 540 943 540 944 540 945 540 946 540 947 540 948 540 949 540 950 540 951 540 952 540 953 540 954 540 955 540 956 540 957 540 958 540 959 540 960 540 961 540 962 540 963 540 964 540 965 540 966 540 967 540 968 540 969 540 970 539 971 539 972 539 973 539 974 539 975 539 976 539 977 539 978 539 979 539 980 539 981 539 982 539 983 539 984 539 985 539 986 539 987 539 988 539 989 539 990 539 991 539 992 539 993 539 994 539 995 538 996 538 997 538 998 538 999 538 1000 538 1001 538 1002 538 1003 538 1004 538 1005 538 1006 538 1007 538 1008 538 1009 538 1010 538 1011 538 1012 538 1013 538 1014 538 1015 538 1016 538 1017 538 1018 538 1019 538 1020 539 1021 539 1022 539 1023 539 1024 539 1025 539 1026 539 1027 539 1028 539 1029 539 1030 539 1031 539 1032 539 1033 539 1034 539 1035 539 1036 539 1037 540 1038 540 1039 540 1040 540 1041 541 1042 541 1043 541 1044 541 1045 542 1046 542 1047 542 1048 542 1049 543 1050 543 1051 543 1052 543 1053 543 1054 543 1055 543 1056 543 1057 543 1058 543 1059 542 1060 542 1061 542 1062 542 1063 542 1064 541 1065 541 1066 541 1067 541 1068 540 1069 540 1070 540 1071 540 1072 539 1073 539 1074 539 1075 539 1076 539 1077 539 1078 539 1079 539 1080 539 1081 539 1082 539 1083 538 1084 538 1085 538 1086 538 1087 538 1088 538 1089 538 1090 538 1091 538 1092 538 1093 538 1094 537 1095 537 1096 537 1097 537 1098 537 1099 537 1100 537 1101 537 1102 537 1103 537 1104 537 1105 537 1106 537 1107 537 1108 537 1109 537 1110 537 1111 537 1112 537 1113 537 1114 537 1115 536 1116 536 1117 536 1118 536 1119 536 1120 536 1121 536 1122 536 1123 536 1124 535 1125 535 1126 535 1127 535 1128 534 1129 534 1130 533 1131 533 1132 533 1133 533 1134 533 1135 533 1136 533 1137 532 1138 532 1139 532 1140 532 1141 532 1142 531 1143 531 1144 531 1145 531 1146 531 1147 530 1148 530 1149 530 1150 530 1151 530 1152 530 1153 530 1154 530 1155 530 1156 530 1157 530 1158 530 1159 530 1160 530 1161 530 1162 530 1163 531 1164 531 1165 531 1166 531 1167 531 1168 531 1169 531 1170 532 1171 532 1172 532 1173 532 1174 532 1175 532 1176 532 1177 532 1178 532 1179 532 1180 532 1181 532 1182 532 1183 532 1184 532 1185 532 1186 532 1187 532 1188 532 1189 532 1190 532 1191 532 1192 532 1193 532 1194 532 1195 532 1196 532 1197 532 1198 532 1199 532 1200 532 1201 532 1202 532 1203 532 1204 532 1205 532 1206 532 1207 532 1208 532 1209 532 1210 532 1211 531 1212 531 1213 531 1214 531 1215 531 1216 531 1217 531 1218 530 1219 530 1220 530 1221 530 1222 530 1223 530 1224 529 1225 529 1226 529 1227 529 1228 529 1229 529 1230 529 1231 529 1232 529 1233 529 1234 529 1235 529 1236 529 1237 529 1238 529 1239 528 1240 528 1241 528 1242 528 1243 528 1244 528 1245 528 1246 528 1247 528 1248 528 1249 528 1250 527 1251 527 1252 527 1253 527 1254 527 1255 527 1256 527 1257 527 1258 527 1259 527 1260 527 1261 527 1262 527 1263 527 1264 526 1265 526 1266 526 1267 526 1268 526 1269 526 1270 525 1271 525 1272 525 1273 525 1274 525 1275 525 1276 525 1277 525 1278 525 1279 525 1280 525 1281 525 1282 525 1283 525 1284 525 1285 526 1286 526 1287 526 1288 527 1289 527 1290 527 1291 528 1292 528 1293 528 1294 529 1295 529 1296 530 1297 530 1298 530 1299 530 1300 531 1301 531 1302 531 1303 531 1304 531 1305 531 1306 531 1307 531 1308 531 1309 531 1310 531 1311 530 1312 530 1313 530 1314 530 1315 530 1316 530 1317 529 1318 529 1319 529 1320 529 1321 530 1322 530 1323 531 1324 532 1325 533 1326 534 1327 535 1328 536 1329 537 1330 537 1331 538 1332 539 1333 540 1334 541 1335 542 1336 542 1337 543 1338 544 1339 545 1340 545 1341 545 1342 545 1343 545 1344 544 1345 544 1346 544 1347 544 1348 544 1349 543 1350 543 1351 543 1352 543 1353 543 1354 543 1355 543 1356 543 1357 543 1358 543 1359 543 1360 543 1361 543 1362 543 1363 543 1364 544 1365 544 1366 544 1367 544 1368 544 1369 544 1370 544 1371 544 1372 544 1373 544 1374 544 1375 545 1376 545 1377 545 1378 545 1379 545 1380 545 1381 545 1382 545 1383 545 1384 545 1385 545 1386 545 1387 545 1388 545 1389 545 1390 545 1391 545 1392 546 1393 546 1394 546 1395 546 1396 546 1397 546 1398 546 1399 546 1400 546 1401 546 1402 546 1403 546 1404 546 1405 546 1406 546 1407 546 1408 547 1409 547 1410 547 1411 547 1412 547 1413 547 1414 547 1415 547 1416 547 1417 548 1418 548 1419 548 1420 548 1421 548 1422 548 1423 548 1424 548 1425 548 1426 548 1427 549 1428 549 1429 549 1430 549 1431 548 1432 548 1433 548 1434 548 1435 548 1436 548 1437 548 1438 548 1439 547 1440 547 1441 547 1442 547 1443 547 1444 546 1445 546 1446 546 1447 546 1448 546 1449 546 1450 546 1451 545 1452 545 1453 545 1454 545 1455 545 1456 545 1457 545 1458 546 1459 546 1460 546 1461 546 1462 546 1463 546 1464 546 1465 546 1466 547 1467 547 1468 547 1469 547 1470 547 1471 547 1472 548 1473 548 1474 548 1475 548 1476 548 1477 548 1478 548 1479 548 1480 548 1481 548 1482 548 1483 548 1484 548 1485 548 1486 548 1487 547 1488 547 1489 547 1490 547 1491 547 1492 546 1493 546 1494 546 1495 546 1496 546 1497 546 1498 545 1499 545 1500 545 1501 545 1502 545 1503 545 1504 545 1505 545 1506 545 1507 545 1508 545 1509 545 1510 545 1511 545 1512 545 1513 545 1514 545 1515 545 1516 545 1517 545 1518 543 1519 541 1520 539 1521 537 1522 535 1523 534 1524 533 1525 532 1526 531 1527 530 1528 530 1529 529 1530 529 1531 530 1532 530 1533 531 1534 531 1535 534 1536 537 1537 540 1538 542 1539 545 1540 548 1541 551 1542 554 1543 557 1544 560 1545 563 1546 566 1547 569 1548 572 1549 574 1550 577 1551 580 1552 582 1553 585 1554 587 1555 589 1556 591 1557 593 1558 595 1559 597 1560 598 1561 600 1562 601 1563 602 1564 603 1565 603 1566 604 1567 604 1568 604 1569 604 1570 604 1571 604 1572 604 1573 604 1574 604 1575 604 1576 604 1577 604 1578 604 1579 604 1580 604 1581 604 1582 604 1583 604 1584 604 1585 604 1586 604 1587 604 1586 604 1585 604 1584 604 1583 604 1582 604 1581 604 1580 604 1579 604 1578 604 1577 604 1576 604 1575 604 1574 604 1573 604 1572 604 1571 604 1570 604 1569 604 1568 604 1567 604 1566 605 1565 605 1564 606 1563 607 1562 609 1561 610 1560 611 1559 613 1558 615 1557 617 1556 619 1555 621 1554 624 1553 626 1552 629 1551 631 1550 634 1549 637 1548 640 1547 643 1546 646 1545 649 1544 652 1543 655 1542 658 1541 661 1540 664 1539 667 1538 670 1537 672 1536 675 1535 678 1534 679 1533 679 1532 680 1531 680 1530 680 1529 680 1528 679 1527 679 1526 678 1525 677 1524 676 1523 674 1522 673 1521 671 1520 669 1519 667 1518 665 1517 665 1516 665 1515 665 1514 665 1513 665 1512 665 1511 665 1510 665 1509 665 1508 665 1507 665 1506 665 1505 665 1504 665 1503 665 1502 665 1501 665 1500 665 1499 665 1498 665 1497 665 1496 665 1495 665 1494 665 1493 664 1492 664 1491 664 1490 664 1489 664 1488 664 1487 664 1486 664 1485 664 1484 664 1483 664 1482 664 1481 664 1480 664 1479 664 1478 664 1477 664 1476 664 1475 664 1474 664 1473 664 1472 665 1471 665 1470 665 1469 665 1468 665 1467 665 1466 665 1465 665 1464 665 1463 666 1462 666 1461 666 1460 666 1459 666 1458 666 1457 666 1456 666 1455 666 1454 666 1453 666 1452 666 1451 666 1450 666 1449 666 1448 666 1447 666 1446 667 1445 667 1444 667 1443 667 1442 667 1441 667 1440 667 1439 667 1438 667 1437 668 1436 668 1435 668 1434 668 1433 668 1432 668 1431 668 1430 668 1429 668 1428 668 1427 668 1426 668 1425 668 1424 667 1423 667 1422 667 1421 667 1420 667 1419 666 1418 666 1417 666 1416 666 1415 666 1414 666 1413 665 1412 665 1411 665 1410 665 1409 665 1408 665 1407 665 1406 664 1405 664 1404 664 1403 664 1402 665 1401 665 1400 665 1399 665 1398 665 1397 665 1396 665 1395 665 1394 665 1393 665 1392 665 1391 666 1390 666 1389 666 1388 666 1387 666 1386 666 1385 666 1384 666 1383 666 1382 666 1381 666 1380 666 1379 666 1378 666 1377 666 1376 666 1375 666 1374 666 1373 666 1372 666 1371 666 1370 666 1369 666 1368 666 1367 666 1366 666 1365 666 1364 666 1363 666 1362 666 1361 666 1360 666 1359 666 1358 666 1357 666 1356 666 1355 666 1354 666 1353 666 1352 666 1351 666 1350 666 1349 666 1348 666 1347 666 1346 666 1345 666 1344 666 1343 666 1342 666 1341 666 1340 667 1339 668 1338 669 1337 670 1336 671 1335 672 1334 673 1333 674 1332 675 1331 676 1330 677 1329 678 1328 679 1327 680 1326 681 1325 682 1324 683 1323 684 1322 684 1321 685 1320 686 1319 686 1318 686 1317 686 1316 686 1315 686 1314 686 1313 686 1312 686 1311 686 1310 686 1309 686 1308 686 1307 686 1306 686 1305 686 1304 686 1303 686 1302 686 1301 686 1300 686 1299 686 1298 686 1297 686 1296 685 1295 685 1294 685 1293 685 1292 685 1291 684 1290 684 1289 684 1288 684 1287 684 1286 684 1285 683 1284 683 1283 683 1282 683 1281 683 1280 683 1279 683 1278 683 1277 683 1276 683 1275 683 1274 683 1273 682 1272 682 1271 682 1270 682 1269 682 1268 682 1267 681 1266 681 1265 681 1264 681 1263 681 1262 681 1261 680 1260 680 1259 680 1258 680 1257 680 1256 680 1255 680 1254 680 1253 680 1252 680 1251 680 1250 680 1249 680 1248 680 1247 680 1246 680 1245 681 1244 681 1243 681 1242 681 1241 681 1240 681 1239 681 1238 681 1237 681 1236 681 1235 682 1234 682 1233 682 1232 682 1231 682 1230 682 1229 682 1228 682 1227 682 1226 682 1225 682 1224 682 1223 682 1222 683 1221 683 1220 683 1219 683 1218 684 1217 684 1216 684 1215 684 1214 685 1213 685 1212 685 1211 685 1210 685 1209 686 1208 686 1207 686 1206 686 1205 686 1204 686 1203 686 1202 686 1201 685 1200 685 1199 685 1198 685 1197 684 1196 684 1195 684 1194 683 1193 683 1192 682 1191 682 1190 682 1189 681 1188 681 1187 681 1186 680 1185 680 1184 680 1183 680 1182 680 1181 680 1180 680 1179 680 1178 680 1177 680 1176 680 1175 680 1174 680 1173 680 1172 680 1171 681 1170 681 1169 681 1168 681 1167 681 1166 681 1165 682 1164 682 1163 682 1162 682 1161 682 1160 682 1159 683 1158 683 1157 683 1156 683 1155 683 1154 683 1153 683 1152 683 1151 683 1150 683 1149 683 1148 683 1147 683 1146 683 1145 683 1144 683 1143 683 1142 683 1141 683 1140 683 1139 683 1138 683 1137 683 1136 683 1135 683 1134 683 1133 683 1132 683 1131 683 1130 683 1129 683 1128 683 1127 683 1126 683 1125 683 1124 683 1123 683 1122 683 1121 683 1120 683 1119 683 1118 683 1117 683 1116 683 1115 683 1114 683 1113 683 1112 683 1111 683 1110 683 1109 683 1108 683 1107 683 1106 683 1105 683 1104 683 1103 683 1102 683 1101 683 1100 683 1099 682 1098 682 1097 682 1096 682 1095 682 1094 682 1093 682 1092 682 1091 682 1090 682 1089 682 1088 682 1087 682 1086 682 1085 682 1084 682 1083 682 1082 682 1081 682 1080 682 1079 682 1078 682 1077 682 1076 682 1075 682 1074 682 1073 682 1072 682 1071 682 1070 682 1069 682 1068 682 1067 682 1066 682 1065 683 1064 683 1063 683 1062 683 1061 683 1060 683 1059 683 1058 683 1057 683 1056 683 1055 683 1054 683 1053 683 1052 683 1051 683 1050 683 1049 683 1048 683 1047 682 1046 682 1045 682 1044 682 1043 682 1042 682 1041 682 1040 682 1039 682 1038 682 1037 682 1036 682 1035 682 1034 682 1033 682 1032 682 1031 682 1030 682 1029 682 1028 682 1027 681 1026 681 1025 681 1024 681 1023 681 1022 681 1021 681 1020 681 1019 681 1018 681 1017 681 1016 681 1015 680 1014 680 1013 680 1012 680 1011 680 1010 680 1009 680 1008 680 1007 680 1006 680 1005 680 1004 680 1003 680 1002 680 1001 680 1000 680 999 680 998 681 997 681 996 681 995 681 994 682 993 682 992 682 991 683 990 683 989 683 988 683 987 684 986 684 985 684 984 684 983 684 982 685 981 685 980 685 979 685 978 685 977 684 976 684 975 684 974 684 973 684 972 683 971 683 970 683 969 683 968 682 967 682 966 682 965 681 964 681 963 681 962 681 961 680 960 680 959 680 958 680 957 680 956 680 955 680 954 680 953 680 952 680 951 680 950 680 949 679 948 679 947 679 946 679 945 679 944 679 943 679 942 679 941 679 940 679 939 679 938 679 937 679 936 679 935 679 934 679 933 679 932 679 931 679 930 679 929 679 928 679 927 679 926 679 925 679 924 680 923 680 922 680 921 681 920 681 919 681 918 682 917 682 916 683 915 683 914 683 913 684 912 684 911 684 910 685 909 685 908 685 907 685 906 685 905 685 904 685 903 685 902 685 901 685 900 685 899 685 898 684 897 684 896 684 895 683 894 683 893 683 892 682 891 682 890 682 889 681 888 681 887 681 886 680 885 680 884 680 883 680 882 680 881 680 880 680 879 680 878 680 877 680 876 680 875 680 874 680 873 680 872 680 871 681 870 681 869 681 868 681 867 681 866 681 865 682 864 682 863 682 862 682 861 682 860 682 859 683 858 683 857 683 856 683 855 683 854 683 853 683 852 683 851 683 850 683 849 683 848 683 847 683 846 683 845 683 844 683 843 683 842 683 841 683 840 683 839 683 838 683 837 683 836 683 835 683 834 683 833 683 832 683 831 683 830 683 829 683 828 683 827 683 826 683 825 683 824 683 823 683 822 682 821 682 820 682 819 682 818 681 817 681 816 681 815 681 814 681 813 680 812 680 811 680 810 680 809 680 808 680 807 680 806 679 805 679 804 679 803 680 802 680 801 680 800 680 799 680 798 680 797 680 796 680 795 681 794 681 793 681 792 681 791 681 790 682 789 682 788 682 787 682 786 682 785 682 784 682 783 683 782 683 781 683 780 683 779 683 778 683 777 683 776 683 775 682 774 682 773 682 772 682 771 682 770 682 769 682 768 682 767 681 766 681 765 681 764 681 763 681 762 681 761 681 760 681 759 681 758 680 757 680 756 680 755 680 754 680 753 680 752 680 751 680 750 680 749 680 748 680 747 681 746 681 745 681 744 681 743 681 742 681 741 681 740 681 739 681 738 681 737 681 736 681 735 681 734 681 733 681 732 681 731 681 730 681 729 681 728 681 727 681 726 681 725 681 724 681 723 681 722 681 721 681 720 681 719 682 718 682 717 682 716 682 715 682 714 682 713 682 712 682 711 682 710 682 709 683 708 683 707 683 706 683 705 683 704 683 703 683 702 683 701 683 700 683 699 683 698 683 697 683 696 683 695 683 694 683 693 683 692 683 691 684 690 684 689 684 688 684 687 684 686 684 685 684 684 684 683 684 682 684 681 684 680 684 679 684 678 684 677 684 676 684 675 684 674 684 673 683 672 683 671 683 670 683 669 683 668 682 667 682 666 682 665 682 664 681 663 681 662 681 661 681 660 681 659 681 658 681 657 680 656 680 655 680 654 680 653 680 652 681 651 681 650 681 649 681 648 681 647 681 646 682 645 682 644 682 643 682 642 683 641 683 640 683 639 683 638 684 637 684 636 684 635 684 634 684 633 685 632 685 631 685 630 685 629 685 628 685 627 685 626 685 625 685 624 685 623 685 622 685 621 686 620 686 619 686 618 686 617 686 616 686 615 687 614 687 613 687 612 687 611 687 610 687 609 687 608 687 607 688 606 688 605 688 604 688 603 687 602 687 601 687 600 687 599 687 598 686 597 686 596 686 595 685 594 685 593 684 592 684 591 684 590 683 589 683 588 682 587 682 586 682 585 681 584 681 583 681 582 681 581 681 580 681 579 681 578 681 577 681 576 681 575 681 574 681 573 681 572 681 571 682 570 682 569 682 568 682 567 682 566 683 565 683 564 683 563 683 562 683 561 683 560 683 559 684 558 684 557 684 556 684 555 684 554 684 553 684 552 684 551 684 550 683 549 683 548 683 547 683 546 683 545 683 544 683 543 683 542 683 541 683 540 683 539 683 538 683 537 683 536 683 535 682 534 682 533 682 532 682 531 682 530 682 529 682 528 682 527 682 526 682 525 682 524 682 523 682 522 682 521 682 520 682 519 682 518 681 517 681 516 681 515 681 514 681 513 681 512 681 511 681 510 681 509 681 508 681 507 680 506 680 505 680 504 680 503 680 502 681 501 681 500 681 499 681 498 681 497 682 496 682 495 682 494 682 493 683 492 683 491 683 490 683 489 684 488 684 487 684 486 684 485 685 484 685 483 685 482 685 481 685 480 685 479 685 478 685 477 685 476 685 475 685 474 685 473 685 472 685 471 684 470 684 469 684 468 684 467 684 466 684 465 684 464 684 463 684 462 684 461 683 460 683 459 683 458 683 457 683 456 683 455 683 454 683 453 683 452 683 451 683 450 683 449 683 448 683 447 683 446 683 445 683 444 683 443 683 442 684 441 684 440 684 439 684 438 684 437 684 436 684 435 684 434 684 433 684 432 684 431 684 430 684 429 684 428 684 427 684 426 684 425 684 424 684 423 683 422 683 421 683 420 683 419 683 418 683 417 683 416 682 415 682 414 682 413 682 412 682 411 682 410 682 409 681 408 681 407 681 406 681 405 681 404 681 403 681 402 681 401 681 400 681 399 682 398 682 397 682 396 682 395 682 394 682 393 682 392 682 391 683 390 683 389 683 388 683 387 683 386 683 385 683 384 683 383 683 382 683 381 683 380 683 379 683 378 683 377 683 376 683 375 683 374 683 373 683 372 683 371 683 370 683 369 683 368 683 367 683 366 682 365 682 364 682 363 682 362 682 361 682 360 682 359 682 358 682 357 682 356 682 355 682 354 682 353 682 352 682 351 681 350 681 349 681 348 681 347 681 346 680 345 680 344 680 343 679 342 679 341 679 340 679 339 678 338 678 337 678 336 678 335 677 334 677 333 677 332 677 331 677 330 677 329 677 328 677 327 677 326 677 325 677 324 677 323 677 322 678 321 678 320 678 319 678 318 678 317 679 316 679 315 679 314 679 313 679 312 679 311 680 310 680 309 680 308 680 307 680 306 680 305 680 304 680 303 680 302 680 301 680 300 680 299 680 298 680 297 680 296 680 295 679 294 679 293 679 292 679 291 679 290 679 289 679 288 679 287 679 286 679 285 679 284 678 283 678 282 678 281 678 280 678 279 678 278 678 277 678 276 678 275 678 274 678 273 678 272 678 271 678 270 678 269 678 268 678 267 678 266 677 265 677 264 677 263 677 262 677 261 677 260 677 259 677 258 677 257 677 256 677 255 677 254 677 253 677 252 677 251 677 250 677 249 677 248 677 247 677 246 677 245 677 244 677 243 676 242 676 241 676 240 676 239 676 238 676 237 676 236 676 235 676 234 676 233 676 232 676 231 676 230 675 229 675 228 674 227 674 226 673 225 673 224 672 223 672 222 671 221 671 220 671 219 670 218 670 217 670 216 669 215 669 214 669 213 668 212 668 211 667 210 667 209 667 208 666 207 666 206 665 205 664 204 664 203 663 202 662 201 661 200 661 199 660 198 660 197 659 196 658 195 658 194 657 193 656 192 656 191 655 190 654 189 654 188 653 187 653 186 652 185 652 184 651 183 651 182 650 181 650 180 650 179 650 178 650 177 650 176 650 175 651 174 651 173 651 172 651 171 651 170 652 169 652 168 652 167 652 166 653 165 653 164 653 163 653 162 654 161 654 160 654 159 654 158 654 157 654 156 654 155 654 154 654 153 654 152 654 151 654 150 654 149 654 148 655 147 655 146 655 145 655 144 655 143 655 142 655 141 655 140 655 139 655 138 655 137 655 136 655 135 656 134 656 133 656 132 656 131 656 130 656 129 656 128 655 127 655 126 655 125 655 124 655 123 654 122 654 121 654 120 653 119 653 118 653 117 652 116 652 115 652 114 651 113 651 112 651 111 651 110 650 109 650 108 650 107 650 106 650 105 650 104 650 103 650 102 650 101 650 100 650 99 650 98 650 97 651 96 651 95 651 94 651 93 652 92 652 91 652 90 653 89 653 88 653 87 653 86 653 85 654 84 654 83 654 82 654 81 654 80 654 79 654 78 654 77 654 76 654 75 654 74 654 73 654 72 654 71 654 70 654 69 654 68 654 67 654 66 654 65 654 64 654 63 654 62 654 61 654 60 654 59 654 58 654 57 654 56 654 55 654 54 654 53 654 52 654 51 654 50 654 49 653 48 653 47 653 46 653 45 652 44 652 43 652 42 651 41 651 40 651 39 651 38 650 37 650 36 650 35 650 34 649 33 649 32 649 31 649 30 649Z" fill="url(#gR)"/>
<path d="M29.5 493v64m0 91v29m1-184v64m0 91v36m1-155v28m0 91v55m1-148v2m0 91v46m1-141v4m0 91v41m1-140v8m0 92v50m1-169v27m0 92v2m1-157v63m0 92v71m1-167v4m0 92v11m1-159v56m0 93v64m1-187v30m0 93v38m1-140v9m0 93v5m1-169v71m0 93v10m1-117v13m0 95v37m1-133v1m0 95v47m1-149v7m0 95v58m1-154v1m0 96v7m1-152v49m0 96v44m1-143v3m0 96v48m1-147v3m0 96v9m1-145v40m0 97v8m1-113v8m0 97v24m1-174v53m0 97v67m1-185v21m0 97v29m1-134v8m0 97v40m1-163v26m0 97v4m1-113v12m0 97v18m1-135v20m0 97v9m1-133v27m0 97v17m1-180v66m0 97v10m1-172v65m0 97v47m1-168v24m0 97v48m1-146v2m0 96v48m1-147v3m0 96v58m1-188v34m0 96v49m1-174v29m0 96v32m1-134v7m0 95v57m1-172v20m0 95v21m1-122v6m0 95v45m1-156v17m0 94v27m1-140v19m0 94v44m1-183v45m0 94v37m1-133v2m0 94v37m1-170v40m0 93v19m1-172v60m0 93v6m1-154v55m0 93v14m1-173v66m0 93v19m1-120v8m0 93v24m1-126v9m0 93v36m1-136v8m0 92v50m1-180v38m0 92v54m1-172v25m0 93v49m1-157v15m0 93v1m1-144v50m0 93v11m1-105v1m0 93v47m1-171v31m0 93v7m1-103v2m0 93v60m1-221v68m0 93v3m1-150v54m0 93v59m1-162v9m0 94v3m1-159v62m0 94v28m1-136v14m0 93v70m1-167v3m0 94v52m1-147v1m0 94v23m1-158v40m0 94v30m1-191v67m0 94v69m1-181v18m0 94v52m1-151v4m0 95v15m1-117v7m0 94v49m1-147v4m0 94v71m1-167v1m0 95v2m1-157v60m0 95v46m1-150v9m0 95v2m1-167v70m0 95v14m1-150v41m0 95v57m1-163v10m0 96v44m1-146v6m0 96v63m1-186v28m0 95v56m1-166v15m0 95v33m1-158v30m0 95v27m1-133v11m0 95v18m1-127v14m0 96v44m1-180v41m0 95v40m1-139v4m0 95v18m1-120v7m0 95v66m1-181v21m0 95v66m1-208v47m0 95v8m1-105v2m0 95v18m1-121v9m0 95v62m1-158v1m0 95v2m1-108v11m0 95v58m1-163v11m0 95v30m1-152v27m0 95v31m1-186v60m0 95v35m1-131v2m0 95v27m1-124v2m0 95v9m1-105v1m0 95v60m1-182v27m0 95v18m1-114v1m0 95v49m1-153v9m0 96v70m1-216v50m0 96v49m1-149v4m0 96v8m1-135v30m0 97v14m1-122v11m0 97v22m1-138v19m0 97v39m1-138v1m0 98v25m1-159v36m0 97v69m1-179v12m0 98v51m1-150v1m0 98v26m1-144v19m0 99v8m1-115v8m0 99v46m1-163v17m0 100v2m1-119v17m0 100v32m1-196v63m0 101v30m1-133v2m0 101v30m1-138v6m0 102v39m1-159v18m0 102v62m1-183v18m0 103v56m1-163v4m0 103v26m1-143v13m0 103v50m1-188v35m0 103v62m1-227v61m0 104v44m1-157v9m0 104v20m1-125v1m0 104v60m1-235v70m0 105v4m1-148v39m0 105v67m1-229v57m0 105v60m1-166v1m0 105v1m1-161v54m0 106v65m1-176v5m0 106v44m1-205v55m0 106v12m1-123v5m0 106v16m1-142v20m0 106v13m1-159v40m0 105v56m1-220v59m0 105v20m1-157v32m0 105v31m1-140v4m0 105v49m1-174v20m0 104v55m1-217v58m0 104v21m1-127v2m0 104v31m1-143v8m0 104v1m1-165v60m0 103v29m1-134v2m0 103v36m1-148v9m0 103v62m1-185v20m0 103v30m1-158v25m0 103v42m1-210v65m0 102v60m1-193v31m0 102v13m1-118v4m0 101v28m1-196v66m0 102v3m1-123v18m0 102v17m1-176v57m0 102v77m1-189v10m0 102v20m1-175v53m0 103v60m1-219v56m0 103v26m1-138v8m0 105v31m1-171v35m0 105v45m1-182v32m0 106v41m1-202v54m0 107v16m1-126v3m0 108v67m1-214v39m0 108v73m1-232v50m0 110v37m1-160v13m0 111v58m1-171v1m0 112v17m1-152v23m0 113v21m1-146v11m0 115v5m1-158v38m0 115v61m1-199v23m0 116v52m1-175v6m0 118v6m1-179v55m0 118v30m1-156v8m0 119v38m1-162v4m0 120v31m1-163v12m0 121v53m1-182v8m0 122v43m1-219v54m0 123v17m1-168v28m0 123v18m1-149v8m0 124v11m1-137v2m0 125v35m1-208v48m0 125v11m1-138v2m0 126v26m1-196v44m0 126v15m1-154v13m0 126v29m1-164v9m0 127v23m1-151v1m0 127v44m1-173v2m0 128v14m1-180v38m0 128v6m1-163v30m0 127v2m1-141v12m0 128v18m1-204v58m0 128v25m1-189v36m0 128v3m1-185v54m0 129v17m1-147v2m0 128v1m1-131v2m0 128v13m1-166v25m0 129v35m1-198v34m0 129v2m1-132v1m0 130v35m1-166v1m0 130v10m1-182v42m0 131v3m1-144v10m0 131v21m1-203v51m0 132v15m1-148v1m0 132v11m1-190v47m0 133v21m1-155v1m0 133v34m1-175v8m0 133v24m1-179v21m0 134v27m1-198v37m0 134v17m1-182v31m0 134v32m1-180v14m0 134v10m1-190v45m0 135v7m1-159v17m0 135v32m1-191v24m0 135v44m1-220v40m0 136v54m1-204v14m0 136v4m1-179v38m0 137v45m1-194v12m0 138v48m1-187v1m0 138v9m1-183v35m0 139v6m1-155v10m0 139v2m1-171v30m0 139v1m1-142v1m0 140v20m1-169v9m0 140v19m1-165v6m0 140v14m1-178v24m0 140v44m1-202v17m0 141v22m1-196v33m0 141v42m1-217v34m0 141v3m1-149v5m0 141v26m1-196v29m0 141v50m1-205v14m0 141v45m1-192v6m0 141v4m1-174v29m0 141v28m1-181v12m0 141v20m1-163v1m0 142v23m1-175v10m0 142v13m1-159v4m0 142v18m1-183v23m0 142v15m1-164v7m0 142v8m1-152v2m0 143v3m1-165v19m0 143v8m1-158v7m0 143v2m1-167v22m0 143v1m1-169v25m0 143v36m1-184v4m0 144v11m1-167v12m0 144v1m1-152v7m0 144v45m1-207v18m0 144v36m1-183v3m0 144v6m1-177v27m0 144v25m1-200v30m0 145v37m1-221v39m0 145v10m1-167v12m0 145v2m1-151v4m0 145v1m1-165v18m0 146v1m1-181v34m0 146v43m1-212v23m0 146v18m1-209v45m0 147v7m1-157v2m0 148v1m1-157v8m0 148v13m1-172v11m0 148v41m1-201v12m0 148v43m1-196v5m0 148v2m1-159v8m0 149v1m1-193v43m0 149v22m1-206v35m0 149v16m1-210v45m0 149v47m1-201v4m0 150v5m1-194v39m0 151v24m1-190v15m0 151v45m1-197v1m0 151v15m1-205v38m0 152v30m1-186v4m0 152v12m1-168v4m0 152v11m1-195v32m0 152v36m1-193v5m0 152v39m1-219v28m0 152v3m1-159v4m0 152v20m1-194v22m0 152v40m1-226v34m0 152v39m1-236v45m0 152v38m1-218v28m0 152v2m1-156v2m0 152v7m1-162v3m0 152v35m1-225v38m0 151v32m1-201v18m0 151v8m1-194v36m0 150v5m1-190v35m0 150v14m1-165v1m0 150v18m1-172v4m0 150v1m1-186v35m0 149v35m1-187v3m0 149v38m1-208v22m0 148v1m1-159v10m0 148v33m1-222v41m0 148v34m1-185v3m0 147v22m1-209v40m0 147v37m1-212v28m0 147v40m1-210v23m0 147v26m1-193v20m0 147v1m1-172v24m0 147v24m1-182v11m0 147v44m1-192v1m0 147v42m1-196v7m0 147v40m1-240v53m0 147v18m1-177v12m0 147v38m1-187v2m0 147v4m1-156v5m0 147v2m1-179v30m0 148v7m1-169v14m0 148v12m1-161v1m0 148v6m1-186v31m0 149v38m1-220v33m0 150v36m1-215v29m0 150v4m1-165v11m0 150v35m1-186v1m0 150v18m1-202v33m0 152v27m1-181v2m0 152v2m1-188v34m0 152v17m1-185v16m0 153v1m1-155v1m0 153v4m1-180v23m0 153v8m1-174v12m0 154v2m1-176v20m0 154v28m1-205v23m0 155v9m1-167v3m0 155v13m1-183v15m0 155v5m1-178v18m0 155v6m1-174v13m0 155v1m1-166v10m0 155v12m1-196v29m0 155v4m1-193v34m0 155v36m1-200v9m0 155v25m1-216v36m0 155v16m1-204v33m0 155v19m1-177v3m0 155v38m1-200v7m0 155v36m1-198v7m0 155v2m1-159v2m0 155v16m1-182v11m0 156v2m1-160v2m0 156v4m1-180v19m0 157v11m1-181v13m0 157v2m1-175v16m0 157v35m1-208v16m0 157v34m1-225v34m0 157v4m1-184v23m0 157v27m1-205v21m0 157v5m1-169v7m0 157v27m1-191v7m0 157v5m1-164v2m0 157v3m1-195v35m0 157v3m1-169v9m0 157v7m1-175v11m0 157v7m1-195v31m0 157v31m1-214v26m0 157v7m1-192v29m0 156v28m1-198v14m0 156v13m1-176v7m0 156v1m1-171v14m0 156v29m1-189v5m0 155v17m1-187v15m0 155v5m1-176v17m0 154v1m1-174v19m0 154v29m1-184v1m0 153v23m1-195v20m0 152v27m1-188v9m0 152v5m1-178v22m0 151v3m1-158v4m0 151v3m1-186v32m0 151v8m1-189v31m0 150v2m1-165v13m0 150v9m1-192v33m0 149v17m1-168v3m0 148v36m1-216v32m0 148v11m1-172v13m0 148v7m1-167v12m0 148v3m1-170v19m0 148v1m1-156v7m0 148v7m1-196v41m0 148v35m1-199v16m0 148v8m1-160v4m0 148v4m1-167v15m0 149v14m1-168v5m0 149v15m1-166v1m0 150v7m1-158v1m0 150v27m1-182v5m0 150v15m1-167v2m0 150v9m1-176v17m0 150v1m1-155v4m0 151v20m1-180v8m0 152v14m1-168v2m0 152v33m1-193v8m0 152v4m1-160v4m0 152v3m1-162v7m0 152v38m1-223v32m0 153v4m1-165v8m0 154v12m1-203v37m0 154v10m1-171v7m0 154v44m1-203v5m0 154v4m1-165v7m0 154v14m1-190v22m0 154v2m1-189v33m0 154v11m1-169v4m0 154v1m1-170v15m0 154v12m1-174v8m0 154v11m1-174v9m0 154v4m1-160v1m0 155v15m1-209v39m0 155v7m1-177v15m0 155v2m1-187v30m0 155v5m1-200v40m0 155v41m1-221v26m0 154v25m1-188v9m0 154v1m1-192v38m0 153v37m1-192v2m0 152v11m1-172v9m0 152v5m1-175v19m0 151v2m1-175v22m0 151v36m1-194v8m0 150v18m1-186v18m0 150v11m1-168v8m0 149v27m1-177v1m0 149v10m1-186v27m0 149v9m1-200v43m0 148v32m1-182v3m0 147v16m1-178v15m0 147v9m1-162v7m0 146v34m1-223v43m0 146v34m1-189v10m0 145v19m1-173v10m0 144v2m1-150v4m0 144v6m1-150v1m0 143v5m1-196v49m0 142v17m1-187v28m0 143v26m1-223v54m0 143v2m1-168v23m0 143v6m1-158v9m0 143v31m1-180v6m0 143v26m1-175v6m0 143v32m1-227v52m0 143v1m1-180v36m0 143v4m1-168v21m0 143v8m1-155v5m0 142v2m1-193v49m0 143v21m1-175v11m0 143v18m1-206v45m0 143v30m1-195v22m0 143v37m1-187v7m0 143v4m1-195v48m0 143v9m1-192v40m0 143v9m1-154v2m0 143v3m1-163v17m0 143v1m1-187v43m0 143v1m1-148v4m0 143v29m1-194v22m0 143v5m1-205v57m0 143v1m1-152v8m0 143v3m1-161v15m0 142v34m1-228v53m0 141v2m1-146v3m0 141v28m1-190v21m0 141v2m1-144v1m0 140v9m1-150v1m0 140v35m1-220v45m0 140v22m1-175v13m0 140v14m1-170v16m0 139v36m1-228v54m0 138v1m1-162v23m0 138v8m1-156v10m0 138v18m1-176v20m0 137v28m1-166v1m0 137v1m1-184v46m0 137v11m1-150v2m0 137v25m1-172v10m0 137v9m1-150v4m0 136v11m1-197v50m0 136v42m1-189v11m0 136v27m1-170v7m0 136v6m1-197v55m0 136v43m1-206v27m0 137v5m1-158v17m0 136v33m1-201v32m0 136v48m1-194v10m0 136v2m1-186v48m0 136v1m1-165v28m0 136v4m1-172v32m0 136v39m1-231v56m0 136v5m1-192v51m0 136v23m1-206v47m0 136v3m1-141v2m0 136v6m1-145v3m0 137v40m1-184v7m0 137v4m1-155v14m0 137v14m1-197v46m0 137v6m1-157v14m0 137v15m1-182v30m0 137v32m1-176v7m0 137v4m1-142v1m0 137v24m1-186v26m0 136v8m1-145v1m0 136v1m1-152v15m0 136v8m1-146v2m0 136v43m1-206v27m0 136v2m1-151v12m0 137v34m1-173v2m0 137v4m1-148v7m0 137v37m1-206v32m0 137v14m1-172v21m0 138v6m1-190v46m0 138v1m1-143v3m0 139v1m1-171v31m0 139v32m1-191v20m0 139v3m1-162v19m0 140v5m1-146v1m0 140v1m1-144v3m0 140v27m1-207v40m0 140v15m1-188v32m0 141v21m1-191v29m0 141v19m1-166v6m0 141v25m1-190v23m0 142v28m1-179v9m0 142v9m1-201v50m0 142v27m1-228v59m0 143v4m1-191v44m0 143v1m1-146v1m0 144v1m1-149v4m0 144v2m1-182v36m0 144v6m1-179v29m0 144v21m1-175v11m0 143v1m1-186v42m0 143v11m1-181v27m0 143v30m1-211v38m0 142v18m1-165v5m0 142v6m1-161v14m0 141v9m1-151v1m0 141v1m1-158v16m0 141v10m1-152v2m0 140v1m1-144v3m0 140v28m1-198v31m0 138v19m1-208v51m0 138v5m1-196v53m0 138v6m1-194v51m0 137v12m1-203v54m0 137v4m1-159v19m0 135v3m1-183v45m0 135v25m1-175v15m0 135v7m1-192v51m0 134v15m1-151v2m0 134v3m1-144v7m0 134v19m1-203v50m0 134v34m1-170v2m0 134v3m1-174v37m0 134v6m1-162v22m0 134v3m1-148v11m0 134v4m1-177v39m0 134v39m1-205v32m0 134v7m1-145v4m0 134v15m1-165v16m0 135v38m1-179v5m0 136v33m1-178v9m0 136v31m1-216v49m0 137v5m1-149v6m0 138v40m1-199v21m0 139v6m1-157v12m0 139v2m1-154v12m0 140v2m1-156v14m0 141v24m1-212v47m0 141v22m1-176v13m0 142v24m1-184v17m0 143v29m1-218v46m0 143v8m1-163v12m0 144v30m1-181v6m0 145v14m1-188v29m0 145v6m1-200v49m0 145v2m1-148v1m0 145v26m1-176v5m0 146v1m1-184v37m0 146v8m1-157v3m0 146v1m1-198v51m0 146v10m1-178v22m0 145v10m1-185v30m0 145v12m1-205v48m0 145v2m1-202v55m0 145v28m1-175v2m0 145v18m1-176v13m0 145v13m1-188v30m0 145v15m1-173v13m0 145v23m1-213v45m0 144v4m1-150v2m0 144v19m1-190v27m0 144v28m1-184v12m0 144v16m1-213v52m0 145v3m1-166v18m0 145v32m1-180v3m0 144v28m1-173v1m0 144v6m1-171v21m0 144v35m1-190v11m0 144v11m1-163v8m0 144v35m1-189v10m0 144v34m1-179v1m0 144v5m1-153v4m0 144v35m1-184v5m0 144v31m1-189v14m0 144v34m1-188v10m0 144v31m1-230v55m0 144v20m1-171v8m0 142v36m1-185v7m0 142v3m1-164v19m0 142v12m1-182v28m0 142v2m1-155v12m0 141v3m1-155v11m0 140v2m1-191v49m0 140v3m1-145v3m0 139v23m1-165v3m0 139v6m1-173v28m0 138v22m1-182v22m0 138v17m1-161v7m0 137v2m1-186v47m0 137v19m1-157v1m0 136v28m1-166v3m0 135v15m1-163v13m0 135v5m1-141v1m0 135v17m1-187v35m0 135v36m1-174v4m0 134v5m1-187v48m0 133v16m1-169v20m0 133v5m1-150v12m0 133v5m1-182v44m0 133v16m1-187v38m0 133v15m1-167v19m0 134v3m1-142v5m0 134v20m1-156v2m0 134v1m1-155v20m0 134v1m1-193v57m0 135v29m1-181v17m0 135v2m1-138v1m0 135v42m1-242v65m0 136v39m1-203v28m0 136v5m1-145v4m0 136v6m1-144v2m0 136v13m1-157v8m0 137v2m1-150v11m0 137v18m1-169v14m0 137v16m1-208v55m0 137v27m1-194v30m0 137v18m1-156v1m0 138v1m1-158v19m0 138v4m1-144v1m0 139v14m1-154v1m0 139v6m1-202v57m0 139v30m1-227v58m0 139v7m1-155v9m0 139v18m1-205v48m0 139v13m1-179v27m0 139v9m1-167v19m0 139v13m1-167v15m0 139v1m1-190v50m0 139v10m1-150v1m0 139v42m1-192v11m0 139v1m1-141v1m0 139v33m1-212v40m0 139v34m1-197v24m0 139v29m1-199v31m0 139v1m1-141v1m0 138v28m1-171v5m0 138v5m1-190v47m0 138v4m1-194v52m0 138v15m1-177v25m0 137v2m1-162v23m0 137v26m1-166v3m0 137v1m1-159v21m0 137v10m1-155v8m0 137v2m1-155v16m0 137v5m1-191v49m0 137v1m1-190v52m0 137v5m1-173v31m0 137v14m1-199v48m0 137v10m1-200v53m0 137v2m1-142v3m0 137v16m1-155v1m0 138v21m1-189v30m0 138v6m1-165v21m0 137v8m1-191v46m0 137v25m1-187v25m0 137v1m1-139v1m0 137v37m1-181v7m0 137v11m1-206v58m0 137v9m1-156v10m0 137v23m1-192v32m0 137v33m1-171v1m0 137v32m1-172v2m0 138v12m1-199v49m0 137v6m1-188v45m0 137v4m1-179v38m0 137v7m1-157v13m0 137v16m1-202v49m0 137v1m1-159v21m0 137v1m1-203v65m0 137v39m1-183v7m0 137v12m1-196v47m0 137v16m1-210v57m0 137v34m1-173v2m0 137v12m1-216v67m0 137v1m1-187v49m0 137v4m1-142v1m0 137v5m1-172v30m0 137v45m1-201v19m0 137v20m1-171v14m0 137v2m1-158v19m0 137v2m1-167v28m0 137v47m1-203v19m0 137v4m1-195v54m0 137v9m1-151v5m0 137v6m1-146v3m0 137v14m1-159v8m0 137v36m1-224v51m0 137v1m1-149v12m0 136v8m1-154v10m0 136v30m1-171v5m0 136v18m1-168v14m0 135v27m1-214v52m0 135v3m1-140v2m0 135v2m1-187v50m0 135v1m1-152v16m0 135v3m1-191v53m0 135v23m1-159v1m0 135v22m1-166v9m0 135v2m1-162v25m0 135v32m1-218v51m0 135v9m1-146v2m0 135v2m1-138v1m0 136v6m1-183v41m0 136v31m1-191v23m0 137v6m1-192v49m0 137v6m1-144v1m0 137v11m1-177v29m0 137v16m1-210v57m0 137v6m1-174v30m0 138v11m1-151v2m0 138v14m1-155v3m0 139v21m1-174v14m0 139v9m1-152v3m0 140v12m1-158v6m0 140v15m1-188v33m0 140v22m1-174v12m0 140v4m1-147v2m0 141v35m1-201v25m0 141v13m1-156v2m0 142v1m1-158v15m0 142v28m1-172v2m0 142v1m1-145v2m0 142v1m1-145v2m0 142v8m1-172v22m0 142v15m1-205v48m0 142v26m1-170v2m0 142v1m1-165v22m0 141v9m1-153v3m0 141v6m1-164v17m0 141v27m1-176v8m0 141v18m1-174v15m0 141v16m1-192v35m0 141v25m1-196v30m0 141v1m1-150v8m0 140v8m1-194v46m0 140v6m1-151v5m0 140v16m1-161v5m0 140v31m1-189v18m0 140v22m1-197v35m0 139v23m1-169v7m0 139v1m1-141v1m0 139v5m1-170v26m0 139v24m1-186v23m0 139v33m1-173v1m0 139v34m1-184v11m0 139v20m1-201v42m0 139v10m1-185v36m0 138v5m1-145v2m0 138v24m1-184v22m0 138v1m1-183v44m0 139v32m1-173v2m0 139v3m1-174v32m0 139v30m1-184v15m0 139v13m1-191v39m0 139v8m1-156v10m0 138v25m1-164v1m0 138v31m1-192v23m0 139v1m1-149v9m0 139v5m1-146v3m0 138v17m1-201v46m0 138v12m1-164v14m0 138v29m1-181v14m0 139v20m1-205v47m0 138v25m1-166v3m0 138v19m1-158v1m0 138v22m1-203v44m0 138v23m1-185v24m0 138v27m1-202v37m0 138v2m1-149v9m0 138v2m1-145v5m0 138v16m1-196v42m0 138v15m1-154v1m0 138v7m1-202v57m0 138v12m1-162v12m0 138v10m1-203v55m0 138v4m1-143v1m0 138v5m1-201v58m0 138v32m1-183v13m0 138v11m1-207v58m0 138v43m1-224v43m0 138v4m1-144v1m0 139v21m1-166v6m0 139v19m1-193v35m0 139v28m1-170v3m0 139v3m1-150v7m0 140v26m1-175v9m0 140v33m1-174v1m0 140v20m1-207v46m0 141v20m1-166v5m0 141v26m1-196v29m0 141v1m1-147v5m0 141v30m1-177v6m0 141v36m1-179v1m0 142v24m1-214v48m0 142v26m1-190v22m0 142v29m1-177v6m0 142v4m1-180v34m0 142v6m1-194v46m0 142v5m1-204v57m0 142v11m1-185v32m0 142v16m1-184v26m0 142v1m1-144v1m0 142v21m1-166v4m0 140v24m1-166v2m0 140v11m1-162v11m0 140v15m1-159v4m0 140v11m1-170v20m0 139v27m1-211v45m0 139v27m1-171v6m0 137v36m1-175v2m0 137v2m1-152v13m0 137v7m1-191v48m0 136v14m1-163v13m0 136v10m1-149v3m0 136v27m1-212v50m0 134v2m1-178v42m0 134v28m1-188v26m0 134v5m1-142v4m0 133v36m1-180v11m0 133v10m1-198v55m0 133v1m1-178v44m0 133v25m1-197v39m0 133v2m1-198v63m0 133v14m1-215v68m0 133v2m1-153v18m0 133v14m1-162v15m0 133v34m1-174v7m0 133v36m1-172v3m0 133v13m1-147v1m0 133v6m1-157v18m0 134v33m1-171v4m0 134v11m1-170v25m0 134v2m1-204v68m0 135v15m1-171v21m0 135v5m1-141v1m0 135v23m1-162v4m0 136v26m1-188v26m0 136v27m1-170v7m0 136v12m1-157v9m0 137v27m1-175v11m0 137v33m1-173v3m0 137v2m1-140v1m0 138v5m1-184v41m0 138v34m1-206v34m0 138v4m1-175v33m0 138v20m1-185v27m0 138v8m1-148v2m0 138v42m1-209v29m0 138v39m1-204v27m0 138v8m1-155v9m0 138v12m1-166v16m0 138v10m1-177v29m0 138v8m1-147v1m0 138v29m1-183v16m0 137v13m1-186v35m0 138v19m1-161v4m0 138v5m1-187v44m0 137v3m1-142v2m0 137v3m1-179v38m0 138v1m1-171v32m0 137v17m1-200v46m0 137v21m1-160v2m0 136v27m1-174v10m0 137v23m1-161v1m0 137v30m1-171v4m0 136v5m1-189v48m0 136v7m1-182v38m0 137v3m1-144v4m0 136v19m1-184v29m0 136v2m1-163v25m0 136v17m1-162v9m0 136v37m1-185v12m0 136v4m1-151v11m0 136v13m1-151v2m0 136v5m1-164v23m0 136v5m1-146v5m0 136v5m1-190v49m0 136v15m1-153v2m0 136v2m1-143v5m0 136v1m1-146v8m0 137v51m1-189v1m0 137v20m1-161v4m0 137v30m1-184v17m0 137v30m1-184v17m0 137v3m1-142v2m0 137v1m1-153v15m0 137v1m1-169v31m0 137v3m1-156v16m0 137v3m1-193v53m0 137v2m1-161v22m0 137v3m1-141v1m0 137v22m1-161v2m0 137v2m1-181v42m0 138v31m1-193v24m0 138v48m1-191v5m0 138v35m1-177v4m0 138v20m1-173v15m0 138v9m1-153v6m0 138v7m1-163v18m0 138v5m1-144v1m0 138v10m1-162v14m0 138v1m1-180v41m0 138v13m1-154v3m0 138v8m1-148v2m0 138v14m1-181v29m0 139v33m1-196v24m0 139v40m1-217v38m0 139v39m1-187v9m0 139v1m1-144v4m0 140v31m1-173v2m0 140v35m1-217v42m0 140v8m1-157v9m0 141v9m1-166v16m0 141v19m1-202v41m0 142v5m1-166v19m0 142v2m1-167v23m0 143v39m1-214v32m0 143v26m1-172v3m0 143v2m1-189v44m0 143v27m1-228v58m0 143v14m1-177v20m0 144v20m1-193v29m0 144v1m1-147v2m0 144v6m1-151v1m0 144v5m1-161v12m0 144v1m1-161v16m0 143v18m1-174v13m0 143v8m1-152v1m0 143v7m1-178v28m0 143v5m1-206v58m0 143v14m1-204v47m0 142v3m1-186v41m0 142v1m1-187v44m0 142v5m1-153v6m0 142v11m1-154v1m0 141v4m1-157v12m0 141v25m1-194v28m0 141v1m1-168v26m0 140v14m1-178v23m0 141v1m1-161v19m0 141v21m1-210v48m0 141v3m1-147v3m0 140v9m1-156v7m0 140v6m1-153v7m0 140v39m1-180v1m0 140v2m1-199v57m0 140v18m1-192v34m0 140v6m1-152v6m0 140v9m1-182v33m0 140v13m1-187v34m0 140v7m1-186v39m0 140v37m1-178v1m0 140v4m1-145v1m0 140v10m1-155v5m0 140v2m1-167v25m0 140v2m1-149v7m0 140v17m1-159v2m0 140v44m1-190v6m0 140v29m1-170v1m0 141v1m1-177v35m0 141v11m1-179v27m0 141v3m1-148v4m0 141v30m1-178v7m0 141v18m1-187v29m0 140v8m1-159v11m0 140v6m1-190v44m0 140v4m1-159v15m0 140v12m1-161v9m0 140v11m1-156v5m0 140v20m1-164v4m0 140v30m1-192v22m0 141v5m1-201v55m0 141v1m1-163v21m0 141v11m1-194v42m0 141v24m1-169v4m0 141v18m1-162v3m0 141v36m1-215v38m0 141v28m1-189v20m0 141v28m1-214v45m0 141v21m1-169v7m0 141v1m1-145v4m0 140v7m1-148v1m0 140v1m1-158v17m0 140v11m1-188v37m0 140v28m1-198v31m0 139v18m1-196v39m0 139v1m1-153v13m0 139v22m1-163v2m0 139v17m1-206v51m0 138v27m1-168v3m0 138v10m1-193v45m0 139v1m1-151v11m0 139v3m1-159v18m0 138v2m1-152v12m0 138v4m1-190v48m0 138v4m1-204v62m0 138v8m1-162v16m0 138v8m1-202v56m0 138v17m1-208v53m0 138v33m1-195v24m0 138v5m1-144v1m0 138v4m1-161v19m0 138v7m1-148v2m0 139v11m1-198v48m0 139v23m1-176v14m0 139v1m1-154v14m0 139v32m1-213v42m0 139v14m1-164v10m0 140v1m1-144v3m0 139v24m1-165v2m0 139v20m1-161v2m0 139v32m1-184v12m0 140v10m1-163v13m0 140v6m1-180v34m0 140v23m1-173v10m0 140v28m1-198v29m0 141v32m1-175v2m0 141v2m1-160v17m0 141v4m1-167v22m0 141v30m1-173v2m0 141v29m1-173v3m0 141v1m1-185v43m0 141v22m1-165v2m0 141v29m1-187v17m0 141v2m1-147v4m0 141v4m1-148v3m0 141v4m1-149v3m0 142v9m1-157v6m0 142v7m1-198v49m0 142v27m1-170v1m0 142v13m1-191v36m0 142v15m1-159v2m0 142v9m1-181v30m0 142v1m1-149v6m0 142v34m1-178v2m0 142v35m1-192v15m0 142v21m1-191v28m0 142v13m1-160v4m0 143v27m1-213v43m0 143v3m1-166v20m0 143v11m1-160v6m0 143v23m1-168v2m0 143v25m1-174v6m0 144v37m1-182v1m0 144v14m1-160v2m0 144v6m1-198v48m0 144v15m1-162v3m0 144v2m1-148v2m0 144v45m1-193v4m0 144v10m1-155v1m0 144v7m1-190v39m0 144v1m1-147v2m0 144v19m1-181v18m0 144v9m1-154v1m0 144v1m1-163v18m0 144v1m1-166v21m0 144v34m1-222v44m0 144v6m1-152v2m0 144v17m1-170v8m0 145v24m1-212v43m0 145v1m1-176v30m0 145v11m1-194v38m0 145v32m1-215v38m0 145v4m1-173v24m0 145v10m1-156v1m0 145v1m1-151v5m0 145v2m1-174v27m0 145v33m1-185v6m0 146v33m1-192v13m0 146v3m1-189v40m0 146v34m1-217v37m0 146v1m1-194v46m0 147v24m1-177v6m0 147v24m1-197v25m0 148v2m1-165v15m0 148v26m1-207v33m0 148v25m1-185v12m0 148v33m1-204v23m0 148v1m1-192v43m0 148v4m1-186v34m0 148v2m1-194v43m0 149v14m1-165v2m0 149v30m1-195v16m0 149v14m1-164v1m0 149v9m1-160v2m0 149v7m1-173v16m0 150v20m1-172v2m0 150v26m1-181v5m0 150v13m1-164v1m0 150v30m1-186v6m0 150v6m1-167v10m0 151v4m1-193v38m0 151v2m1-170v17m0 151v10m1-163v2m0 151v6m1-166v9m0 151v1m1-174v22m0 151v21m1-179v7m0 151v36m1-205v18m0 151v6m1-162v5m0 151v7m1-188v30m0 151v2m1-157v4m0 151v1m1-159v7m0 151v2m1-155v2m0 150v12m1-170v8m0 150v8m1-163v5m0 150v29m1-212v33m0 150v32m1-195v14m0 149v4m1-188v35m0 149v15m1-173v9m0 148v26m1-182v8m0 148v2m1-164v14m0 148v27m1-182v7m0 148v23m1-221v50m0 148v34m1-186v5m0 147v1m1-150v2m0 146v35m1-216v35m0 146v14m1-190v30m0 146v3m1-155v6m0 146v8m1-192v38m0 146v1m1-176v29m0 146v21m1-176v9m0 146v13m1-175v16m0 146v4m1-185v35m0 146v3m1-165v16m0 146v2m1-166v18m0 146v1m1-152v5m0 146v1m1-180v33m0 146v2m1-151v3m0 146v10m1-157v1m0 146v32m1-199v21m0 147v23m1-177v7m0 147v6m1-185v32m0 147v35m1-183v1m0 148v33m1-195v14m0 148v29m1-197v20m0 148v2m1-167v17m0 149v33m1-202v20m0 149v3m1-184v32m0 150v23m1-177v4m0 150v2m1-157v5m0 150v6m1-175v19m0 151v2m1-175v22m0 151v26m1-201v24m0 151v34m1-186v1m0 151v4m1-163v8m0 152v6m1-199v41m0 152v1m1-162v9m0 152v7m1-163v4m0 152v14m1-185v19m0 152v1m1-156v3m0 152v17m1-172v3m0 152v42m1-232v38m0 152v6m1-168v10m0 151v35m1-194v8m0 151v16m1-171v3m0 152v2m1-166v12m0 152v1m1-162v9m0 152v29m1-198v17m0 151v29m1-189v9m0 151v29m1-182v2m0 151v2m1-162v9m0 151v25m1-211v34m0 151v12m1-166v3m0 151v1m1-158v6m0 151v2m1-156v3m0 151v4m1-186v31m0 150v2m1-161v9m0 150v45m1-197v1m0 151v48m1-230v31m0 151v19m1-202v32m0 151v23m1-177v3m0 151v7m1-172v14m0 151v13m1-168v4m0 151v7m1-163v5m0 151v22m1-203v30m0 151v15m1-168v2m0 151v5m1-183v27m0 151v8m1-175v16m0 151v34m1-211v26m0 150v27m1-185v8m0 150v2m1-167v15m0 150v13m1-167v4m0 150v10m1-175v14m0 151v8m1-160v1m0 151v6m1-162v5m0 151v4m1-165v10m0 151v2m1-162v9m0 151v6m1-181v24m0 151v22m1-177v4m0 150v5m1-170v15m0 150v2m1-154v2m0 150v37m1-220v33m0 150v10m1-167v7m0 150v27m1-201v23m0 151v2m1-154v1m0 151v6m1-168v11m0 151v8m1-190v31m0 151v1m1-159v7m0 151v15m1-199v33m0 151v16m1-199v32m0 151v29m1-189v9m0 151v10m1-163v2m0 151v3m1-157v3m0 151v11m1-170v8m0 151v2m1-158v5m0 152v22m1-176v2m0 152v33m1-220v35m0 152v24m1-192v15m0 153v9m1-170v8m0 153v5m1-193v35m0 153v30m1-206v23m0 154v24m1-212v34m0 154v15m1-171v2m0 154v20m1-176v1m0 155v11m1-177v11m0 155v18m1-181v8m0 155v19m1-192v18m0 156v22m1-179v1m0 156v18m1-209v35m0 156v8m1-209v45m0 156v3m1-162v3m0 156v28m1-187v3m0 156v2m1-175v17m0 156v6m1-172v10m0 156v1m1-160v3m0 156v4m1-192v32m0 156v7m1-164v1m0 156v1m1-159v2m0 156v6m1-164v3m0 156v2m1-159v1m0 156v23m1-193v14m0 156v12m1-186v19m0 155v19m1-192v18m0 155v7m1-207v45m0 155v6m1-201v41m0 155v28m1-184v1m0 155v3m1-159v1m0 155v7m1-190v29m0 154v1m1-156v1m0 154v9m1-165v3m0 154v1m1-160v5m0 154v1m1-183v28m0 154v3m1-159v2m0 154v26m1-187v8m0 153v9m1-166v4m0 153v16m1-203v34m0 153v5m1-160v2m0 153v27m1-195v15m0 153v2m1-156v1m0 153v4m1-169v12m0 153v18m1-175v4m0 153v5m1-162v4m0 153v14m1-181v14m0 153v6m1-167v8m0 153v2m1-161v5m0 154v12m1-169v3m0 154v3m1-160v3m0 154v25m1-201v22m0 154v14m1-200v32m0 154v16m1-173v3m0 154v14m1-172v3m0 155v12m1-182v15m0 155v21m1-211v35m0 155v7m1-171v9m0 154v18m1-212v41m0 152v23m1-198v23m0 152v3m1-172v18m0 150v23m1-210v38m0 148v26m1-180v7m0 146v5m1-176v26m0 144v2m1-151v6m0 142v26m1-187v20m0 140v4m1-151v8m0 138v1m1-177v38m0 137v22m1-169v11m0 135v7m1-168v27m0 133v43m1-186v11m0 131v31m1-163v2m0 129v25m1-155v2m0 127v14m1-142v1m0 126v49m1-177v3m0 124v2m1-130v5m0 122v11m1-173v41m0 120v7m1-135v8m0 119v2m1-124v3m0 119v20m1-170v31m0 119v10m1-140v11m0 119v5m1-139v14m0 120v26m1-170v24m0 120v36m1-205v49m0 120v6m1-130v4m0 120v45m1-169v4m0 120v9m1-134v4m0 121v25m1-150v4m0 121v41m1-176v14m0 121v5m1-163v37m0 121v1m1-124v2m0 121v2m1-126v3m0 121v3m1-150v26m0 121v1m1-142v20m0 121v10m1-135v4m0 121v9m1-149v19m0 121v43m1-192v28m0 121v46m1-208v41m0 121v1m1-132v10m0 121v14m1-162v27m0 121v1m1-153v31m0 121v23m1-153v10m0 120v30m1-158v8m0 120v7m1-133v6m0 120v1m1-146v25m0 120v12m1-133v1m0 120v44m1-169v5m0 120v3m1-155v32m0 120v13m1-179v46m0 120v2m1-161v39m0 120v29m1-169v20m0 120v6m1-139v13m0 120v33m1-180v28m0 119v3m1-158v36m0 119v7m1-138v12m0 119v6m1-148v23m0 119v11m1-184v54m0 119v34m1-156v3m0 119v11m1-184v54m0 119v8m1-128v1m0 119v5m1-146v22m0 119v44m1-192v29m0 119v16m1-138v3m0 119v44m1-168v5m0 119v30m1-155v6m0 119v23m1-147v5m0 119v32m1-206v55m0 119v25m1-182v38m0 119v33m1-158v6m0 118v2m1-169v50m0 117v5m1-125v3m0 117v13m1-147v17m0 117v4m1-130v9m0 117v47m1-168v4m0 117v55m1-174v2m0 117v9m1-133v7m0 117v26m1-156v13m0 117v31m1-150v2m0 117v37m1-173v19m0 117v5m1-165v43m0 116v23m1-152v13m0 116v14m1-132v2m0 116v23m1-150v11m0 116v4m1-151v31m0 117v9m1-161v35m0 117v51m1-207v40m0 116v2m1-142v24m0 116v42m1-184v26m0 116v25m1-192v51m0 116v45m1-204v43m0 116v5m1-139v18m0 117v1m1-150v32m0 117v21m1-145v7m0 117v2m1-120v1m0 117v11m1-129v2m0 116v42m1-173v15m0 116v2m1-124v6m0 117v2m1-142v23m0 117v1m1-143v25m0 117v23m1-154v14m0 117v22m1-153v14m0 117v4m1-176v55m0 118v10m1-175v47m0 118v31m1-175v26m0 118v30m1-169v22m0 117v13m1-145v15m0 117v29m1-201v55m0 117v18m1-190v55m0 117v1m1-146v27m0 118v7m1-126v1m0 118v52m1-175v5m0 118v1m1-123v4m0 118v10m1-152v24m0 118v39m1-164v7m0 118v1m1-155v36m0 117v47m1-171v7m0 117v27m1-195v50m0 118v41m1-190v31m0 118v51m1-199v30m0 118v9m1-166v39m0 118v15m1-187v54m0 118v3m1-128v6m0 119v19m1-149v11m0 119v35m1-208v54m0 118v2m1-169v49m0 118v2m1-121v1m0 118v1m1-150v31m0 118v12m1-134v4m0 118v35m1-168v14m0 119v3m1-134v12m0 119v30m1-175v26m0 119v12m1-134v3m0 119v17m1-137v1m0 119v43m1-169v7m0 119v16m1-184v49m0 119v2m1-143v23m0 118v36m1-156v2m0 118v1m1-169v50m0 118v36m1-194v40m0 118v16m1-173v39m0 118v2m1-133v13m0 117v37m1-159v5m0 117v1m1-130v12m0 117v10m1-131v5m0 116v6m1-179v57m0 116v1m1-118v1m0 116v2m1-135v17m0 116v19m1-147v12m0 116v5m1-133v12m0 116v10m1-142v17m0 114v3m1-125v8m0 114v1m1-172v57m0 114v46m1-195v35m0 114v32m1-147v1m0 114v49m1-174v11m0 114v5m1-136v17m0 114v50m1-211v47m0 114v22m1-139v3m0 114v6m1-159v39m0 114v58m1-221v49m0 114v17m1-177v46m0 114v1m1-116v1m0 114v1m1-157v42m0 114v38m1-195v43m0 114v39m1-165v11m0 115v12m1-130v3m0 115v11m1-128v2m0 115v53m1-206v38m0 115v53m1-194v26m0 115v35m1-180v29m0 116v14m1-132v2m0 117v44m1-164v3m0 117v3m1-164v44m0 117v2m1-157v38m0 117v3m1-144v24m0 117v24m1-189v47m0 118v2m1-130v10m0 118v54m1-218v46m0 118v15m1-176v43m0 118v27m1-148v3m0 118v1m1-145v26m0 118v26m1-188v44m0 118v12m1-139v9m0 118v11m1-156v27m0 118v5m1-142v19m0 118v48m1-177v11m0 118v22m1-143v3m0 118v16m1-174v40m0 118v8m1-135v9m0 118v1m1-175v56m0 118v42m1-168v8m0 118v2m1-166v46m0 118v9m1-132v5m0 118v46m1-199v35m0 118v28m1-166v20m0 118v25m1-162v17m0 122v18m1-150v8m0 126v6m1-139v5m0 130v2m1-149v15m0 134v1m1-156v19m0 137v9m1-178v31m0 140v33m1-186v12m0 142v8m1-156v5m0 144v5m1-176v26m0 146v17m1-167v3m0 147v11m1-169v11m0 148v3m1-170v18m0 149v18m1-171v4m0 149v17m1-180v15m0 148v5m1-158v5m0 147v2m1-156v8m0 146v2m1-157v9m0 145v7m1-153v4m0 139v12m1-149v1m0 133v10m1-149v9m0 128v6m1-146v14m0 123v4m1-131v7m0 117v8m1-125v3m0 111v13m1-122v1m0 105v1m1-106v3m0 99v1m1-104v7m0 93v1m1-97v6m0 87v3m1-92v5m0 81v2m1-85v5m0 75v6m1-79v1m0 69v1m1-72v5m0 63v4m1-66v1m0 58v3m1-59v1m0 52v2m1-52v1m0 47v3m1-51v3m0 42v2m1-42v1m0 37v2m1-39v2m0 32v1m1-32v1m0 28v1m1-29v2m0 24v1m1-24v1m0 20v1m1-21v2m0 16v2m1-17v1m0 12v2m1-14v1m0 10v1m1-11v2m0 7v1m1-8v1m0 4v1m1-5v1" stroke="url(#gR)" stroke-width="1" fill="none"/>
<path d="M29.5 487v6m0 184v11m1-4v14m1-183v14m0 174v3m1-165v14m0 139v1m1-144v2m0 136v15m1-181v26m0 150v11m1-204v24m0 121v31m1-190v2m1 24v35m0 107v15m1-176v2m0 213v3m1-192v2m0 161v9m1-164v15m0 107v17m1-12v30m1-148v1m0 145v8m1-173v32m0 143v7m1-189v33m0 160v3m1-161v4m0 104v12m1-166v2m1 17v29m0 147v2m1-185v36m0 108v24m1-181v12m0 145v1m1-131v17m0 129v15m1-196v7m1 30v2m0 147v20m1-173v19m0 145v19m1-203v21m0 127v32m1-176v31m0 127v2m1-148v11m0 126v20m1-162v9m0 141v5m1-12v20m1 17v12m1-207v27m0 169v7m1-175v22m0 146v5m1-181v29m0 157v1m1-200v11m1-2v7m0 157v8m1-161v19m1-44v31m0 136v21m2-15v15m1-177v22m0 157v1m1-193v9m0 176v14m1-154v7m0 133v8m1-187v9m0 152v4m1-180v4m0 159v16m1-171v1m0 162v25m1-20v10m1-155v25m0 125v18m1-159v15m0 138v12m1-161v13m0 150v5m1-202v17m0 184v2m1-175v1m0 167v1m1-181v23m0 109v10m1-156v2m0 154v1m1-123v17m1-31v1m0 131v1m1-105v1m1 98v26m1-186v10m0 206v5m1-195v28m0 106v34m1-194v1m0 184v1m1-138v1m1 1v9m0 149v12m1-163v4m0 118v9m1-168v1m0 164v10m1-204v3m0 230v1m1-209v27m0 164v8m1-175v16m0 114v6m1-130v7m0 150v3m1-170v20m1-25v27m0 98v11m1-171v3m0 201v9m1-163v4m0 106v23m2-163v2m0 193v2m1-199v34m0 150v3m1-170v21m0 165v2m1-192v4m0 179v2m1-186v18m0 143v8m1-174v8m1 9v10m0 124v4m1-156v25m0 154v11m1-194v3m0 176v4m1-167v24m1-6v3m1-16v3m1-28v2m0 150v9m1-124v10m0 115v9m1-137v7m1-7v15m0 98v35m1-160v17m0 164v1m1-172v8m0 136v11m1-174v11m0 153v1m1-190v3m0 190v4m1-142v7m0 124v10m1-143v9m0 106v23m1-135v7m1-37v11m0 140v7m1-126v5m0 145v9m1-170v8m1-47v6m0 195v1m1-160v10m0 108v8m1-152v9m0 141v9m1-137v6m0 130v2m1-170v30m0 155v1m1-172v33m0 124v15m1-188v14m1-2v25m0 161v5m1-158v3m1-43v24m0 126v24m1 14v2m1-182v17m0 119v23m1-154v12m0 149v14m1-212v2m0 194v4m1-151v14m0 133v2m1-152v12m0 147v4m1-184v21m1-18v17m0 177v8m1-206v35m0 133v13m1-183v27m0 166v8m1-204v8m1 182v16m1-191v18m0 133v14m1-149v10m0 165v3m1-59v3m1-163v12m1-19v1m0 222v4m1-184v14m0 107v38m1-202v3m1 17v32m0 155v1m1-207v1m0 173v6m1-136v7m0 127v29m1-175v4m0 139v26m1-192v7m0 201v6m1-42v28m1-192v7m0 168v12m1-157v5m0 158v2m1-185v9m0 179v1m1-221v3m0 183v1m1-143v15m0 137v2m1-152v7m0 113v8m2-131v16m0 141v1m1-158v9m1-23v12m0 153v10m1-170v2m0 170v2m1-213v1m1 19v15m0 146v18m1-137v1m0 133v12m1-37v12m1-156v21m0 137v26m2-158v3m0 132v28m1 13v2m1-222v1m0 185v15m1-165v12m0 144v1m1-185v13m0 185v12m1-197v3m1 154v2m1-140v12m1-38v2m1-14v2m0 197v14m1-192v18m1-18v29m0 130v12m1-168v4m1 10v1m0 131v21m1-184v5m1 206v2m1-190v13m0 130v25m1-1v13m1-178v9m0 165v7m1-170v1m0 155v5m1-169v1m1-14v18m0 173v1m1-221v1m0 194v13m1-197v16m0 169v1m1-167v17m0 143v2m1-171v32m0 162v3m1-212v1m0 184v9m1-152v5m0 154v3m1-14v6m1 8v1m1-178v13m0 159v11m2-19v11m1-193v2m0 172v25m1-196v8m0 159v21m1-183v21m0 158v1m1 6v7m1-200v4m0 167v2m1 13v14m1-168v7m0 131v15m1-178v32m0 143v17m2-195v3m1 15v18m0 166v1m1-26v3m1-9v1m1-147v2m0 162v8m1-13v7m1-157v2m0 144v15m1-4v1m1-159v3m0 168v2m1-190v13m0 165v9m1-199v11m0 182v7m1-206v1m0 188v11m1-201v8m1 4v13m0 158v23m1-215v2m0 187v1m1-178v18m0 184v5m1-200v4m1-23v6m1 23v3m0 154v14m1-201v8m1 23v3m1 7v4m0 148v14m1-202v5m0 180v24m1-180v1m1-22v2m0 170v24m1-185v19m0 161v15m1-194v10m0 168v15m1-191v11m0 160v5m1-184v1m1 3v3m0 180v6m1-205v3m0 216v1m1-222v4m0 178v17m1-183v17m0 172v10m1-215v9m2 11v12m0 151v8m1-189v7m0 198v3m1-195v11m0 173v6m1-174v5m0 166v9m1-202v18m0 165v18m1-178v1m0 164v4m1-189v2m1 14v2m0 157v10m1-167v5m0 148v27m1-22v13m1-188v17m0 152v7m1-176v2m0 166v1m1 34v4m1-29v3m1-175v5m0 157v6m1-171v13m1 187v2m1-201v16m1-26v2m0 196v1m1-209v8m1-12v3m0 194v9m1-178v2m0 159v11m1-186v24m0 150v2m1-171v4m0 165v17m2 0v5m1-15v3m1-167v7m0 151v4m1 8v5m1-195v18m1-15v14m1 4v3m0 155v2m1-163v2m0 158v4m1 17v11m1-223v6m0 200v5m2-190v15m0 159v10m1 10v3m1-198v5m1-4v18m0 167v14m1-220v1m1 12v22m0 168v5m1-179v6m0 167v1m1-203v7m1 26v1m1-24v1m0 183v14m1-197v24m1-26v8m0 214v1m1-2v2m2-228v7m0 182v7m1-165v2m0 161v13m1-196v21m0 190v1m1-5v3m1-212v8m0 177v12m3-192v21m0 169v6m1-181v3m0 155v17m1-204v1m1 21v11m1-20v2m0 171v1m1-164v4m0 191v1m2-203v18m0 172v4m2-207v6m0 215v1m1-215v4m0 196v3m1-204v8m0 168v13m1-193v8m0 195v4m1-202v16m2-1v5m0 194v2m1-24v1m1-189v11m0 197v2m1-198v9m0 153v20m1-187v11m0 154v6m1 0v13m1-192v10m0 174v6m1-172v5m0 155v19m1 13v1m2-34v4m1-173v4m1-3v13m0 169v3m1 7v2m1-185v2m0 156v9m1-198v1m0 203v7m1-194v2m0 170v17m1-186v14m0 158v14m1-10v11m1-195v10m0 168v6m1-184v2m1-6v3m0 187v17m1-187v3m0 171v7m1-198v8m0 175v6m1-185v1m0 179v3m1-186v9m0 169v8m1-183v9m0 177v1m1-199v2m0 188v5m1-202v4m1 8v17m0 189v6m1-15v7m2-201v20m0 196v1m1-210v9m0 198v2m1-204v4m0 164v22m1-194v13m0 173v11m1-203v10m0 169v22m1-185v3m0 162v3m1 4v13m1-207v13m0 172v3m1-179v1m0 208v2m1-219v9m1 177v9m1-194v1m0 207v3m1-217v9m0 183v11m1-186v6m1-6v6m0 169v14m1-181v3m0 162v2m1-2v12m1-8v16m1-206v15m0 175v3m2-198v5m0 190v5m1 16v3m1-18v4m1-182v2m0 164v6m1-180v3m1-3v13m0 177v4m1-201v10m0 175v15m1-194v3m0 172v9m1-185v2m1 195v2m1-202v5m1-4v15m0 166v3m1-185v4m0 176v10m1-178v10m1 163v2m1-192v1m0 183v10m1-185v10m0 172v7m1 0v9m1-181v4m0 187v1m1-219v2m1 187v11m1-185v7m0 163v6m1-186v10m0 168v8m1-180v16m0 162v4m2-178v3m0 172v5m1-9v17m1-194v10m0 178v5m1-192v19m1-14v17m0 158v2m1-165v5m1-12v8m0 170v11m1-195v17m0 161v13m1-196v7m0 168v4m1-167v8m0 175v8m1-203v15m0 174v4m1-179v7m1 158v11m1-182v11m2-33v4m0 189v4m1 5v6m1-8v8m1-184v5m1-9v11m0 163v8m1-176v3m0 175v11m1-206v5m0 178v2m1-195v4m0 198v5m1-191v17m0 159v2m1 9v5m1-194v15m1-7v6m0 167v14m1-195v21m0 171v12m1-20v5m1-191v9m0 172v21m1-18v14m2-202v3m0 205v5m1-195v2m2 173v16m1-198v10m0 166v1m1-185v9m0 172v9m1-197v13m1 13v2m0 176v2m1-189v1m0 179v4m1-174v2m0 184v7m1-186v2m0 160v5m1-192v1m0 185v2m1 21v5m1-192v5m0 166v13m1-204v13m0 171v9m1-174v3m0 187v1m1-225v1m1 20v14m0 174v3m1-195v19m0 156v18m1-172v4m0 154v11m1-12v9m1-207v2m0 208v9m1-205v9m0 197v2m1-226v1m0 199v4m1-178v6m0 172v8m1-168v2m0 183v1m1-205v24m0 175v1m1-177v1m1 150v8m1-191v3m0 183v4m1-189v17m0 172v1m1-175v19m0 149v5m1 15v3m1-187v9m0 172v2m2-200v15m1 12v3m0 154v11m1-6v5m1-5v3m1-161v4m0 148v15m1-183v5m0 161v8m1-196v1m0 187v9m1-174v17m1-31v13m0 170v8m1-12v18m1-174v4m0 154v2m1-179v16m0 191v2m2-194v14m1-21v3m0 164v2m1-154v8m0 150v17m1-180v13m0 176v1m1-222v1m0 207v6m1-183v2m0 167v9m1-182v3m1 156v3m1-174v9m0 169v14m1-172v2m0 166v3m1-182v3m1 13v6m0 139v3m1-189v2m0 194v3m1-154v1m0 164v1m1-179v6m0 156v10m1-161v1m0 151v1m1-199v1m1 38v1m0 174v5m1-178v3m0 149v3m2-188v16m0 169v9m1-171v4m0 186v3m2-212v30m0 148v21m1-22v8m1-189v16m0 168v10m1-192v10m0 207v1m1-35v7m1 11v1m1-212v5m0 186v3m1-157v13m0 144v10m1-175v20m1-8v4m0 148v14m1-179v10m0 165v4m1-12v16m1-181v8m0 166v6m1-200v12m0 199v1m1-199v22m0 148v2m1-171v27m1-27v3m0 170v14m1-179v20m0 138v7m1-180v21m0 159v1m1-149v2m1-36v11m0 165v22m1-189v16m0 183v2m1-208v33m0 143v9m1-159v2m0 181v1m1-24v4m1-190v14m0 165v15m1-206v1m0 185v1m1-153v9m0 143v8m1-184v5m0 202v1m1-201v9m0 162v19m1-190v9m0 164v2m1-152v4m0 142v8m1-165v13m0 170v2m1-215v6m0 195v4m1-194v2m0 194v1m1-199v7m0 189v5m1-188v17m0 172v2m1-199v7m0 193v1m1-202v22m1 178v2m1-24v11m1-203v1m1 23v19m0 146v18m1-183v16m0 150v2m1-187v3m0 186v3m1 12v9m1-202v18m0 155v21m1-210v3m1 3v12m0 200v1m1-14v1m1-193v27m0 153v7m1-188v20m1-8v21m0 143v4m1-165v3m0 167v6m1-183v25m0 143v1m1-160v15m0 171v4m1-214v12m0 188v9m1-218v1m0 194v7m1-6v11m1-206v1m0 200v1m1-9v7m1-180v14m0 157v11m1 11v4m1-191v12m0 157v4m1 4v2m1-159v6m0 139v2m1-159v13m0 160v3m2-181v23m0 139v11m1-8v1m1-170v7m0 159v16m1-15v12m1-192v3m1 2v5m0 173v3m1-174v26m0 153v12m1-178v1m1-15v25m1-21v17m0 176v1m1-26v6m1-160v5m1-23v8m0 166v11m1-176v8m0 153v7m1-169v8m0 154v17m1-174v1m0 179v3m2-199v18m0 179v3m1-191v4m1 168v2m2-167v7m0 165v6m1-200v6m0 180v1m1-202v1m0 196v7m1-181v26m1-30v26m0 152v2m1-195v9m0 191v8m1-182v17m0 150v5m1 4v2m1-187v7m0 177v7m1-195v3m0 187v11m1-219v3m0 195v14m1 12v1m1-202v26m1-28v17m0 171v10m1-202v4m0 190v9m1-196v14m1-33v1m0 193v15m1-170v5m1-37v12m1 0v15m0 172v8m1-21v10m2-180v19m1-13v15m0 151v16m1-193v6m1 0v10m0 166v3m1-181v15m1-21v19m0 188v2m1-199v18m0 150v3m1-166v10m1-2v1m0 180v3m1-206v14m0 192v2m1-203v13m0 185v1m1-12v4m1-181v6m1 0v1m0 152v1m1-178v13m0 173v4m1-194v8m0 172v1m1-171v15m0 156v8m1-10v16m1-208v1m0 192v17m1-177v15m1 148v2m1-180v5m0 188v3m1-8v2m1-187v24m0 146v15m1-204v3m0 203v5m1-180v18m0 165v5m1-185v14m0 153v3m1-13v10m1-163v12m0 153v5m1-194v2m1 29v3m0 143v3m1 7v11m1-200v20m0 158v1m1-170v19m0 150v6m1-194v6m0 193v12m1-207v8m0 186v7m1-180v6m0 156v2m1-175v31m0 159v2m1-167v9m0 137v1m1-165v9m0 155v4m2-160v3m0 154v1m1-167v28m2-28v1m0 169v3m1-173v25m0 146v3m1-151v4m0 151v5m1-164v2m0 147v16m1-170v4m0 166v4m1-174v1m0 167v1m1 10v5m1-14v3m1-161v2m0 140v4m1-171v9m0 161v13m1-190v33m0 154v8m1-167v5m0 146v5m1-208v1m1-3v2m0 204v4m1-169v10m0 166v4m1-212v3m0 200v2m1-6v2m1 2v11m1-179v1m0 155v8m1-199v1m2 37v2m1-15v25m1-42v3m1 10v6m1 164v15m1-183v27m0 167v3m1-177v3m0 148v14m1-15v9m1 2v8m1-21v15m1-195v18m0 186v1m1-190v23m1-22v4m0 168v11m1-176v10m0 147v20m1-186v11m0 158v12m1-16v1m1-192v1m0 194v3m1-179v3m1 178v2m1-10v15m1-168v11m0 156v8m1-185v22m1-40v11m0 174v6m1-172v1m0 166v11m1 6v4m1-196v5m0 163v11m1-160v10m1-25v19m0 155v15m1-17v4m1-172v12m0 170v8m1-210v10m1 26v5m1-10v8m0 152v2m1-9v17m1-19v6m1-187v2m0 182v7m1-176v12m0 166v1m1-16v20m1-181v2m0 159v13m2-173v15m0 156v3m1-200v1m2 39v6m1 140v21m1-18v7m1-159v10m0 143v6m1-181v3m1 9v2m0 176v2m1-179v6m1-6v1m0 158v21m1-192v4m1 169v4m1-200v1m0 200v7m1-159v1m0 148v7m1 1v10m1-176v7m1 146v6m1-179v24m0 156v2m1 20v4m1-200v25m0 159v1m1-174v5m0 176v4m1-28v7m1-170v23m0 139v5m1-6v20m1-173v1m0 154v1m1 19v7m1-177v11m0 158v1m1-182v15m0 146v16m1-188v10m1 169v2m1-178v30m0 139v1m1-163v24m0 143v1m1-188v4m1 15v2m0 166v3m1-196v1m0 192v8m1-158v6m0 149v3m1-190v10m1 172v4m1-179v1m1 27v1m1-28v27m1-13v2m0 162v9m1-176v15m0 155v1m1-177v18m0 161v10m1-205v7m0 195v4m1-197v19m0 156v1m1-151v3m1-25v2m1 10v13m0 145v2m1-164v4m1 11v2m1-2v2m0 145v15m1-184v24m0 152v2m1-176v2m0 179v1m1 10v1m1-175v4m0 145v2m1-174v7m0 172v9m1-178v16m0 150v6m2-166v5m0 167v6m1-182v2m0 172v2m1-197v3m0 201v1m1-205v8m0 172v2m1-174v22m0 156v11m1-13v8m1-160v1m0 161v4m1-176v11m0 176v2m1-194v3m0 180v3m1-3v3m1-189v17m0 147v20m1-164v3m0 145v7m1-178v1m0 189v2m1-197v9m0 195v1m1 0v1m1-205v20m0 170v2m1-205v2m0 191v8m1-194v1m0 179v4m1-160v11m0 164v1m1-194v9m0 161v3m2-165v21m0 144v5m1-182v3m1 10v7m0 167v1m1-6v3m1-165v6m1-4v13m1-31v9m0 163v5m1-1v14m1-182v22m0 158v8m1-13v13m1-194v17m1-14v14m0 173v5m2-167v1m0 160v4m1-166v4m0 161v5m1-3v4m1-192v3m0 189v3m1-211v6m0 177v1m1-172v22m0 149v13m1-175v17m0 159v2m1-202v4m0 195v10m1-177v13m0 146v15m1-10v9m1-198v27m1 154v4m1-163v16m0 144v19m1 8v2m1-212v27m0 162v2m2-201v7m0 185v7m1 10v3m1-183v14m0 164v8m1-202v1m1 14v18m0 145v4m1-179v25m0 173v2m1-198v21m0 182v1m1-14v1m1-1v9m1-177v2m1-34v10m0 171v1m1 28v1m2-186v12m0 167v8m1-6v3m1-200v7m0 193v3m1-204v24m0 152v5m1-188v3m0 182v1m1-2v4m1 2v2m1-192v5m0 190v6m1-198v8m0 169v12m1-164v8m0 164v2m1-177v9m0 168v4m1-195v25m1-11v2m0 166v2m1-6v4m1-195v21m0 186v5m1-220v4m0 211v4m1-182v7m1 145v8m1-164v4m0 157v4m1-199v4m0 198v8m1-174v3m0 159v3m1-154v2m0 166v3m1-29v15m1-199v6m0 204v6m1-204v10m0 165v15m1-160v3m1-8v1m0 154v15m1-24v3m1-184v3m0 202v7m1-210v6m0 174v5m1 7v1m1-13v22m1-178v3m0 165v5m1-177v10m1-11v19m0 176v1m1-189v16m1-19v21m1-22v5m0 185v1m1-173v1m0 149v11m1-191v10m0 161v11m1 3v3m1-194v20m0 161v3m1-148v4m0 159v7m1-180v11m0 166v2m1-209v19m0 189v1m1-198v27m1 171v4m1-181v2m1 4v4m0 142v2m1-158v16m0 144v13m1-207v10m1-1v8m0 176v20m1-204v9m0 191v3m1-190v2m0 173v7m1-188v33m1-34v7m1 0v2m0 173v15m1-182v12m0 159v12m1-198v20m0 164v5m1-187v5m0 175v4m1-156v5m1-30v15m0 166v1m1-189v2m0 192v1m1-188v26m0 147v15m1-18v2m1-2v3m1-5v5m1-177v1m0 186v2m1 2v3m1-182v19m1-12v3m0 170v1m1-170v8m0 168v1m1-185v13m0 145v3m1-1v7m1-190v1m0 178v1m1-167v22m0 159v4m1-200v12m0 167v13m1-179v3m1 8v8m0 182v3m1-197v9m0 152v17m1-188v20m0 160v18m1-197v28m0 143v4m1-175v7m0 164v17m1-172v9m0 146v12m1-2v8m1-163v2m0 140v18m1-183v22m0 142v1m1-148v1m1-1v8m0 158v2m1-171v8m0 171v3m1-189v2m0 184v1m1-189v4m0 157v20m1-165v3m0 140v12m1-170v5m0 153v18m1-192v5m0 171v6m1-180v18m0 156v9m1-10v10m1-184v13m0 162v22m1-169v6m0 160v4m1-184v19m0 141v4m1 26v4m1-208v11m1 0v19m0 178v5m1-183v1m0 162v4m1-182v5m0 162v3m1-161v5m0 151v10m1-175v2m0 161v12m1-170v14m0 149v11m1-185v12m0 153v11m1 1v12m1-168v2m0 149v11m1-163v4m0 154v12m1-196v3m1 4v1m1-15v1m1 20v9m0 149v2m1-155v9m1-9v11m0 177v2m2-191v5m0 159v6m1-173v1m0 176v4m1-18v3m1-170v1m0 163v8m1-179v4m2 168v1m1-192v2m0 214v1m1-14v8m1-186v1m1-10v1m0 174v8m1-156v1m0 152v3m1-155v1m0 150v5m1-181v15m0 157v1m1-181v19m1-11v14m0 164v2m1-157v3m0 151v1m1-185v6m0 176v3m1 6v8m1-20v6m1-197v5m1-5v2m0 191v4m1-158v1m0 159v3m1-168v11m0 146v6m1-165v2m0 178v1m1-198v3m0 170v14m1-195v13m0 180v7m1-20v20m1-186v5m0 181v1m1-214v3m1 29v16m0 152v19m1-189v14m0 153v7m1-181v21m0 186v2m1-185v3m0 143v4m2-186v6m0 180v15m1-172v5m0 155v3m1 1v6m1-194v1m0 181v8m1-197v3m1 31v7m1-11v11m0 151v8m1-180v17m0 147v3m1-177v7m0 167v21m1-173v3m0 164v4m1-182v19m1 171v3m1-185v12m0 143v7m1-187v3m1 5v3m0 171v12m1-161v1m0 175v3m1-186v5m0 166v7m1-201v7m0 177v13m1-175v3m0 157v3m1-5v4m1-167v4m0 167v9m1-171v1m0 160v2m1-170v12m0 165v3m1-191v24m0 174v2m1-205v11m0 168v17m1-21v16m1-6v13m1-212v5m0 207v1m1-178v8m0 163v3m1-168v3m1-39v4m1 1v17m1 182v1m1-183v13m0 149v12m1-173v16m0 151v9m1-161v4m0 142v5m1-179v16m0 168v11m1-205v6m1 195v4m1-21v1m1-169v15m0 174v1m1-182v18m0 158v7m1 3v3m1-176v5m0 151v4m1-198v1m0 185v1m1-170v18m1-7v1m0 158v1m1-166v13m0 154v12m1-12v2m1 2v5m1-168v1m0 162v7m1 2v9m2-21v4m1-172v24m0 143v1m1-166v4m0 164v10m1-182v24m2 142v15m1-191v22m1-29v1m0 195v6m1-177v7m0 151v2m1-149v3m0 166v5m1-187v17m0 161v5m1-176v10m1-18v7m0 162v8m1-178v7m0 159v4m1-185v1m0 197v3m1-195v19m0 178v1m1-206v7m1 14v13m1-17v2m0 162v3m1-176v6m1 192v3m1-187v11m0 145v7m1 14v6m1-178v7m1-17v2m0 160v14m1-168v7m0 149v9m1-178v21m0 148v2m2-161v7m0 155v13m2-178v15m0 156v9m1-7v1m1-169v9m0 153v13m1-195v1m0 173v8m1-160v3m1-15v19m1-17v4m0 178v2m1-10v3m1-172v9m0 174v1m1-25v21m1-194v7m0 174v6m1-181v15m0 172v9m1-7v1m1-198v23m1-7v12m1-12v11m0 152v11m1-2v4m1-167v1m0 149v10m1-165v7m1-23v21m0 158v12m1-169v2m0 152v5m1-11v16m1-166v3m0 165v3m1-185v1m0 171v14m1-188v20m0 146v12m1-178v3m0 163v6m1-183v11m2 10v9m0 163v9m1-199v20m0 177v9m1-32v18m1-202v8m0 186v10m1 11v1m1-218v2m0 187v4m1-189v12m0 179v11m1-180v13m1-6v2m0 152v6m2-166v6m1-12v5m0 162v16m2-204v2m0 184v6m1 17v3m1-182v2m1-21v1m0 175v5m1-172v2m0 189v2m2-189v1m0 193v2m1-213v7m0 172v21m2-205v1m0 184v2m1 10v3m1-171v3m1-21v7m0 179v12m1-177v1m0 159v1m1-172v11m0 158v12m1-187v2m0 186v3m1-184v9m0 178v2m1-193v10m1-13v17m1-21v16m0 162v7m1-186v12m0 165v8m1-10v17m2-187v15m0 159v12m1-185v7m0 161v9m2-170v2m1-12v1m0 175v12m1-176v2m0 163v6m1-11v2m1-160v1m0 156v14m1-176v3m0 160v1m1 8v1m1-172v1m0 166v9m1-188v16m2-20v12m0 167v10m2-174v2m0 183v2m1-202v18m1-12v6m0 189v3m1-7v2m1 9v2m1-191v3m0 153v4m1-161v7m0 183v3m1-221v2m1 0v5m0 179v5m1-165v5m0 160v3m1-10v16m1-195v3m0 196v1m1-191v14m0 168v7m1-184v2m0 166v18m1-19v19m1-189v5m0 164v12m1-180v2m0 165v9m2-8v1m1-153v1m0 159v11m1-170v2m1-24v4m0 191v5m1-197v15m0 160v1m2-162v7m1-17v4m0 191v2m1-29v18m1-194v9m1-11v8m0 172v13m2-13v3m1-168v8m0 161v9m1-192v8m0 172v16m1-200v9m0 199v3m2-189v8m0 156v9m1-176v4m0 166v8m1-13v13m1-178v3m0 168v8m1-174v3m0 170v5m1-18v8m2-174v10m1 161v11m1-195v16m1 1v1m0 175v1m1-192v20m0 157v10m1-178v2m0 165v10m1-173v1m1-13v5m1-4v12m0 189v1m1-200v17m0 155v12m1-175v1m0 185v3m1-17v7m1-189v16m0 155v13m1-12v15m1-177v6m0 158v9m1-197v2m1 20v2m1-5v12m1 171v10m2-22v5m1 1v7m1-180v5m0 162v19m1-194v12m0 178v10m1-17v2m1-179v9m0 158v9m1-194v2m0 186v14m2-200v1m1 3v15m0 160v15m1-4v10m1-187v10m0 164v8m1-196v13m0 173v3m1-178v15m0 158v2m1-173v9m0 160v13m1-197v19m1-13v14m0 166v13m1 3v3m1-185v5m0 159v12m1-188v6m0 167v8m1-175v13m1 162v2m1-181v12m0 184v5m1-214v8m0 176v5m1-162v3m0 158v8m1-177v1m0 170v7m1-199v2m0 183v23m1-193v11m0 173v3m1-2v5m1-205v1m0 212v4m1-199v6m0 170v10m1-180v7m0 156v4m1-168v7m0 165v15m1-198v13m0 161v17m1 4v4m1-184v4m1-34v1m0 211v3m1-203v8m0 177v10m1-188v8m0 166v14m1 11v2m1-209v1m0 201v1m1-215v2m0 203v5m1-196v20m0 176v2m1-188v10m0 167v4m1-194v13m0 184v1m1-183v1m0 182v3m1-200v5m0 196v5m1-188v4m1 165v1m1-6v7m2-175v6m0 161v15m1-195v5m0 179v4m1-180v4m0 167v8m1-185v17m0 163v5m1-198v1m0 195v4m1-170v2m0 158v1m1-163v3m0 164v10m1-179v5m0 161v3m1 18v5m2-209v7m1 181v14m1-15v15m1 8v2m1-187v1m0 159v7m1-169v3m0 163v12m1-203v1m0 184v8m1-165v1m0 164v6m1-179v8m0 158v8m1-173v5m0 160v20m1-206v3m1 10v16m1 165v10m1-187v11m0 173v3m1-14v1m1 21v5m1-201v1m0 170v14m1-12v8m1-178v1m0 183v4m1-190v11m0 162v7m1-186v17m0 171v4m1-189v4m0 173v11m1-190v12m0 163v10m1-185v14m0 171v1m1-186v16m0 160v7m1-169v2m1-22v3m0 190v5m1-3v4m1-6v4m1-178v2m0 170v4m1-189v3m0 191v1m1-213v1m0 197v4m1-184v9m0 181v7m1-3v5m1-209v6m0 178v7m1-186v7m0 191v1m1-213v2m0 212v5m1-206v21m0 158v16m1-194v2m0 172v19m1-173v3m1-16v3m0 164v21m1-195v23m0 147v6m1-184v1m1 25v3m0 153v8m1-187v11m0 203v2m1-198v10m0 173v7m1-198v28m0 156v7m1-176v14m0 143v10m1-164v12m1-9v8m0 129v24m1-156v2m0 138v6m1-183v4m0 168v12m1-158v11m0 129v2m1-149v23m0 142v8m1-182v4m1 0v20m0 135v14m1 7v3m1-181v8m0 180v6m1-36v3m1-136v3m1-26v26m0 133v5m1-159v20m0 150v3m1-156v3m1-13v3m0 140v20m1-187v4m0 159v1m1-129v4m0 125v26m1-164v12m0 127v25m1-176v1m0 148v11m1-159v6m0 151v3m1-142v4m0 134v1m1-165v15m1-18v9m1-14v1m0 163v18m1-153v3m0 145v2m1-167v3m0 149v4m1-163v6m0 175v5m1 2v1m1-175v16m0 135v5m1-11v25m1-179v8m0 157v23m1-184v28m2-32v1m0 165v7m1-189v3m0 168v15m1-181v5m0 188v9m1-188v10m0 146v13m1-165v13m0 166v3m1-194v11m1-15v7m0 162v11m1-160v11m1 142v13m1 10v3m1-192v33m0 133v18m1-21v20m1-164v16m0 125v7m1-155v2m0 185v2m1-30v12m1-180v30m1-34v32m0 154v3m1-180v22m0 148v11m1-166v8m0 156v10m1-17v7m1-191v2m0 190v3m1-165v4m0 126v5m2-151v24m0 133v1m1-168v20m0 138v15m1-147v2m0 173v2m1-173v3m1-26v28m0 128v7m1-152v12m0 150v4m1-162v2m0 161v12m1-163v1m0 156v2m1-188v13m1-26v2m0 182v6m1-15v24m1-176v20m0 141v8m1-169v11m0 131v13m1-7v19m1-189v9m1 154v2m1-152v8m0 182v2m1-190v4m0 167v9m1-205v4m1 3v5m0 164v16m1-170v15m0 136v15m1 5v3m1-177v29m0 126v19m1-147v8m0 129v1m1-144v14m1-21v8m0 133v15m1-157v18m0 125v8m1-163v13m0 141v17m1-162v2m0 165v4m1-166v8m0 153v13m1-177v11m0 135v11m1-4v7m1-185v3m0 196v7m1-191v9m0 174v2m1-185v14m0 152v13m1-171v13m1 150v4m1-195v1m0 173v4m1-167v17m0 152v17m1-160v17m1-22v18m0 124v3m1-129v3m0 132v11m1-166v3m0 181v2m1-178v12m1-33v4m0 200v1m2-7v1m2-196v6m0 157v1m1-173v6m1-16v1m0 175v22m1-174v24m0 144v13m1-174v12m0 165v2m2-206v1m0 169v25m1-165v19m0 120v7m1-162v5m0 161v2m1-138v2m1-13v2m0 136v6m1-152v12m0 161v4m1-181v2m0 157v5m1-141v2m1-17v19m1-33v27m0 142v7m1-192v1m0 170v23m2-167v22m0 121v22m1-195v4m1 1v9m0 174v3m1-17v3m1-161v25m1-18v26m0 123v12m1-154v12m0 139v2m1-144v11m0 127v26m1-31v21m1-165v26m0 119v25m1-178v18m0 152v18m1-178v13m0 133v18m1-179v28m0 138v1m1-144v1m0 134v1m1-129v3m0 123v8m1 37v5m1-201v1m0 181v2m1-166v17m0 164v4m1-196v18m0 130v14m1-153v3m0 181v1m1-29v19m1-174v16m0 123v23m1-188v6m0 211v1m1-42v2m1-18v6m1-141v19m0 116v10m1 27v1m1 0v7m1-187v15m0 138v15m1-148v3m0 129v11m1-145v6m0 170v1m1-1v2m1-200v4m0 176v9m1-190v1m0 159v21m1-178v25m0 163v1m1-42v13m1-14v17m1-16v2m1-147v1m0 165v18m1-40v1m1-139v8m1-37v1m0 179v14m1-192v2m1 34v6m0 122v18m1-175v12m0 170v3m1-17v1m1-144v4m0 138v1m1-158v1m0 150v1m1-145v2m0 185v2m1-182v3m0 151v18m1-182v21m0 137v4m1-179v1m1 159v6m1 35v2m1-184v14m0 128v11m1-4v10m1-165v23m1-31v1m0 181v4m1-171v1m0 163v7m1-174v5m0 157v8m2-172v15m0 137v16m1-171v6m0 150v12m1-170v2m0 165v16m2-183v7m1 5v1m0 154v11m1 2v8m1-178v3m0 161v6m1-176v1m0 162v9m2-169v4m0 170v1m1-13v7m1-169v4m0 154v5m1-162v1m0 156v4m2-155v2m1 4v2m1 138v2m1-7v3m3-123v1m0 107v2m1-110v2m0 103v2m1-5v1m2-6v1m2-80v1m3 7v1m3 7v1m1 36v1" stroke="url(#gR)" stroke-opacity="0.5" stroke-width="1" fill="none"/>
<path d="M34.5 556v11m1-11v6m2-6v8m4 81v6m7-96v9m10 76v14m1-99v12m1 84v3m1-98v11m8 74v13m6-6v6m1-95v2m2 86v7m5-95v5m2 82v7m2-95v11m2 80v4m1-96v11m1-12v13m3 74v8m2-5v5m5-98v5m1-5v4m6 88v5m4-5v6m1-97v14m1-13v3m2-3v1m1 0v4m1-4v13m1 71v13m1-96v7m1-7v11m1 74v12m1-3v4m1-97v11m2 76v10m2-9v10m1-98v10m1 75v13m4-2v2m4-9v8m3-102v15m0 83v4m4-104v13m0 88v3m1-5v5m3-6v5m1-14v14m3-107v10m6-11v11m3-11v5m2-5v14m4-14v14m0 83v9m2-106v3m1 90v12m1-105v14m1 84v7m9-105v10m2 87v9m11-1v7m1-10v11m5-120v5m1-5v3m1 105v17m3-125v6m4 118v4m1-6v7m1-13v13m1-16v17m4-129v6m1 110v14m1-11v12m1-130v18m5-18v17m1-17v12m1-12v6m2-6v18m5 115v2m5-137v14m0 110v13m3-139v4m0 130v5m1-2v3m1-1v1m1-141v12m0 120v9m6-142v1m1 131v10m5-2v2m1-143v15m4-16v6m0 126v12m6-144v6m3-7v3m4-3v18m1 115v13m2-147v2m2 124v21m3-148v7m2 129v13m2-150v10m14-13v21m3 131v2m1-154v12m4 127v15m1-154v19m6-18v14m0 124v14m5-4v3m3-150v2m2-2v21m4 118v10m3-149v20m12-22v20m1 122v13m1-155v7m2 137v11m1-9v9m6-156v3m4 152v2m5-157v20m1 120v18m1-1v1m2-14v14m5-159v8m1-8v13m1-13v7m5-7v8m0 146v5m1-13v13m7-2v2m3-155v18m3-17v5m5-3v16m0 119v15m1-7v7m1-21v21m5-150v2m4-3v20m11-22v15m0 133v7m4-155v5m2-5v14m5-14v7m2 126v23m4-9v9m4-155v12m1-11v5m1-5v1m11 140v12m1-16v16m1-4v4m2-13v13m2-144v12m2-12v4m1 121v20m8-144v11m1-11v17m1 107v21m2-6v6m1-9v9m3-145v7m1-7v1m2-1v18m0 125v2m9-144v14m1-13v14m1 123v3m4-140v18m1-18v18m3 103v17m4-16v17m4-13v13m1-138v1m0 121v16m5-20v20m1-4v5m2-19v19m2-139v10m6 110v19m3-3v3m2-139v1m0 127v11m1-139v16m3-17v16m0 101v24m1-141v5m0 125v11m1-141v17m0 106v18m1-20v20m2-7v7m2-3v3m2-23v23m1-144v16m0 109v19m4-12v13m5-145v11m1 127v7m1-145v16m4 125v3m2-142v1m1 140v1m2-141v16m0 123v1m2-19v19m1-139v18m1 106v14m4-136v5m4-5v8m4-8v14m0 121v1m3-12v13m5-22v24m1-11v11m1-142v6m1 115v22m3-18v19m8-17v19m1-148v13m1 116v18m5-147v11m9-12v18m3 107v21m1-24v24m2-146v4m6-3v14m4 114v16m4-142v14m2 105v21m14-137v12m3-12v5m0 122v9m5-9v10m5-12v13m1-139v9m1-9v2m0 126v11m5-140v5m5-5v12m1 114v15m3-6v6m1-7v7m1-141v17m2 105v19m2-141v5m0 121v14m2-140v8m3-7v2m1-2v11m0 115v13m1-139v13m1 114v12m2-4v4m4-139v7m1 131v1m1-14v14m2-16v15m1-139v16m4-16v12m0 117v10m4-140v14m1 109v16m2-22v22m4-139v13m0 116v10m4-139v3m0 130v6m2-139v6m2-6v16m2-16v9m0 128v2m1-22v22m4-139v3m0 114v22m1-13v13m3-138v11m5-11v15m1 117v5m1-18v18m2-137v11m2-11v7m2 113v18m4-139v1m2 127v11m1-140v9m10-11v3m2-3v12m0 127v5m3-22v22m5-144v18m2-18v16m2-16v11m2-11v16m3-16v8m0 118v16m5-142v11m1-11v10m4 123v7m2-140v7m2 130v4m1-4v4m3-140v6m2 118v17m13-21v23m2-140v13m1 113v14m4-140v1m1-1v2m4-3v18m5-20v16m5 120v7m2-144v14m2 119v11m1-144v9m0 116v19m5-22v21m8-140v12m1-11v4m1 133v1m1-138v3m12 131v3m5-10v11m5-136v11m1 103v24m1-138v12m1-12v15m7 123v2m2-140v9m1 117v14m3-9v9m10-142v14m5 104v19m4-139v6m0 115v17m2-3v3m1-17v17m2-5v5m5-4v4m1-16v16m8-11v11m3-139v5m0 126v9m1-140v8m5-8v3m4 128v9m2-8v9m7-141v6m0 136v1m4-144v8m1 133v4m1-16v16m2-145v17m2 116v13m1-22v22m3-146v7m1 123v15m1-22v22m2-16v16m3-9v8m6-5v3m2-143v7m2 119v16m1-142v16m1 125v1m1-18v18m1-142v14m4-14v17m3 109v16m2-18v18m1-142v16m2-16v17m3 124v2m3-19v19m2-142v7m0 129v6m1-142v9m1 119v14m1-14v14m1-142v9m2-9v1m1 123v19m1-143v10m3-10v19m8 116v8m2-10v10m7-139v16m0 102v22m1-140v4m2-4v12m1-12v6m0 119v15m3-140v5m5-6v8m4-9v13m3-14v5m1-5v1m1-2v16m2-16v15m3-15v4m0 137v2m2-13v13m1-2v2m6-144v13m4-13v19m0 120v5m3-7v7m4-145v10m1 112v23m2-145v10m2-10v12m1 126v8m4-14v14m4-146v15m3-15v8m1-9v3m3-3v20m2-20v13m3-13v19m1-20v21m0 115v12m5-8v8m2-150v19m0 123v8m3-6v6m3-14v14m1-151v5m2 145v1m2-16v16m3-16v16m3-153v21m4 111v21m4-153v4m1-4v7m2-7v20m3-20v17m0 113v22m8-150v19m2 110v19m2-148v8m2 128v12m4-18v18m10-1v3m3-150v17m1-17v18m4-18v15m3 138v1m1-154v2m7-2v1m1-1v17m0 133v3m1-154v20m5-20v16m2-17v18m4-18v15m1 123v14m2-10v10m1-12v12m5-153v12m4-12v12m3-12v11m1 134v7m1-15v15m3-153v13m1 124v16m5-6v5m2-4v4m1-153v2m1 136v15m1-153v17m0 132v4m1-9v9m4-8v8m3-153v16m1 116v22m1-20v20m1-155v17m5 136v3m4-157v7m3 128v23m7-158v7m1 139v13m1-158v8m1-8v11m1-10v3m0 144v10m8-5v7m2-156v9m8 141v6m6-156v11m1 140v5m1-156v7m2-7v4m0 133v19m5-156v5m10 139v1m5-133v19m2-17v13m0 92v19m1-8v7m1-14v13m6-8v8m5-15v15m1-123v12m1-12v10m2-10v2m1-2v11m2-11v4m0 100v19m2-14v14m2-3v3m1-11v11m3-122v13m4-13v6m4-6v13m5 92v17m2-121v17m3 92v12m5-11v11m3-120v6m2-6v2m7 114v3m2-11v10m4-118v16m2-15v16m0 84v18m2-17v17m2-118v10m0 92v17m4-118v14m3 100v5m5-5v6m5-2v2m5-17v17m2-120v8m0 104v7m1-13v13m1-120v16m0 90v14m8-15v14m1-120v15m0 98v7m1-5v5m1-17v17m4-121v1m1 111v9m3-120v14m1 90v16m2-120v7m4-7v10m4-9v16m0 93v9m1-7v7m19-118v9m1-9v12m4-13v6m1 99v14m1-119v7m2-8v8m0 97v15m2-120v15m2-15v18m1-18v18m1-18v1m7 113v6m3-120v2m2-2v9m0 96v15m4-126v5m0 113v14m5-139v7m1-8v11m0 136v1m3-150v20m1-20v9m0 135v7m4-149v10m0 136v1m2-141v17m2-12v10m3 90v16m5-92v1m2 5v1m1 1v3m11 32v1m1-2v1" stroke="#3e3e3e" stroke-opacity="0.55" stroke-width="1" fill="none"/>
<rect x="1566" y="603.5" width="20" height="1" fill="#5e9cf5" opacity="0.8"/>
</g>
</svg>
<div class="a" style="left:29px;top:442px;width:1609px;height:1px;background:#7a8088"></div>
<div class="a" style="left:1587px;top:119px;width:2px;height:648px;background:#575757"></div>
<!-- playhead -->
<div class="a" style="left:27px;top:119px;width:2px;height:647px;background:repeating-linear-gradient(#d4cc46 0 2px,transparent 2px 3.7px)"></div>
<svg class="a" style="left:19px;top:104px" width="20" height="20">
<defs><linearGradient id="phg" x1="0" y1="0" x2="0" y2="1"><stop offset="0" stop-color="#f4b63a"/><stop offset="1" stop-color="#d99a2a"/></linearGradient></defs>
<path d="M9 18.5C7.5 15.5 2 11.5 2 7.5C2 3.5 5 1 9 1C13 1 16 3.5 16 7.5C16 11.5 10.5 15.5 9 18.5Z" fill="url(#phg)"/>
</svg>
<svg class="a" style="left:1578px;top:109px" width="12" height="11"><path d="M1 1H9.5V10Z" fill="#a9a9a9"/></svg>
<!-- dB scale ticks -->
<svg class="a" style="left:1589px;top:115px" width="10" height="655">
<g stroke="#5a6066" stroke-width="1">
<path d="M0 4.5H4M0 21.5H4M0 37.5H4M0 64H4M0 84H4M0 114H4M0 149H4M0 165H4M0 181.5H4M0 216.5H4M0 246H4M0 266.5H4M0 292H4M0 308.5H4"/>
<path d="M0 346H4M0 362H4M0 388.5H4M0 408.5H4M0 438H4M0 473H4M0 489.5H4M0 505.5H4M0 540.5H4M0 570.5H4M0 590.5H4M0 617H4M0 633H4M0 651H4"/>
</g></svg>
<!-- ruler -->
<div class="a" style="left:28px;top:767px;width:1560px;height:1px;background:#41474e"></div>
<svg class="a" style="left:0;top:766px" width="1670" height="24"><g stroke="#4d535a" stroke-width="1.2">
<path d="M28.0 1V18M62.7 1V5M97.5 1V18M132.2 1V5M166.9 1V18M201.6 1V5M236.4 1V18M271.1 1V5M305.8 1V18M340.5 1V5M375.2 1V18M410.0 1V5M444.7 1V18M479.4 1V5M514.2 1V18M548.9 1V5M583.6 1V18M618.3 1V5M653.1 1V18M687.8 1V5M722.5 1V18M757.2 1V5M792.0 1V18M826.7 1V5M861.4 1V18M896.1 1V5M930.9 1V18M965.6 1V5M1000.3 1V18M1035.0 1V5M1069.8 1V18M1104.5 1V5M1139.2 1V18M1173.9 1V5M1208.7 1V18M1243.4 1V5M1278.1 1V18M1312.8 1V5M1347.5 1V18M1382.3 1V5M1417.0 1V18M1451.7 1V5M1486.5 1V18M1521.2 1V5M1558.8 1V5"/></g></svg>
<!-- right icons -->
<svg class="a" style="left:1630px;top:550px" width="40" height="230">
<g stroke="#c27c2a" stroke-width="1.3" fill="none">
<path d="M10.7 22.7 L19.7 16.7 L23.1 21.4 L25.7 19.3 L29.1 22.7"/>
<path d="M12.0 15.8 L19.7 12.0 L22.7 15.4 L24.8 13.7 L27.8 15.8"/>
<path d="M13.3 10.7 L20.1 7.3 L22.7 10.7 L25.3 8.6 L27.8 10.7"/>
</g>
<g stroke="#3272c8" stroke-width="1.8">
<path d="M11.6 38.5V42.8"/>
<path d="M15.5 36.8V44.5"/>
<path d="M19.5 33.0V46.7"/>
<path d="M23.2 36.8V44.5"/>
<path d="M26.8 38.5V42.8"/>
</g>
<circle cx="17.40000000000009" cy="64.5" r="6.8" stroke="#b0b4b8" stroke-width="1.3" fill="none"/><path d="M22.2 69.3L27.9 75.0M14.2 64.5H20.6M17.40000000000009 61.3V67.7" stroke="#b0b4b8" stroke-width="1.4"/>
<rect x="15" y="91" width="8.8" height="95" rx="4.4" fill="#5a6168"/>
<rect x="15" y="166" width="8.8" height="20" rx="4.4" fill="#3a86f0"/>
<circle cx="19.299999999999955" cy="172.5" r="7.8" fill="#e6e6e6"/><circle cx="19.299999999999955" cy="172.5" r="1.8" fill="#555b60"/>
<circle cx="17.40000000000009" cy="208.5" r="6.8" stroke="#b0b4b8" stroke-width="1.3" fill="none"/><path d="M22.2 213.3L27.9 219.0M14.2 208.5H20.6" stroke="#b0b4b8" stroke-width="1.4"/>
</svg>
<!-- toolbar -->
<svg class="a" style="left:0;top:790px" width="1670" height="56">
<g stroke="#3b8bec" stroke-width="2">
<path d="M1.6 18.7V24.1"/>
<path d="M6.6 17.0V25.7"/>
<path d="M11.7 11.6V31.1"/>
<path d="M16.7 17.0V25.7"/>
<path d="M21.8 18.7V24.1"/>
</g>
<rect x="25.7" y="16.700000000000045" width="107.3" height="9" rx="4.5" fill="#5a6168"/>
<path d="M30.2 16.700000000000045H79.4A4.5 4.5 0 0 1 79.4 25.700000000000045H30.2A4.5 4.5 0 0 1 30.2 16.700000000000045Z" fill="#3a86f0"/>
<circle cx="33" cy="21" r="7.8" fill="#e6e6e6"/><circle cx="33" cy="21" r="1.8" fill="#555b60"/>
<g stroke="#f0a535" stroke-width="1.5" fill="none" stroke-linejoin="miter">
<path d="M143.7 31.8 L156.1 24.5 L160.1 30.8 L163.8 27.5 L168.9 31.8"/>
<path d="M145 22.8 L156.1 16.7 L160.1 22.4 L163.2 19.4 L167.2 22.8"/>
<path d="M147.1 15.7 L155.8 11.4 L159.8 15.0 L162.5 12.4 L165.5 15.7"/>
</g>
<path d="M176.5 8V33" stroke="#41474d" stroke-width="1.6"/>
<path d="M553 8V34" stroke="#41474d" stroke-width="1.6"/>
<path d="M629.5 8V34" stroke="#41474d" stroke-width="1.6"/>
<path d="M1188 7.5V33" stroke="#41474d" stroke-width="1.6"/>
<rect x="188.6" y="10.600000000000023" width="18" height="20.4" rx="1" stroke="#b0b4b8" stroke-width="1.7" fill="none"/>
<g stroke="#b0b4b8" stroke-width="1.2"><path d="M191.2 12.600000000000023H198.7M201 12.600000000000023H204.1M191.2 16.5H204.1M191.2 20.100000000000023H204.1M191.2 23.799999999999955H204.1M191.2 27.5H204.1"/></g>
<path d="M221.8 26.4A11 11 0 1 1 226.5 30.4L221.3 32.6Z" stroke="#b0b4b8" stroke-width="1.5" fill="none" stroke-linejoin="round"/>
<g stroke="#b0b4b8" stroke-width="1.1"><path d="M226.3 17.4H236M226.3 20.1H234M226.3 22.6H234"/></g>
<circle cx="421.6" cy="18.7" r="9.2" stroke="#b0b4b8" stroke-width="1.4" fill="none"/><path d="M428.1 25.2L434.7 31.8" stroke="#b0b4b8" stroke-width="1.5"/>
<path d="M418 18.700000000000045H425.2M421.6 15.100000000000023V22.299999999999955" stroke="#b0b4b8" stroke-width="1.6"/>
<circle cx="456.8" cy="18.7" r="9.2" stroke="#b0b4b8" stroke-width="1.4" fill="none"/><path d="M463.3 25.2L469.9 31.8" stroke="#b0b4b8" stroke-width="1.5"/>
<path d="M452.5 18.700000000000045H461.1" stroke="#b0b4b8" stroke-width="1.6"/>
<circle cx="491.5" cy="18.6" r="9.2" stroke="#b0b4b8" stroke-width="1.4" fill="none"/><path d="M498.0 25.1L504.6 31.7" stroke="#b0b4b8" stroke-width="1.5"/>
<rect x="482.5" y="10" width="24.5" height="24" stroke="#b0b4b8" stroke-width="1.3" fill="none" stroke-dasharray="2.2 2.6"/>
<circle cx="527" cy="18.7" r="9.2" stroke="#b0b4b8" stroke-width="1.4" fill="none"/><path d="M533.5 25.2L540.1 31.8" stroke="#b0b4b8" stroke-width="1.5"/>
<g stroke="#b0b4b8" stroke-width="1.3" fill="none"><path d="M523 22.700000000000045L531 14.700000000000045M526.5 14.700000000000045H531V19.200000000000045M523 18.200000000000045V22.700000000000045H527.5"/></g>
<circle cx="570.8" cy="18.6" r="9.2" stroke="#b0b4b8" stroke-width="1.4" fill="none"/><path d="M577.3 25.1L583.9 31.7" stroke="#b0b4b8" stroke-width="1.5"/>
<path d="M601.5 27.5L597.3 21.5C596.3 20 598.5 18.299999999999955 600 19.600000000000023L601.8 21.5V12.5C601.8 10.5 605 10.5 605 12.5V19V10.799999999999955C605 8.700000000000045 608.5 8.700000000000045 608.5 10.799999999999955V19V11.5C608.5 9.5 612 9.5 612 11.5V19V13.5C612 11.5 615.3 11.5 615.3 13.5V25.5C615.3 31 612 34 608 34C605 34 603 30 601.5 27.5Z" stroke="#b0b4b8" stroke-width="1.3" fill="none" stroke-linejoin="round"/>
<rect x="642" y="12.700000000000045" width="17.3" height="17" rx="2" stroke="#50565c" stroke-width="1.5" fill="none"/>
<rect x="781" y="9" width="100.2" height="24" rx="3" stroke="#363b41" stroke-width="1.3" fill="none"/>
<path d="M864.5 18.5L870 23.5L875.5 18.5" stroke="#50565c" stroke-width="1.5" fill="none"/>
<rect x="890.7" y="10.100000000000023" width="23" height="22.7" stroke="#3a8af0" stroke-width="1.4" fill="none" stroke-dasharray="2.2 2.6"/>
<rect x="897" y="13" width="10.5" height="17" fill="#3a8af0"/>
<rect x="925.7" y="10.100000000000023" width="23.6" height="22.7" stroke="#c0c4c8" stroke-width="1.3" fill="none" stroke-dasharray="2.2 2.6"/>
<rect x="930" y="14" width="15" height="15" fill="#b0b4b8"/>
<rect x="960.7" y="10.100000000000023" width="23.6" height="22.7" stroke="#c0c4c8" stroke-width="1.3" fill="none" stroke-dasharray="2.2 2.6"/>
<rect x="964" y="17" width="17" height="10" fill="#b0b4b8"/>
<ellipse cx="1007.5" cy="18.700000000000045" rx="12.2" ry="7.5" stroke="#b0b4b8" stroke-width="1.4" fill="none"/>
<path d="M1004 26C1008 28 1007 31 1003 33" stroke="#b0b4b8" stroke-width="1.3" fill="none"/>
<g stroke="#b0b4b8" stroke-width="1.4" fill="none" stroke-linejoin="round"><path d="M1031.5 19L1039.5 10.5L1050 21L1042 29Z"/><path d="M1034.5 16L1038 19.5M1037 13.5L1040.5 17M1040 11.5L1043.5 15"/></g>
<path d="M1046 25L1054.5 33.5" stroke="#b0b4b8" stroke-width="2.6"/>
<path d="M1069 11L1071.5 15.5L1066.5 19L1072 19L1074.5 23L1076 18.5L1080.5 16L1075.5 14.5L1075 9.5L1072 13Z" stroke="#b0b4b8" stroke-width="1.2" fill="none" stroke-linejoin="round"/>
<path d="M1077.5 19.5L1090 33" stroke="#b0b4b8" stroke-width="1.3"/>
<rect x="1100" y="11" width="11" height="4" rx="1" fill="#696e73"/><rect x="1100" y="18.299999999999955" width="18.5" height="4.5" rx="1" fill="#696e73"/><rect x="1100" y="27" width="25" height="4.5" rx="1" fill="#696e73"/>
<g stroke="#3a8af0" stroke-width="1.4" fill="none" stroke-linejoin="round"><path d="M1133.5 8.5C1142 10 1152 15 1154 23L1158.5 32.5"/><path d="M1133.5 8.5C1134 16 1139 23 1145.5 26L1146 23.5L1149 27.5L1151 25L1154 28"/><path d="M1133.5 8.5L1140 14L1140.5 11.5M1140 14L1146 18.5L1147.5 15.5M1146 18.5L1151 22.5"/></g>
<path d="M1163.5 13H1179L1171.2 23.5Z" fill="#b0b4b8"/>
<g stroke="#b0b4b8" stroke-width="1.3" fill="none"><path d="M1203.6 22.700000000000045L1209.5 29.299999999999955M1212.2 28.700000000000045L1219.2 13.5"/><circle cx="1201.8" cy="20.799999999999955" r="2.6"/><circle cx="1211" cy="31.299999999999955" r="2.6"/><circle cx="1220.5" cy="11" r="2.6"/></g>
<circle cx="1517.9" cy="19" r="6.6" stroke="#b0b4b8" stroke-width="1.3" fill="none"/><path d="M1514.8 19H1521M1522.6 23.700000000000045L1528.3 29.5" stroke="#b0b4b8" stroke-width="1.4"/>
<rect x="1529" y="17" width="105.3" height="8.3" rx="4.15" fill="#5a6168"/>
<circle cx="1535.5" cy="21" r="7.8" fill="#e6e6e6"/><circle cx="1535.5" cy="21" r="1.8" fill="#555b60"/>
<circle cx="1652" cy="19.299999999999955" r="6.6" stroke="#b0b4b8" stroke-width="1.3" fill="none"/><path d="M1648.9 19.299999999999955H1655.1M1652 16.200000000000045V22.399999999999977M1656.7 24L1662.4 29.799999999999955" stroke="#b0b4b8" stroke-width="1.4"/>
</svg>
<!-- bottom panel -->
<div class="a" style="left:0;top:846px;width:1666px;height:100px;background:#1e2129;border-radius:7px 7px 0 0"></div>
<svg class="a" style="left:0;top:846px" width="1670" height="88">
<path d="M74.5 13.5H85.2L79.85 22Z" fill="#7a8086"/>
<g stroke="#b0b4b8" stroke-width="1.4" fill="none"><path d="M207 51V48A9.3 9.3 0 0 1 225.2 48V51"/><rect x="205.7" y="48.5" width="4.5" height="11.5" rx="1.5"/><rect x="221.8" y="48.5" width="4.5" height="11.5" rx="1.5"/></g>
<circle cx="243.5" cy="49.299999999999955" r="7.6" fill="#a8acb0"/>
<path d="M264 40V58.5" stroke="#b0b4b8" stroke-width="1.6"/><path d="M281.5 39.799999999999955V58.799999999999955L267 49.299999999999955Z" fill="#a8acb0"/>
<path d="M294.5 39.799999999999955V58.799999999999955L308.5 49.299999999999955Z" fill="#a8acb0"/>
<rect x="317.8" y="37.5" width="24" height="24" stroke="#b0b4b8" stroke-width="1.2" fill="none" stroke-dasharray="2 2.5"/><path d="M323.5 40.5V58L337 49.299999999999955Z" fill="#a8acb0"/>
<g stroke="#b0b4b8" stroke-width="1.4" fill="none"><path d="M354 46A9 9 0 0 1 371 46"/><path d="M371 53A9 9 0 0 1 354 53"/></g>
<path d="M351 47H357.5L354.2 53Z" fill="#b0b4b8"/><path d="M367.8 52.5H374.3L371 46.5Z" fill="#b0b4b8"/>
<g stroke="#3a8af0" stroke-width="1.8"><path d="M386 37V61.5M404.5 37V61.5M388 41.5H400"/></g><path d="M400 38.5L404 41.5L400 44.5Z" fill="#3a8af0"/><path d="M388.5 44V59L400 51.5Z" fill="#3a8af0"/>
<path d="M420.7 10V88" stroke="#101215" stroke-width="1.6"/>
<path d="M478.2 32V40.5M517.8 32V40.5M575.4 32V40.5M644.3 32V40.5M716.7 32V40.5M790.6 32V40.5M871.8 32V40.5M894 32V40.5M916.3 32V40.5M939.3 32V40.5M458 35.5V40.5M495.5 35.5V40.5M545.3 35.5V40.5M609.6 35.5V40.5M680.3 35.5V40.5M752.8 35.5V40.5M828 35.5V40.5M864.8 35.5V40.5M879.2 35.5V40.5M887 35.5V40.5M901.5 35.5V40.5M909.3 35.5V40.5M924.1 35.5V40.5M931.9 35.5V40.5M446.4 32V40.5M450.4 32V40.5" stroke="#5d636a" stroke-width="1.2"/>
<rect x="446" y="41" width="494" height="10" fill="#121417"/><rect x="446" y="64.79999999999995" width="494" height="10" fill="#121417"/>
<rect x="945.3" y="41" width="10" height="10" fill="#121417"/><rect x="945.3" y="64.79999999999995" width="10" height="10" fill="#121417"/>
<path d="M995.3 11V88" stroke="#101215" stroke-width="1.6"/>
<path d="M1353 11V88" stroke="#101215" stroke-width="1.6"/>
<path d="M1554.7 11V88" stroke="#101215" stroke-width="1.6"/>
</svg>
<div class="t" style="left:140.5px;top:19.7px;font-size:16px;color:#3d8de6;transform:scaleX(0.948);transform-origin:left">Discobonus - Spend Your…Money Maxi Version).wav</div>
<div class="t" style="left:31.0px;top:772.7px;font-size:13.5px;color:#878d93">0:00</div>
<div class="t" style="left:100.5px;top:772.7px;font-size:13.5px;color:#878d93">0:20</div>
<div class="t" style="left:169.9px;top:772.7px;font-size:13.5px;color:#878d93">0:40</div>
<div class="t" style="left:239.4px;top:772.7px;font-size:13.5px;color:#878d93">1:00</div>
<div class="t" style="left:308.8px;top:772.7px;font-size:13.5px;color:#878d93">1:20</div>
<div class="t" style="left:378.2px;top:772.7px;font-size:13.5px;color:#878d93">1:40</div>
<div class="t" style="left:447.7px;top:772.7px;font-size:13.5px;color:#878d93">2:00</div>
<div class="t" style="left:517.2px;top:772.7px;font-size:13.5px;color:#878d93">2:20</div>
<div class="t" style="left:586.6px;top:772.7px;font-size:13.5px;color:#878d93">2:40</div>
<div class="t" style="left:656.1px;top:772.7px;font-size:13.5px;color:#878d93">3:00</div>
<div class="t" style="left:725.5px;top:772.7px;font-size:13.5px;color:#878d93">3:20</div>
<div class="t" style="left:795.0px;top:772.7px;font-size:13.5px;color:#878d93">3:40</div>
<div class="t" style="left:864.4px;top:772.7px;font-size:13.5px;color:#878d93">4:00</div>
<div class="t" style="left:933.9px;top:772.7px;font-size:13.5px;color:#878d93">4:20</div>
<div class="t" style="left:1003.3px;top:772.7px;font-size:13.5px;color:#878d93">4:40</div>
<div class="t" style="left:1072.8px;top:772.7px;font-size:13.5px;color:#878d93">5:00</div>
<div class="t" style="left:1142.2px;top:772.7px;font-size:13.5px;color:#878d93">5:20</div>
<div class="t" style="left:1211.7px;top:772.7px;font-size:13.5px;color:#878d93">5:40</div>
<div class="t" style="left:1281.1px;top:772.7px;font-size:13.5px;color:#878d93">6:00</div>
<div class="t" style="left:1350.5px;top:772.7px;font-size:13.5px;color:#878d93">6:20</div>
<div class="t" style="left:1420.0px;top:772.7px;font-size:13.5px;color:#878d93">6:40</div>
<div class="t" style="left:1489.5px;top:772.7px;font-size:13.5px;color:#878d93">7:00</div>
<div class="t" style="left:1553.5px;top:772.7px;font-size:13.5px;color:#878d93;transform:scaleX(0.970);transform-origin:left">h:m:s</div>
<div class="t" style="left:1595.3px;top:124.2px;font-size:13.5px;color:#878d93;transform:scaleX(0.970);transform-origin:left">dB</div>
<div class="t" style="left:1595.3px;top:145.2px;font-size:13.5px;color:#878d93;transform:scaleX(0.970);transform-origin:left">-2</div>
<div class="t" style="left:1595.3px;top:171.7px;font-size:13.5px;color:#878d93;transform:scaleX(0.970);transform-origin:left">-4</div>
<div class="t" style="left:1595.3px;top:191.7px;font-size:13.5px;color:#878d93;transform:scaleX(0.970);transform-origin:left">-6</div>
<div class="t" style="left:1595.3px;top:221.7px;font-size:13.5px;color:#878d93;transform:scaleX(0.970);transform-origin:left">-10</div>
<div class="t" style="left:1595.3px;top:256.7px;font-size:13.5px;color:#878d93;transform:scaleX(0.970);transform-origin:left">-20</div>
<div class="t" style="left:1595.3px;top:273.2px;font-size:13.5px;color:#878d93;transform:scaleX(0.970);transform-origin:left">-∞</div>
<div class="t" style="left:1595.3px;top:289.7px;font-size:13.5px;color:#878d93;transform:scaleX(0.970);transform-origin:left">-20</div>
<div class="t" style="left:1595.3px;top:324.7px;font-size:13.5px;color:#878d93;transform:scaleX(0.970);transform-origin:left">-10</div>
<div class="t" style="left:1595.3px;top:354.2px;font-size:13.5px;color:#878d93;transform:scaleX(0.970);transform-origin:left">-6</div>
<div class="t" style="left:1595.3px;top:374.7px;font-size:13.5px;color:#878d93;transform:scaleX(0.970);transform-origin:left">-4</div>
<div class="t" style="left:1595.3px;top:400.2px;font-size:13.5px;color:#878d93;transform:scaleX(0.970);transform-origin:left">-2</div>
<div class="t" style="left:1595.3px;top:416.7px;font-size:13.5px;color:#878d93;transform:scaleX(0.970);transform-origin:left">-1</div>
<div class="t" style="left:1595.3px;top:454.2px;font-size:13.5px;color:#878d93;transform:scaleX(0.970);transform-origin:left">-1</div>
<div class="t" style="left:1595.3px;top:470.2px;font-size:13.5px;color:#878d93;transform:scaleX(0.970);transform-origin:left">-2</div>
<div class="t" style="left:1595.3px;top:496.7px;font-size:13.5px;color:#878d93;transform:scaleX(0.970);transform-origin:left">-4</div>
<div class="t" style="left:1595.3px;top:516.7px;font-size:13.5px;color:#878d93;transform:scaleX(0.970);transform-origin:left">-6</div>
<div class="t" style="left:1595.3px;top:546.2px;font-size:13.5px;color:#878d93;transform:scaleX(0.970);transform-origin:left">-10</div>
<div class="t" style="left:1595.3px;top:581.2px;font-size:13.5px;color:#878d93;transform:scaleX(0.970);transform-origin:left">-20</div>
<div class="t" style="left:1595.3px;top:597.7px;font-size:13.5px;color:#878d93;transform:scaleX(0.970);transform-origin:left">-∞</div>
<div class="t" style="left:1595.3px;top:613.7px;font-size:13.5px;color:#878d93;transform:scaleX(0.970);transform-origin:left">-20</div>
<div class="t" style="left:1595.3px;top:648.7px;font-size:13.5px;color:#878d93;transform:scaleX(0.970);transform-origin:left">-10</div>
<div class="t" style="left:1595.3px;top:678.7px;font-size:13.5px;color:#878d93;transform:scaleX(0.970);transform-origin:left">-6</div>
<div class="t" style="left:1595.3px;top:698.7px;font-size:13.5px;color:#878d93;transform:scaleX(0.970);transform-origin:left">-4</div>
<div class="t" style="left:1595.3px;top:725.2px;font-size:13.5px;color:#878d93;transform:scaleX(0.970);transform-origin:left">-2</div>
<div class="t" style="left:1595.3px;top:741.2px;font-size:13.5px;color:#878d93;transform:scaleX(0.970);transform-origin:left">-1</div>
<div class="t" style="left:6.5px;top:273.4px;font-size:13px;color:#9aa0a6;transform:scaleX(0.950);transform-origin:left">L</div>
<div class="t" style="left:5.5px;top:597.9px;font-size:13px;color:#9aa0a6;transform:scaleX(0.950);transform-origin:left">R</div>
<div class="t" style="left:668.0px;top:803.2px;font-size:15.5px;color:#b5b9bd">Instant process</div>
<div class="t" style="left:786.5px;top:803.2px;font-size:15.5px;color:#8a8e92;transform:scaleX(1.032);transform-origin:left">Attenuate</div>
<div class="t" style="left:9.5px;top:855.7px;font-size:14.8px;color:#a0a5aa;transform:scaleX(0.941);transform-origin:left">h:m:s.ms</div>
<div class="t" style="left:9.5px;top:881.6px;font-size:27.3px;color:#f2f2f2;transform:scaleX(1.045);transform-origin:left">00:00:00.000</div>
<div class="t" style="left:10.0px;top:930.7px;font-size:14.5px;color:#8a8e92;transform:scaleX(0.900);transform-origin:left">File opened successfully</div>
<div class="t" style="left:464.7px;top:859.1px;font-size:14px;color:#a0a5aa;transform:scaleX(0.950);transform-origin:center">-70</div>
<div class="t" style="left:504.6px;top:859.1px;font-size:14px;color:#a0a5aa;transform:scaleX(0.950);transform-origin:center">-60</div>
<div class="t" style="left:562.4px;top:859.1px;font-size:14px;color:#a0a5aa;transform:scaleX(0.950);transform-origin:center">-50</div>
<div class="t" style="left:630.6px;top:859.1px;font-size:14px;color:#a0a5aa;transform:scaleX(0.950);transform-origin:center">-40</div>
<div class="t" style="left:703.2px;top:859.1px;font-size:14px;color:#a0a5aa;transform:scaleX(0.950);transform-origin:center">-30</div>
<div class="t" style="left:777.1px;top:859.1px;font-size:14px;color:#a0a5aa;transform:scaleX(0.950);transform-origin:center">-20</div>
<div class="t" style="left:861.8px;top:859.1px;font-size:14px;color:#a0a5aa;transform:scaleX(0.950);transform-origin:center">-9</div>
<div class="t" style="left:884.1px;top:859.1px;font-size:14px;color:#a0a5aa;transform:scaleX(0.950);transform-origin:center">-6</div>
<div class="t" style="left:906.2px;top:859.1px;font-size:14px;color:#a0a5aa;transform:scaleX(0.950);transform-origin:center">-3</div>
<div class="t" style="left:935.4px;top:859.1px;font-size:14px;color:#a0a5aa;transform:scaleX(0.950);transform-origin:center">0</div>
<div class="t" style="left:435.0px;top:859.1px;font-size:14px;color:#a0a5aa;transform:scaleX(1.016);transform-origin:left">-Inf.</div>
<div class="t" style="left:434.5px;top:884.9px;font-size:14px;color:#c0c4c8;transform:scaleX(0.950);transform-origin:left">L</div>
<div class="t" style="left:434.0px;top:908.9px;font-size:14px;color:#c0c4c8;transform:scaleX(0.950);transform-origin:left">R</div>
<div class="t" style="left:962.0px;top:886.4px;font-size:12.5px;color:#c8ccd0;transform:scaleX(0.905);transform-origin:left">-Inf.</div>
<div class="t" style="left:962.0px;top:909.4px;font-size:12.5px;color:#c8ccd0;transform:scaleX(0.905);transform-origin:left">-Inf.</div>
<div class="t" style="left:1045.0px;top:856.5px;font-size:16px;color:#a0a5aa;transform:scaleX(0.926);transform-origin:left">Start</div>
<div class="t" style="left:1146.3px;top:856.5px;font-size:16px;color:#a0a5aa;transform:scaleX(0.843);transform-origin:left">End</div>
<div class="t" style="left:1249.0px;top:856.5px;font-size:16px;color:#a0a5aa;transform:scaleX(0.899);transform-origin:left">Length</div>
<div class="t" style="left:1366.6px;top:856.5px;font-size:16px;color:#a0a5aa;transform:scaleX(0.886);transform-origin:left">Low</div>
<div class="t" style="left:1435.0px;top:856.5px;font-size:16px;color:#a0a5aa;transform:scaleX(0.890);transform-origin:left">High</div>
<div class="t" style="left:1497.7px;top:856.5px;font-size:16px;color:#a0a5aa;transform:scaleX(0.848);transform-origin:left">Range</div>
<div class="t" style="left:1566.1px;top:856.5px;font-size:16px;color:#a0a5aa;transform:scaleX(0.875);transform-origin:left">Cursor</div>
<div class="t" style="left:1011.6px;top:881.1px;font-size:15.5px;color:#a0a5aa;transform:scaleX(0.839);transform-origin:right">Sel</div>
<div class="t" style="left:1000.7px;top:907.5px;font-size:15.5px;color:#a0a5aa;transform:scaleX(0.870);transform-origin:right">View</div>
<div class="t" style="left:1045.0px;top:882.5px;font-size:14.5px;color:#eceef0;transform:scaleX(0.938);transform-origin:left">00:00:00.000</div>
<div class="t" style="left:1146.3px;top:882.5px;font-size:14.5px;color:#eceef0;transform:scaleX(0.933);transform-origin:left">00:07:29.093</div>
<div class="t" style="left:1249.0px;top:882.5px;font-size:14.5px;color:#eceef0;transform:scaleX(0.933);transform-origin:left">00:07:29.093</div>
<div class="t" style="left:1366.6px;top:882.5px;font-size:14.5px;color:#eceef0;transform:scaleX(0.900);transform-origin:left">0</div>
<div class="t" style="left:1435.0px;top:884.0px;font-size:14.5px;color:#eceef0;transform:scaleX(0.930);transform-origin:left">22050</div>
<div class="t" style="left:1497.7px;top:882.5px;font-size:14.5px;color:#eceef0;transform:scaleX(0.940);transform-origin:left">22050</div>
<div class="t" style="left:1045.0px;top:908.9px;font-size:14.5px;color:#eceef0;transform:scaleX(0.938);transform-origin:left">00:00:00.000</div>
<div class="t" style="left:1146.3px;top:908.9px;font-size:14.5px;color:#eceef0;transform:scaleX(0.933);transform-origin:left">00:07:29.093</div>
<div class="t" style="left:1249.0px;top:908.9px;font-size:14.5px;color:#eceef0;transform:scaleX(0.933);transform-origin:left">00:07:29.093</div>
<div class="t" style="left:1366.6px;top:908.9px;font-size:14.5px;color:#eceef0;transform:scaleX(0.900);transform-origin:left">0</div>
<div class="t" style="left:1435.0px;top:908.9px;font-size:14.5px;color:#eceef0;transform:scaleX(0.930);transform-origin:left">22050</div>
<div class="t" style="left:1497.7px;top:908.9px;font-size:14.5px;color:#eceef0;transform:scaleX(0.940);transform-origin:left">22050</div>
<div class="t" style="left:1566.1px;top:882.5px;font-size:14.5px;color:#eceef0;transform:scaleX(0.938);transform-origin:left">00:06:09.386</div>
<div class="t" style="left:1566.1px;top:908.9px;font-size:14.5px;color:#eceef0;transform:scaleX(0.943);transform-origin:left">-17,3 dB</div>
<!-- dialog -->
<div class="a" style="left:561px;top:207px;width:443px;height:37px;background:#ffffff"></div>
<div class="a" style="left:978px;top:215px;width:25px;height:25px;background:#e3e3e3"></div>
<svg class="a" style="left:986px;top:223px" width="9" height="9"><path d="M1 1L8 8M8 1L1 8" stroke="#f8f8f8" stroke-width="1.3"/></svg>
<div class="a" style="left:561px;top:244px;width:443px;height:50px;background:#30363e"></div>
<div class="a" style="left:561px;top:294px;width:443px;height:375px;background:#131619"></div>
<svg class="a" style="left:561px;top:244px" width="443" height="425">
<g stroke="#b9bdc1" stroke-width="1.3" fill="none">
<path d="M13.5 13V26.5H38.5M17.5 17V26.5M21.5 19V26.5M25.5 21V26.5M29.5 24V26.5M33.5 24.5V26.5"/>
<path d="M13.5 31V35M18.5 30V36.5M22.5 28.5V38.5M26.5 30V36.5M31.5 31V35M36.5 31.5V34.5"/>
</g>
<path d="M392.46 22.88 L392.46 27.72 L389.23 28.19 L388.72 29.43 L390.67 32.04 L387.24 35.47 L384.63 33.52 L383.39 34.03 L382.92 37.26 L378.08 37.26 L377.61 34.03 L376.37 33.52 L373.76 35.47 L370.33 32.04 L372.28 29.43 L371.77 28.19 L368.54 27.72 L368.54 22.88 L371.77 22.41 L372.28 21.17 L370.33 18.56 L373.76 15.13 L376.37 17.08 L377.61 16.57 L378.08 13.34 L382.92 13.34 L383.39 16.57 L384.63 17.08 L387.24 15.13 L390.67 18.56 L388.72 21.17 L389.23 22.41Z" stroke="#b9bdc1" stroke-width="1.3" fill="none" stroke-linejoin="round"/>
<circle cx="380.5" cy="25.3" r="4.6" stroke="#b9bdc1" stroke-width="1.3" fill="none"/>
<circle cx="418" cy="25.3" r="12.3" stroke="#b9bdc1" stroke-width="1.4" fill="none"/>
<path d="M414 21.5C414 19 415.8 17.5 418 17.5C420.3 17.5 422 19 422 21.2C422 23.5 418.2 24.3 418.2 27.5V28.5" stroke="#b9bdc1" stroke-width="1.4" fill="none"/>
<circle cx="418.2" cy="32.3" r="1" fill="#b9bdc1"/>
</svg>
<svg class="a" style="left:561px;top:294px" width="443" height="375">
<rect x="212.75" y="27.45" width="80" height="19.5" rx="2" fill="#0f1114" stroke="#40464d" stroke-width="1.5"/>
<rect x="319.75" y="27.45" width="80" height="19.5" rx="2" fill="#0f1114" stroke="#40464d" stroke-width="1.5"/>
<path d="M301.8 43.7C300.3 40.7 297.0 37.7 297.0 34.7A4.8 4.8 0 0 1 306.6 34.7C306.6 37.7 303.3 40.7 301.8 43.7Z" fill="#f2b43c"/>
<path d="M409.5 43.7C408.0 40.7 404.7 37.7 404.7 34.7A4.8 4.8 0 0 1 414.3 34.7C414.3 37.7 411.0 40.7 409.5 43.7Z" fill="#f2b43c"/>
<rect x="212.75" y="54.95" width="80" height="19.5" rx="2" fill="#0f1114" stroke="#40464d" stroke-width="1.5"/>
<rect x="319.75" y="54.95" width="80" height="19.5" rx="2" fill="#0f1114" stroke="#40464d" stroke-width="1.5"/>
<path d="M301.8 71.2C300.3 68.2 297.0 65.2 297.0 62.2A4.8 4.8 0 0 1 306.6 62.2C306.6 65.2 303.3 68.2 301.8 71.2Z" fill="#f2b43c"/>
<path d="M409.5 71.2C408.0 68.2 404.7 65.2 404.7 62.2A4.8 4.8 0 0 1 414.3 62.2C414.3 65.2 411.0 68.2 409.5 71.2Z" fill="#f2b43c"/>
<rect x="212.75" y="82.45" width="80" height="19.5" rx="2" fill="#0f1114" stroke="#40464d" stroke-width="1.5"/>
<rect x="319.75" y="82.45" width="80" height="19.5" rx="2" fill="#0f1114" stroke="#40464d" stroke-width="1.5"/>
<path d="M301.8 98.7C300.3 95.7 297.0 92.7 297.0 89.7A4.8 4.8 0 0 1 306.6 89.7C306.6 92.7 303.3 95.7 301.8 98.7Z" fill="#f2b43c"/>
<path d="M409.5 98.7C408.0 95.7 404.7 92.7 404.7 89.7A4.8 4.8 0 0 1 414.3 89.7C414.3 92.7 411.0 95.7 409.5 98.7Z" fill="#f2b43c"/>
<rect x="212.75" y="109.95" width="80" height="19.5" rx="2" fill="#0f1114" stroke="#40464d" stroke-width="1.5"/>
<rect x="319.75" y="109.95" width="80" height="19.5" rx="2" fill="#0f1114" stroke="#40464d" stroke-width="1.5"/>
<path d="M301.8 126.2C300.3 123.2 297.0 120.2 297.0 117.2A4.8 4.8 0 0 1 306.6 117.2C306.6 120.2 303.3 123.2 301.8 126.2Z" fill="#f2b43c"/>
<path d="M409.5 126.2C408.0 123.2 404.7 120.2 404.7 117.2A4.8 4.8 0 0 1 414.3 117.2C414.3 120.2 411.0 123.2 409.5 126.2Z" fill="#f2b43c"/>
<rect x="212.75" y="137.45" width="80" height="19.5" rx="2" fill="#0f1114" stroke="#40464d" stroke-width="1.5"/>
<rect x="319.75" y="137.45" width="80" height="19.5" rx="2" fill="#0f1114" stroke="#40464d" stroke-width="1.5"/>
<rect x="212.75" y="164.95" width="80" height="19.5" rx="2" fill="#0f1114" stroke="#40464d" stroke-width="1.5"/>
<rect x="319.75" y="164.95" width="80" height="19.5" rx="2" fill="#0f1114" stroke="#40464d" stroke-width="1.5"/>
<path d="M301.8 181.2C300.3 178.2 297.0 175.2 297.0 172.2A4.8 4.8 0 0 1 306.6 172.2C306.6 175.2 303.3 178.2 301.8 181.2Z" fill="#8d6a2a"/>
<path d="M409.5 181.2C408.0 178.2 404.7 175.2 404.7 172.2A4.8 4.8 0 0 1 414.3 172.2C414.3 175.2 411.0 178.2 409.5 181.2Z" fill="#8d6a2a"/>
<rect x="212.75" y="192.45" width="80" height="19.5" rx="2" fill="#0f1114" stroke="#40464d" stroke-width="1.5"/>
<rect x="319.75" y="192.45" width="80" height="19.5" rx="2" fill="#0f1114" stroke="#40464d" stroke-width="1.5"/>
<rect x="264.75" y="227.45" width="85.5" height="19.5" rx="2" fill="#0f1114" stroke="#40464d" stroke-width="1.5"/>
<path d="M359.5 243.7C358.0 240.7 354.7 237.7 354.7 234.7A4.8 4.8 0 0 1 364.3 234.7C364.3 237.7 361.0 240.7 359.5 243.7Z" fill="#f2b43c"/>
<rect x="264.75" y="254.95" width="85.5" height="19.5" rx="2" fill="#0f1114" stroke="#40464d" stroke-width="1.5"/>
<path d="M359.5 271.2C358.0 268.2 354.7 265.2 354.7 262.2A4.8 4.8 0 0 1 364.3 262.2C364.3 265.2 361.0 268.2 359.5 271.2Z" fill="#f2b43c"/>
<rect x="264.75" y="282.45" width="85.5" height="19.5" rx="2" fill="#0f1114" stroke="#40464d" stroke-width="1.5"/>
<rect x="264.75" y="309.95" width="85.5" height="19.5" rx="2" fill="#0f1114" stroke="#40464d" stroke-width="1.5"/>
</svg>
<div class="t" style="left:570.5px;top:218.2px;font-size:15px;color:#8c8c8c;transform:scaleX(0.978);transform-origin:left">Waveform Statistics</div>
<div class="t" style="left:808.9px;top:303.4px;font-size:15.5px;color:#c4c7ca;transform:scaleX(0.920);transform-origin:center">L</div>
<div class="t" style="left:914.9px;top:303.4px;font-size:15.5px;color:#c4c7ca;transform:scaleX(0.920);transform-origin:center">R</div>
<div class="t" style="left:656.1px;top:323.1px;font-size:16px;color:#b4b8bc;transform:scaleX(0.956);transform-origin:right">True peak level</div>
<div class="t" style="left:783.2px;top:323.1px;font-size:16px;color:#ffffff;transform:scaleX(0.890);transform-origin:center">-0,31 dB</div>
<div class="t" style="left:890.8px;top:323.1px;font-size:16px;color:#ffffff;transform:scaleX(0.890);transform-origin:center">-0,38 dB</div>
<div class="t" style="left:634.1px;top:350.6px;font-size:16px;color:#b4b8bc;transform:scaleX(0.964);transform-origin:right">Sample peak level</div>
<div class="t" style="left:783.2px;top:350.6px;font-size:16px;color:#ffffff;transform:scaleX(0.890);transform-origin:center">-0,46 dB</div>
<div class="t" style="left:890.8px;top:350.6px;font-size:16px;color:#ffffff;transform:scaleX(0.890);transform-origin:center">-0,52 dB</div>
<div class="t" style="left:652.9px;top:378.1px;font-size:16px;color:#b4b8bc;transform:scaleX(0.910);transform-origin:right">Max. RMS level</div>
<div class="t" style="left:783.2px;top:378.1px;font-size:16px;color:#ffffff;transform:scaleX(0.890);transform-origin:center">-8,03 dB</div>
<div class="t" style="left:890.8px;top:378.1px;font-size:16px;color:#ffffff;transform:scaleX(0.890);transform-origin:center">-8,08 dB</div>
<div class="t" style="left:657.3px;top:405.6px;font-size:16px;color:#b4b8bc;transform:scaleX(0.911);transform-origin:right">Min. RMS level</div>
<div class="t" style="left:774.9px;top:405.6px;font-size:16px;color:#ffffff;transform:scaleX(0.890);transform-origin:center">-114,22 dB</div>
<div class="t" style="left:881.9px;top:405.6px;font-size:16px;color:#ffffff;transform:scaleX(0.890);transform-origin:center">-101,70 dB</div>
<div class="t" style="left:653.7px;top:433.1px;font-size:16px;color:#b4b8bc;transform:scaleX(0.939);transform-origin:right">Total RMS level</div>
<div class="t" style="left:778.7px;top:433.1px;font-size:16px;color:#ffffff;transform:scaleX(0.890);transform-origin:center">-14,16 dB</div>
<div class="t" style="left:886.3px;top:433.1px;font-size:16px;color:#ffffff;transform:scaleX(0.890);transform-origin:center">-14,20 dB</div>
<div class="t" style="left:586.1px;top:460.6px;font-size:16px;color:#b4b8bc;transform:scaleX(0.966);transform-origin:right">Possibly clipped samples</div>
<div class="t" style="left:808.9px;top:460.6px;font-size:16px;color:#ffffff;transform:scaleX(0.890);transform-origin:center">0</div>
<div class="t" style="left:916.5px;top:460.6px;font-size:16px;color:#ffffff;transform:scaleX(0.890);transform-origin:center">0</div>
<div class="t" style="left:698.5px;top:488.1px;font-size:16px;color:#b4b8bc;transform:scaleX(0.914);transform-origin:right">DC offset</div>
<div class="t" style="left:786.3px;top:488.1px;font-size:16px;color:#ffffff;transform:scaleX(0.890);transform-origin:center">0,000%</div>
<div class="t" style="left:893.9px;top:488.1px;font-size:16px;color:#ffffff;transform:scaleX(0.890);transform-origin:center">0,000%</div>
<div class="t" style="left:629.2px;top:523.1px;font-size:16px;color:#b4b8bc;transform:scaleX(0.968);transform-origin:right">Max. momentary loudness</div>
<div class="t" style="left:827.9px;top:523.1px;font-size:16px;color:#ffffff;transform:scaleX(0.890);transform-origin:center">-11,6 LUFS</div>
<div class="t" style="left:636.3px;top:550.6px;font-size:16px;color:#b4b8bc;transform:scaleX(0.971);transform-origin:right">Max. short-term loudness</div>
<div class="t" style="left:827.3px;top:550.6px;font-size:16px;color:#ffffff;transform:scaleX(0.890);transform-origin:center">-13,0 LUFS</div>
<div class="t" style="left:676.3px;top:578.1px;font-size:16px;color:#b4b8bc;transform:scaleX(0.979);transform-origin:right">Integrated loudness</div>
<div class="t" style="left:827.3px;top:578.1px;font-size:16px;color:#ffffff;transform:scaleX(0.890);transform-origin:center">-14,8 LUFS</div>
<div class="t" style="left:655.8px;top:605.6px;font-size:16px;color:#b4b8bc;transform:scaleX(0.926);transform-origin:right">Loudness range (LRA)</div>
<div class="t" style="left:844.6px;top:605.6px;font-size:16px;color:#ffffff;transform:scaleX(0.890);transform-origin:center">2,7 LU</div>
</body></html>
